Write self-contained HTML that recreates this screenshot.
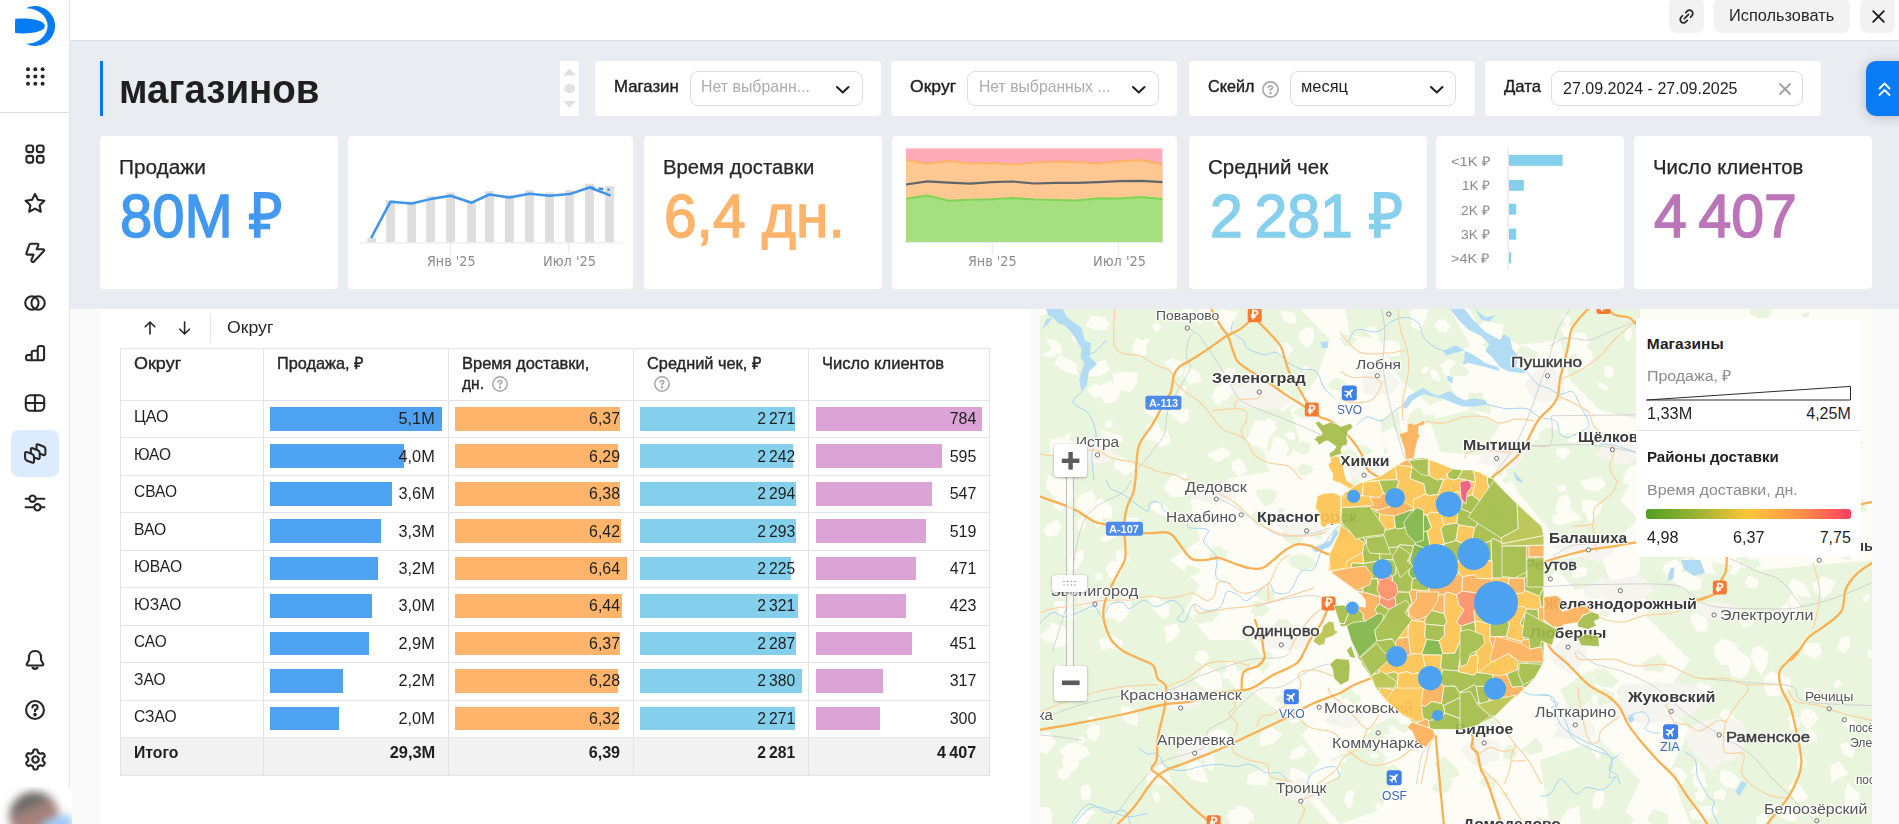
<!DOCTYPE html><html lang="ru"><head><meta charset="utf-8"><title>Дашборд магазинов</title><style>
*{box-sizing:border-box;margin:0;padding:0}
html,body{width:1899px;height:824px;overflow:hidden;background:#fff}
body{font-family:"Liberation Sans",sans-serif;color:#1f1f1f;position:relative;font-size:15px}
.abs{position:absolute}
.t{position:absolute;white-space:nowrap;line-height:1}
.card{position:absolute;background:#fff;border-radius:4px}
.sel{position:absolute;border:1px solid #dedede;border-radius:8px;background:#fff}
.med{-webkit-text-stroke:0.4px currentColor}
.big{-webkit-text-stroke:1.5px currentColor}
svg{position:absolute;overflow:visible}
</style></head><body>
<div class="abs" style="left:70px;top:40px;width:1829px;height:269px;background:#e9edf1"></div>
<div class="abs" style="left:70px;top:309px;width:30px;height:515px;background:#fafafa"></div>
<div class="abs" style="left:1030px;top:309px;width:10px;height:515px;background:#fafafa"></div>
<div class="abs" style="left:1872px;top:309px;width:27px;height:515px;background:#fafafa"></div>
<div class="abs" style="left:70px;top:40px;width:1829px;height:1px;background:#dfe2e6"></div>
<div class="abs" style="left:0;top:0;width:70px;height:824px;background:#fff"></div>
<div class="abs" style="left:69px;top:0;width:1px;height:787px;background:#e3e3e3"></div>
<div class="abs" style="left:0;top:112px;width:69px;height:1px;background:#e0e0e0"></div>
<svg style="left:15px;top:6px" width="40" height="40" viewBox="0 0 40 40"><path d="M11 2.14 A20 20 0 1 1 11 37.86 A21.6 17.86 0 0 0 11 2.14 Z" fill="#027bf3"/><path d="M0.2 12.9 C10 11.7 29.5 13 29.8 20 C29.5 27 10 28.2 0.2 27.1 C-0.1 22 -0.1 18 0.2 12.9 Z" fill="#027bf3"/></svg>
<svg style="left:0;top:0" width="70" height="100" fill="#262626"><circle cx="28.0" cy="69.2" r="2" /><circle cx="35.3" cy="69.2" r="2" /><circle cx="42.6" cy="69.2" r="2" /><circle cx="28.0" cy="76.5" r="2" /><circle cx="35.3" cy="76.5" r="2" /><circle cx="42.6" cy="76.5" r="2" /><circle cx="28.0" cy="83.8" r="2" /><circle cx="35.3" cy="83.8" r="2" /><circle cx="42.6" cy="83.8" r="2" /></svg>
<div class="abs" style="left:11px;top:430px;width:48px;height:47px;border-radius:8px;background:#dcebfd"></div>
<svg style="left:24.0px;top:143.0px" width="22" height="22" viewBox="0 0 16 16" fill="none" stroke="#262626" stroke-width="1.5" stroke-linecap="round" stroke-linejoin="round"><rect x="1.75" y="1.75" width="4.9" height="4.9" rx="1.5"/><rect x="9.35" y="1.75" width="4.9" height="4.9" rx="1.5"/><rect x="1.75" y="9.35" width="4.9" height="4.9" rx="1.5"/><rect x="9.35" y="9.35" width="4.9" height="4.9" rx="1.5"/></svg>
<svg style="left:24.0px;top:192.0px" width="22" height="22" viewBox="0 0 16 16" fill="none" stroke="#262626" stroke-width="1.5" stroke-linecap="round" stroke-linejoin="round"><path d="M8.00 1.35 L10.09 5.68 L14.85 6.33 L11.38 9.65 L12.23 14.37 L8.00 12.10 L3.77 14.37 L4.62 9.65 L1.15 6.33 L5.91 5.68 Z"/></svg>
<svg style="left:24.0px;top:242.0px" width="22" height="22" viewBox="0 0 16 16" fill="none" stroke="#262626" stroke-width="1.5" stroke-linecap="round" stroke-linejoin="round"><path d="M4.9 1.3 H9.7 Q10.7 1.3 10.4 2.2 L9.2 5.3 H13.7 Q15.1 5.4 14.4 6.6 L7.3 14.2 Q5.7 15.2 5.3 13.3 L6.9 9.2 H2.7 Q1.4 9.0 1.8 7.9 L3.9 2.0 Q4.1 1.3 4.9 1.3 Z"/></svg>
<svg style="left:24.0px;top:291.5px" width="22" height="22" viewBox="0 0 16 16" fill="none" stroke="#262626" stroke-width="1.5" stroke-linecap="round" stroke-linejoin="round"><circle cx="5.75" cy="8" r="4.85"/><circle cx="10.25" cy="8" r="4.85"/></svg>
<svg style="left:24.4px;top:342.0px" width="22" height="22" viewBox="0 0 16 16" fill="none" stroke="#262626" stroke-width="1.5" stroke-linecap="round" stroke-linejoin="round"><path d="M5.6 9.4 H2.9 Q1.5 9.4 1.5 10.8 V11.9 Q1.5 13.3 2.9 13.3 H13.1 Q14.6 13.3 14.6 11.8 V4.4 Q14.6 2.9 13.1 2.9 H11.5 Q10.0 2.9 10.0 4.4 V13.3 M5.6 13.3 V7.7 Q5.6 6.3 7.0 6.3 H10.0"/></svg>
<svg style="left:24.0px;top:392.0px" width="22" height="22" viewBox="0 0 16 16" fill="none" stroke="#262626" stroke-width="1.5" stroke-linecap="round" stroke-linejoin="round"><rect x="1.3" y="2.4" width="13.4" height="11.2" rx="3"/><path d="M1.3 8 H14.7 M8 2.4 V13.6"/></svg>
<svg style="left:24.0px;top:442.5px" width="22" height="22" viewBox="0 0 16 16" fill="none" stroke="#262626" stroke-width="1.5" stroke-linecap="round" stroke-linejoin="round"><path d="M9.10 2.06 Q9.10 0.56 10.50 1.10 L14.17 2.52 Q15.57 3.06 15.57 4.56 L15.57 7.72 Q15.57 9.22 14.16 8.71 L10.51 7.37 Q9.10 6.86 9.10 5.36 Z" fill="#dcebfd"/><path d="M4.95 4.83 Q4.95 3.33 6.35 3.87 L10.02 5.29 Q11.42 5.83 11.42 7.33 L11.42 10.49 Q11.42 11.99 10.01 11.48 L6.36 10.14 Q4.95 9.63 4.95 8.13 Z" fill="#dcebfd"/><path d="M0.80 7.60 Q0.80 6.10 2.20 6.64 L5.87 8.06 Q7.27 8.60 7.27 10.10 L7.27 13.26 Q7.27 14.76 5.86 14.25 L2.21 12.91 Q0.80 12.40 0.80 10.90 Z" fill="#dcebfd"/></svg>
<svg style="left:24.0px;top:492.0px" width="22" height="22" viewBox="0 0 16 16" fill="none" stroke="#262626" stroke-width="1.5" stroke-linecap="round" stroke-linejoin="round"><path d="M1.2 4.9 H3.8 M8.6 4.9 H14.8 M1.2 11.1 H7.4 M12.2 11.1 H14.8"/><circle cx="6.2" cy="4.9" r="2.3"/><circle cx="9.8" cy="11.1" r="2.3"/></svg>
<svg style="left:24.3px;top:648.5px" width="22" height="22" viewBox="0 0 16 16" fill="none" stroke="#262626" stroke-width="1.5" stroke-linecap="round" stroke-linejoin="round"><path d="M8 1.5 C5.0 1.5 3.6 3.7 3.6 6.1 L3.6 8.0 L2.0 10.9 Q1.7 12.0 2.9 12.0 L13.1 12.0 Q14.3 12.0 14.0 10.9 L12.4 8.0 L12.4 6.1 C12.4 3.7 11.0 1.5 8 1.5 Z"/><path d="M6.3 13.7 Q8 15.1 9.7 13.7" stroke-width="1.7"/></svg>
<svg style="left:24.4px;top:698.5px" width="22" height="22" viewBox="0 0 16 16" fill="none" stroke="#262626" stroke-width="1.5" stroke-linecap="round" stroke-linejoin="round"><circle cx="8" cy="8" r="6.5"/><path d="M6.1 6.2 Q6.2 4.4 8 4.4 Q9.9 4.4 9.9 6.1 Q9.9 7.2 8 8.0 L8 8.9"/><circle cx="8" cy="11.3" r="0.6" fill="#262626"/></svg>
<svg style="left:23.9px;top:748.1px" width="23" height="23" viewBox="0 0 16 16" fill="none" stroke="#262626" stroke-width="1.5" stroke-linecap="round" stroke-linejoin="round"><path d="M13.05 8.00 L13.04 8.33 L13.01 8.66 L13.21 9.04 L13.80 9.55 L14.34 10.15 L14.42 10.66 L14.23 11.07 L14.02 11.47 L13.78 11.86 L13.51 12.23 L13.03 12.41 L12.24 12.24 L11.50 11.99 L11.07 12.01 L10.81 12.20 L10.53 12.37 L10.23 12.53 L9.93 12.67 L9.71 13.03 L9.55 13.80 L9.31 14.56 L8.91 14.89 L8.45 14.94 L8.00 14.95 L7.55 14.94 L7.09 14.89 L6.69 14.56 L6.45 13.80 L6.29 13.03 L6.07 12.67 L5.77 12.53 L5.48 12.37 L5.19 12.20 L4.93 12.01 L4.50 11.99 L3.76 12.24 L2.97 12.41 L2.49 12.23 L2.22 11.86 L1.98 11.47 L1.77 11.07 L1.58 10.66 L1.66 10.15 L2.20 9.55 L2.79 9.04 L2.99 8.66 L2.96 8.33 L2.95 8.00 L2.96 7.67 L2.99 7.34 L2.79 6.96 L2.20 6.45 L1.66 5.85 L1.58 5.34 L1.77 4.93 L1.98 4.53 L2.22 4.14 L2.49 3.77 L2.97 3.59 L3.76 3.76 L4.50 4.01 L4.93 3.99 L5.19 3.80 L5.47 3.63 L5.77 3.47 L6.07 3.33 L6.29 2.97 L6.45 2.20 L6.69 1.44 L7.09 1.11 L7.55 1.06 L8.00 1.05 L8.45 1.06 L8.91 1.11 L9.31 1.44 L9.55 2.20 L9.71 2.97 L9.93 3.33 L10.23 3.47 L10.53 3.63 L10.81 3.80 L11.07 3.99 L11.50 4.01 L12.24 3.76 L13.03 3.59 L13.51 3.77 L13.78 4.14 L14.02 4.52 L14.23 4.93 L14.42 5.34 L14.34 5.85 L13.80 6.45 L13.21 6.96 L13.01 7.34 L13.04 7.67 Z"/><circle cx="8" cy="8" r="2.25"/></svg>
<div class="abs" style="left:0;top:787px;width:72px;height:37px;background:#fff;overflow:hidden"><div class="abs" style="left:9px;top:5px;width:50px;height:48px;border-radius:50%;transform:rotate(-24deg);filter:blur(4.5px);background:linear-gradient(180deg,#5f5f5d 0%,#6f6a68 22%,#a3837d 40%,#a88078 62%,#b0897c 80%,#b9998e 100%)"></div><div class="abs" style="left:40px;top:30px;width:34px;height:18px;border-radius:40%;transform:rotate(-20deg);filter:blur(4px);background:#9cc8f6"></div></div>
<div class="abs" style="left:1669px;top:-3px;width:35px;height:36px;border-radius:8px;background:#f2f2f2"></div>
<div class="abs" style="left:1714px;top:-3px;width:136px;height:36px;border-radius:8px;background:#f2f2f2"></div>
<div class="abs" style="left:1860px;top:-3px;width:35px;height:36px;border-radius:8px;background:#f2f2f2"></div>
<div class="t " id="t_use" style="left:1729.3px;transform-origin:0 50%;top:7.0px;font-size:17px;transform:scaleX(0.961);color:#262626">Использовать</div>
<svg style="left:1678px;top:7.5px" width="17" height="17" viewBox="0 0 16 16" fill="none" stroke="#262626" stroke-width="1.6" stroke-linecap="round" stroke-linejoin="round"><path d="M7.3 4.3 L8.6 3 A3.1 3.1 0 0 1 13 7.4 L11.7 8.7"/><path d="M8.7 11.7 L7.4 13 A3.1 3.1 0 0 1 3 8.6 L4.3 7.3"/><path d="M6 10 L10 6"/></svg>
<svg style="left:1871.5px;top:9.5px" width="13" height="13" viewBox="0 0 13 13" fill="none" stroke="#1f1f1f" stroke-width="1.9" stroke-linecap="round"><path d="M1.2 1.2 L11.8 11.8 M11.8 1.2 L1.2 11.8"/></svg>
<div class="abs" style="left:100px;top:61px;width:3px;height:55px;background:#0a75f5"></div>
<div class="t " id="t_title" style="left:119.0px;transform-origin:0 50%;top:69.3px;font-size:41px;transform:scaleX(0.939);font-weight:700;color:#1f1f1f">магазинов</div>
<div class="abs" style="left:560px;top:61px;width:19px;height:55px;background:#fff"></div>
<svg style="left:560px;top:61px" width="19" height="55" fill="#e1e1e1"><path d="M3 14.5 L9.5 7.5 L16 14.5 Z"/><ellipse cx="9.5" cy="27.5" rx="5.5" ry="4.5"/><path d="M3 40 L9.5 47 L16 40 Z"/></svg>
<div class="card" style="left:595px;top:61px;width:286px;height:55px"></div>
<div class="card" style="left:891px;top:61px;width:286px;height:55px"></div>
<div class="card" style="left:1189px;top:61px;width:286px;height:55px"></div>
<div class="card" style="left:1485px;top:61px;width:336px;height:55px"></div>
<div class="t med" id="t_f1" style="left:614.3px;transform-origin:0 50%;top:78.4px;font-size:17px;transform:scaleX(0.987);color:#1f1f1f">Магазин</div>
<div class="sel" style="left:690px;top:71px;width:173px;height:34.5px"></div>
<div class="t " id="t_p1" style="left:701.0px;transform-origin:0 50%;top:78.4px;font-size:17px;transform:scaleX(0.935);color:#adadad">Нет выбранн...</div>
<svg style="left:836.2px;top:85.5px" width="13" height="8" viewBox="0 0 13 8" fill="none" stroke="#1f1f1f" stroke-width="2" stroke-linecap="round" stroke-linejoin="round"><path d="M1 1 L6.8 6.5 L12.5 1"/></svg>
<div class="t med" id="t_f2" style="left:910.4px;transform-origin:0 50%;top:78.4px;font-size:17px;transform:scaleX(1.033);color:#1f1f1f">Округ</div>
<div class="sel" style="left:967px;top:71px;width:192px;height:34.5px"></div>
<div class="t " id="t_p2" style="left:978.5px;transform-origin:0 50%;top:78.4px;font-size:17px;transform:scaleX(0.926);color:#adadad">Нет выбранных ...</div>
<svg style="left:1132.2px;top:85.5px" width="13" height="8" viewBox="0 0 13 8" fill="none" stroke="#1f1f1f" stroke-width="2" stroke-linecap="round" stroke-linejoin="round"><path d="M1 1 L6.8 6.5 L12.5 1"/></svg>
<div class="t med" id="t_f3" style="left:1207.6px;transform-origin:0 50%;top:78.4px;font-size:17px;transform:scaleX(0.951);color:#1f1f1f">Скейл</div>
<svg style="left:1261.5px;top:80.5px" width="17" height="17" viewBox="0 0 16 16" fill="none" stroke="#a6a6a6" stroke-width="1.5" stroke-linecap="round" stroke-linejoin="round"><circle cx="8" cy="8" r="7.2"/><path d="M6.0 6.3 Q6.1 4.4 8 4.4 Q9.9 4.4 9.9 6.1 Q9.9 7.2 8 8.0 L8 9.0"/><circle cx="8" cy="11.5" r="0.5" fill="#a6a6a6"/></svg>
<div class="sel" style="left:1290px;top:71px;width:166px;height:34.5px"></div>
<div class="t " id="t_p3" style="left:1301.0px;transform-origin:0 50%;top:78.4px;font-size:17px;transform:scaleX(0.967);color:#1f1f1f">месяц</div>
<svg style="left:1429.8px;top:85.5px" width="13" height="8" viewBox="0 0 13 8" fill="none" stroke="#1f1f1f" stroke-width="2" stroke-linecap="round" stroke-linejoin="round"><path d="M1 1 L6.8 6.5 L12.5 1"/></svg>
<div class="t med" id="t_f4" style="left:1504.0px;transform-origin:0 50%;top:78.4px;font-size:17px;transform:scaleX(0.983);color:#1f1f1f">Дата</div>
<div class="sel" style="left:1551px;top:71px;width:252px;height:34.5px"></div>
<div class="t " id="t_p4" style="left:1562.5px;transform-origin:0 50%;top:79.5px;font-size:17px;transform:scaleX(0.942);color:#1f1f1f">27.09.2024 - 27.09.2025</div>
<svg style="left:1779px;top:83px" width="12" height="12" viewBox="0 0 12 12" fill="none" stroke="#9e9e9e" stroke-width="1.8" stroke-linecap="round"><path d="M1 1 L11 11 M11 1 L1 11"/></svg>
<div class="abs" style="left:1866px;top:61px;width:40px;height:55px;border-radius:10px 0 0 10px;background:#0a7bf7;box-shadow:0 1px 12px rgba(0,0,0,.22)"></div>
<svg style="left:1877.5px;top:81.5px" width="13" height="15" viewBox="0 0 13 15" fill="none" stroke="#fff" stroke-width="1.8" stroke-linecap="round" stroke-linejoin="round"><path d="M1.5 6.5 L6.5 1.5 L11.5 6.5 M1.5 13 L6.5 8 L11.5 13"/></svg>
<div class="card" style="left:100px;top:136px;width:238px;height:153px"></div>
<div class="card" style="left:348px;top:136px;width:285px;height:153px"></div>
<div class="card" style="left:644px;top:136px;width:238px;height:153px"></div>
<div class="card" style="left:892px;top:136px;width:285px;height:153px"></div>
<div class="card" style="left:1189px;top:136px;width:238px;height:153px"></div>
<div class="card" style="left:1436px;top:136px;width:188px;height:153px"></div>
<div class="card" style="left:1634px;top:136px;width:238px;height:153px"></div>
<div class="t " id="t_k1l" style="left:119.4px;transform-origin:0 50%;top:156.8px;font-size:20px;transform:scaleX(1.039);color:#262626;-webkit-text-stroke:0.25px #262626">Продажи</div>
<div class="t big" id="t_k1v" style="left:120.0px;transform-origin:0 50%;top:184.7px;font-size:62px;transform:scaleX(0.934);color:#4398f0">80M&nbsp;₽</div>
<div class="t " id="t_k3l" style="left:663.0px;transform-origin:0 50%;top:156.8px;font-size:20px;transform:scaleX(1.015);color:#262626;-webkit-text-stroke:0.25px #262626">Время доставки</div>
<div class="t big" id="t_k3v" style="left:663.6px;transform-origin:0 50%;top:184.7px;font-size:62px;transform:scaleX(0.946);color:#ffb46b">6,4&nbsp;дн.</div>
<div class="t " id="t_k5l" style="left:1208.0px;transform-origin:0 50%;top:156.8px;font-size:20px;transform:scaleX(1.026);color:#262626;-webkit-text-stroke:0.25px #262626">Средний чек</div>
<div class="t big" id="t_k5v" style="left:1210.0px;transform-origin:0 50%;top:184.7px;font-size:62px;transform:scaleX(0.950);color:#86d0ee">2&#8201;281&nbsp;₽</div>
<div class="t " id="t_k7l" style="left:1653.0px;transform-origin:0 50%;top:156.8px;font-size:20px;transform:scaleX(1.018);color:#262626;-webkit-text-stroke:0.25px #262626">Число клиентов</div>
<div class="t big" id="t_k7v" style="left:1653.8px;transform-origin:0 50%;top:184.7px;font-size:62px;transform:scaleX(0.950);color:#bb75b8">4&#8201;407</div>
<svg style="left:0;top:0" width="1899" height="300"><rect x="367.2" y="238.2" width="8.8" height="4.1" fill="#dedede"/><rect x="386.1" y="200.1" width="8.8" height="42.2" fill="#dedede"/><rect x="407.3" y="201.7" width="8.8" height="40.6" fill="#dedede"/><rect x="426.1" y="196.1" width="8.8" height="46.2" fill="#dedede"/><rect x="446.2" y="192.5" width="8.8" height="49.8" fill="#dedede"/><rect x="467.2" y="201.1" width="8.8" height="41.2" fill="#dedede"/><rect x="485.0" y="191.1" width="8.8" height="51.2" fill="#dedede"/><rect x="505.0" y="195.1" width="8.8" height="47.2" fill="#dedede"/><rect x="525.1" y="190.1" width="8.8" height="52.2" fill="#dedede"/><rect x="545.1" y="192.5" width="8.8" height="49.8" fill="#dedede"/><rect x="565.1" y="190.1" width="8.8" height="52.2" fill="#dedede"/><rect x="585.1" y="183.7" width="8.8" height="58.6" fill="#dedede"/><rect x="605.2" y="186.1" width="8.8" height="56.2" fill="#dedede"/><rect x="360" y="242.3" width="261.5" height="1" fill="#e6e6e6"/><rect x="450.1" y="243" width="1" height="11" fill="#e6e6e6"/><rect x="567.8" y="243" width="1" height="11" fill="#e6e6e6"/><polyline points="371.6,237.2 390.5,201.7 411.7,203.5 430.5,199.1 450.6,195.7 471.6,202.7 489.4,194.5 509.4,197.5 529.5,193.7 549.5,195.7 569.5,194.1 589.5,187.5 609.6,195.1" fill="none" stroke="#3f94ee" stroke-width="2.5" stroke-linejoin="round" stroke-linecap="round"/><line x1="589.5" y1="187.5" x2="609.6" y2="189.7" stroke="#3f94ee" stroke-width="2.6" stroke-dasharray="5 4" stroke-linecap="butt"/></svg>
<div class="t " id="t_c1a" style="left:426.5px;transform-origin:0 50%;top:254.2px;font-size:14.2px;transform:scaleX(0.899);font-family:'DejaVu Sans',sans-serif;color:#8c8c8c">Янв '25</div>
<div class="t " id="t_c1b" style="left:542.6px;transform-origin:0 50%;top:254.2px;font-size:14.2px;transform:scaleX(0.911);font-family:'DejaVu Sans',sans-serif;color:#8c8c8c">Июл '25</div>
<svg style="left:0;top:0" width="1899" height="300"><rect x="906.0" y="148.4" width="256.4" height="93.5" fill="#ffabb8"/><polygon points="906.0,160.0 927.4,163.6 948.7,161.0 970.1,163.6 991.5,163.0 1012.8,164.6 1034.2,162.6 1055.6,161.4 1076.9,162.0 1098.3,163.4 1119.7,161.0 1141.0,160.0 1162.4,164.6 1162.4,241.9 906.0,241.9" fill="#ffc892"/><polygon points="906.0,198.7 927.4,195.5 948.7,200.7 970.1,199.7 991.5,199.3 1012.8,198.1 1034.2,199.5 1055.6,199.9 1076.9,200.5 1098.3,198.3 1119.7,198.5 1141.0,197.1 1162.4,199.1 1162.4,241.9 906.0,241.9" fill="#a6df7f"/><polyline points="906.0,160.0 927.4,163.6 948.7,161.0 970.1,163.6 991.5,163.0 1012.8,164.6 1034.2,162.6 1055.6,161.4 1076.9,162.0 1098.3,163.4 1119.7,161.0 1141.0,160.0 1162.4,164.6" fill="none" stroke="#ffb266" stroke-width="2" stroke-linejoin="round"/><polyline points="906.0,198.7 927.4,195.5 948.7,200.7 970.1,199.7 991.5,199.3 1012.8,198.1 1034.2,199.5 1055.6,199.9 1076.9,200.5 1098.3,198.3 1119.7,198.5 1141.0,197.1 1162.4,199.1" fill="none" stroke="#7fd455" stroke-width="2" stroke-linejoin="round"/><polyline points="906.0,184.5 927.4,181.3 948.7,182.7 970.1,183.7 991.5,182.1 1012.8,181.5 1034.2,183.5 1055.6,182.9 1076.9,182.9 1098.3,182.1 1119.7,181.1 1141.0,180.9 1162.4,182.1" fill="none" stroke="#60656b" stroke-width="2.2" stroke-linejoin="round"/><rect x="903.6" y="242.3" width="261.2" height="1" fill="#e6e6e6"/><rect x="991.7" y="243" width="1" height="11" fill="#e6e6e6"/><rect x="1117.8" y="243" width="1" height="11" fill="#e6e6e6"/></svg>
<div class="t " id="t_c2a" style="left:968.0px;transform-origin:0 50%;top:254.2px;font-size:14.2px;transform:scaleX(0.899);font-family:'DejaVu Sans',sans-serif;color:#8c8c8c">Янв '25</div>
<div class="t " id="t_c2b" style="left:1092.5px;transform-origin:0 50%;top:254.2px;font-size:14.2px;transform:scaleX(0.912);font-family:'DejaVu Sans',sans-serif;color:#8c8c8c">Июл '25</div>
<svg style="left:0;top:0" width="1899" height="300"><rect x="1507.6" y="148" width="1" height="122" fill="#e0e0e0"/><rect x="1509" y="155.0" width="53.6" height="10.8" fill="#84d0ec"/><rect x="1509" y="180.0" width="14.8" height="10.8" fill="#84d0ec"/><rect x="1509" y="203.7" width="7.2" height="10.9" fill="#84d0ec"/><rect x="1509" y="228.6" width="7.2" height="11.1" fill="#84d0ec"/><rect x="1509" y="252.3" width="2.0" height="11.0" fill="#84d0ec"/></svg>
<div class="t " id="t_h0" style="left:1450.7px;transform-origin:0 50%;top:155.1px;font-size:13.2px;transform:scaleX(1.113);color:#8a8a8a;font-weight:400">&lt;1K&nbsp;₽</div>
<div class="t " id="t_h1" style="left:1461.8px;transform-origin:0 50%;top:179.1px;font-size:13.2px;transform:scaleX(1.022);color:#8a8a8a;font-weight:400">1K&nbsp;₽</div>
<div class="t " id="t_h2" style="left:1461.0px;transform-origin:0 50%;top:204.0px;font-size:13.2px;transform:scaleX(1.050);color:#8a8a8a;font-weight:400">2K&nbsp;₽</div>
<div class="t " id="t_h3" style="left:1461.0px;transform-origin:0 50%;top:228.0px;font-size:13.2px;transform:scaleX(1.050);color:#8a8a8a;font-weight:400">3K&nbsp;₽</div>
<div class="t " id="t_h4" style="left:1451.4px;transform-origin:0 50%;top:251.6px;font-size:13.2px;transform:scaleX(1.093);color:#8a8a8a;font-weight:400">&gt;4K&nbsp;₽</div>
<svg style="left:143px;top:320px" width="50" height="16" fill="none" stroke="#262626" stroke-width="1.6" stroke-linecap="round" stroke-linejoin="round"><path d="M7 14 V2.2 M2.2 6.8 L7 2 L11.8 6.8"/><path d="M41.6 2 V13.8 M36.8 9.2 L41.6 14 L46.4 9.2"/></svg>
<div class="abs" style="left:210px;top:313.5px;width:1px;height:29px;background:#e5e5e5"></div>
<div class="t " id="t_tb" style="left:226.6px;transform-origin:0 50%;top:318.6px;font-size:17px;transform:scaleX(1.038);color:#262626">Округ</div>
<div class="abs" style="left:120.5px;top:737.4px;width:869.0px;height:37.7px;background:#f2f2f2"></div>
<svg style="left:0;top:0" width="1040" height="824" shape-rendering="crispEdges"><rect x="120.0" y="348.0" width="870.0" height="1" fill="#e3e3e3"/><rect x="120.0" y="399.9" width="870.0" height="1" fill="#e3e3e3"/><rect x="120.0" y="437.3" width="870.0" height="1" fill="#e3e3e3"/><rect x="120.0" y="474.8" width="870.0" height="1" fill="#e3e3e3"/><rect x="120.0" y="512.2" width="870.0" height="1" fill="#e3e3e3"/><rect x="120.0" y="549.7" width="870.0" height="1" fill="#e3e3e3"/><rect x="120.0" y="587.1" width="870.0" height="1" fill="#e3e3e3"/><rect x="120.0" y="624.6" width="870.0" height="1" fill="#e3e3e3"/><rect x="120.0" y="662.0" width="870.0" height="1" fill="#e3e3e3"/><rect x="120.0" y="699.5" width="870.0" height="1" fill="#e3e3e3"/><rect x="120.0" y="736.9" width="870.0" height="1" fill="#e3e3e3"/><rect x="120.0" y="774.6" width="870.0" height="1" fill="#e3e3e3"/><rect x="120.0" y="348.0" width="1" height="427.6" fill="#e3e3e3"/><rect x="262.9" y="348.0" width="1" height="427.6" fill="#e3e3e3"/><rect x="447.9" y="348.0" width="1" height="427.6" fill="#e3e3e3"/><rect x="632.9" y="348.0" width="1" height="427.6" fill="#e3e3e3"/><rect x="807.9" y="348.0" width="1" height="427.6" fill="#e3e3e3"/><rect x="989.0" y="348.0" width="1" height="427.6" fill="#e3e3e3"/><rect x="270" y="407.0" width="172.0" height="23.6" fill="#4da2f1"/><rect x="455.2" y="407.0" width="164.7" height="23.6" fill="#ffb46b"/><rect x="640" y="407.0" width="154.6" height="23.6" fill="#84d0ec"/><rect x="816" y="407.0" width="166.0" height="23.6" fill="#dca3d6"/><rect x="270" y="444.4" width="134.0" height="23.6" fill="#4da2f1"/><rect x="455.2" y="444.4" width="162.6" height="23.6" fill="#ffb46b"/><rect x="640" y="444.4" width="152.6" height="23.6" fill="#84d0ec"/><rect x="816" y="444.4" width="126.0" height="23.6" fill="#dca3d6"/><rect x="270" y="481.9" width="121.6" height="23.6" fill="#4da2f1"/><rect x="455.2" y="481.9" width="165.0" height="23.6" fill="#ffb46b"/><rect x="640" y="481.9" width="156.1" height="23.6" fill="#84d0ec"/><rect x="816" y="481.9" width="115.8" height="23.6" fill="#dca3d6"/><rect x="270" y="519.3" width="111.0" height="23.6" fill="#4da2f1"/><rect x="455.2" y="519.3" width="166.0" height="23.6" fill="#ffb46b"/><rect x="640" y="519.3" width="156.1" height="23.6" fill="#84d0ec"/><rect x="816" y="519.3" width="109.9" height="23.6" fill="#dca3d6"/><rect x="270" y="556.8" width="108.0" height="23.6" fill="#4da2f1"/><rect x="455.2" y="556.8" width="171.7" height="23.6" fill="#ffb46b"/><rect x="640" y="556.8" width="151.4" height="23.6" fill="#84d0ec"/><rect x="816" y="556.8" width="99.7" height="23.6" fill="#dca3d6"/><rect x="270" y="594.2" width="102.0" height="23.6" fill="#4da2f1"/><rect x="455.2" y="594.2" width="166.5" height="23.6" fill="#ffb46b"/><rect x="640" y="594.2" width="158.0" height="23.6" fill="#84d0ec"/><rect x="816" y="594.2" width="89.6" height="23.6" fill="#dca3d6"/><rect x="270" y="631.7" width="98.7" height="23.6" fill="#4da2f1"/><rect x="455.2" y="631.7" width="164.7" height="23.6" fill="#ffb46b"/><rect x="640" y="631.7" width="155.7" height="23.6" fill="#84d0ec"/><rect x="816" y="631.7" width="95.5" height="23.6" fill="#dca3d6"/><rect x="270" y="669.1" width="72.8" height="23.6" fill="#4da2f1"/><rect x="455.2" y="669.1" width="162.4" height="23.6" fill="#ffb46b"/><rect x="640" y="669.1" width="162.0" height="23.6" fill="#84d0ec"/><rect x="816" y="669.1" width="67.1" height="23.6" fill="#dca3d6"/><rect x="270" y="706.6" width="68.7" height="23.6" fill="#4da2f1"/><rect x="455.2" y="706.6" width="163.4" height="23.6" fill="#ffb46b"/><rect x="640" y="706.6" width="154.6" height="23.6" fill="#84d0ec"/><rect x="816" y="706.6" width="63.5" height="23.6" fill="#dca3d6"/></svg>
<div class="t med" id="t_th1" style="left:133.7px;transform-origin:0 50%;top:354.6px;font-size:17px;transform:scaleX(1.058);color:#262626">Округ</div>
<div class="t med" id="t_th2" style="left:276.9px;transform-origin:0 50%;top:354.6px;font-size:17px;transform:scaleX(0.958);color:#262626">Продажа,&nbsp;₽</div>
<div class="t med" id="t_th3" style="left:462.0px;transform-origin:0 50%;top:354.6px;font-size:17px;transform:scaleX(0.968);color:#262626">Время доставки,</div>
<div class="t med" id="t_th3b" style="left:462.0px;transform-origin:0 50%;top:375.3px;font-size:17px;transform:scaleX(0.915);color:#262626">дн.</div>
<svg style="left:491.8px;top:375.6px" width="16" height="16" viewBox="0 0 16 16" fill="none" stroke="#a6a6a6" stroke-width="1.5" stroke-linecap="round" stroke-linejoin="round"><circle cx="8" cy="8" r="7.2"/><path d="M6.0 6.3 Q6.1 4.4 8 4.4 Q9.9 4.4 9.9 6.1 Q9.9 7.2 8 8.0 L8 9.0"/><circle cx="8" cy="11.5" r="0.5" fill="#a6a6a6"/></svg>
<div class="t med" id="t_th4" style="left:646.6px;transform-origin:0 50%;top:354.6px;font-size:17px;transform:scaleX(0.961);color:#262626">Средний чек,&nbsp;₽</div>
<svg style="left:653.6px;top:375.6px" width="16" height="16" viewBox="0 0 16 16" fill="none" stroke="#a6a6a6" stroke-width="1.5" stroke-linecap="round" stroke-linejoin="round"><circle cx="8" cy="8" r="7.2"/><path d="M6.0 6.3 Q6.1 4.4 8 4.4 Q9.9 4.4 9.9 6.1 Q9.9 7.2 8 8.0 L8 9.0"/><circle cx="8" cy="11.5" r="0.5" fill="#a6a6a6"/></svg>
<div class="t med" id="t_th5" style="left:822.3px;transform-origin:0 50%;top:354.6px;font-size:17px;transform:scaleX(0.972);color:#262626">Число клиентов</div>
<div class="t " id="t_n0" style="left:134.2px;transform-origin:0 50%;top:408.4px;font-size:17px;transform:scaleX(0.938);">ЦАО</div>
<div class="t " id="t_s0" style="right:1464.2px;transform-origin:100% 50%;top:410.2px;font-size:17px;transform:scaleX(0.960);">5,1M</div>
<div class="t " id="t_m0" style="right:1278.8px;transform-origin:100% 50%;top:410.2px;font-size:17px;transform:scaleX(0.937);">6,37</div>
<div class="t " id="t_c0" style="right:1104.0px;transform-origin:100% 50%;top:410.2px;font-size:17px;transform:scaleX(0.922);">2&#8201;271</div>
<div class="t " id="t_l0" style="right:922.8px;transform-origin:100% 50%;top:410.2px;font-size:17px;transform:scaleX(0.941);">784</div>
<div class="t " id="t_n1" style="left:134.2px;transform-origin:0 50%;top:445.9px;font-size:17px;transform:scaleX(0.909);">ЮАО</div>
<div class="t " id="t_s1" style="right:1464.2px;transform-origin:100% 50%;top:447.7px;font-size:17px;transform:scaleX(0.960);">4,0M</div>
<div class="t " id="t_m1" style="right:1278.8px;transform-origin:100% 50%;top:447.7px;font-size:17px;transform:scaleX(0.937);">6,29</div>
<div class="t " id="t_c1" style="right:1104.0px;transform-origin:100% 50%;top:447.7px;font-size:17px;transform:scaleX(0.922);">2&#8201;242</div>
<div class="t " id="t_l1" style="right:922.8px;transform-origin:100% 50%;top:447.7px;font-size:17px;transform:scaleX(0.941);">595</div>
<div class="t " id="t_n2" style="left:134.2px;transform-origin:0 50%;top:483.3px;font-size:17px;transform:scaleX(0.910);">СВАО</div>
<div class="t " id="t_s2" style="right:1464.2px;transform-origin:100% 50%;top:485.1px;font-size:17px;transform:scaleX(0.960);">3,6M</div>
<div class="t " id="t_m2" style="right:1278.8px;transform-origin:100% 50%;top:485.1px;font-size:17px;transform:scaleX(0.937);">6,38</div>
<div class="t " id="t_c2" style="right:1104.0px;transform-origin:100% 50%;top:485.1px;font-size:17px;transform:scaleX(0.922);">2&#8201;294</div>
<div class="t " id="t_l2" style="right:922.8px;transform-origin:100% 50%;top:485.1px;font-size:17px;transform:scaleX(0.941);">547</div>
<div class="t " id="t_n3" style="left:134.2px;transform-origin:0 50%;top:520.7px;font-size:17px;transform:scaleX(0.924);">ВАО</div>
<div class="t " id="t_s3" style="right:1464.2px;transform-origin:100% 50%;top:522.5px;font-size:17px;transform:scaleX(0.960);">3,3M</div>
<div class="t " id="t_m3" style="right:1278.8px;transform-origin:100% 50%;top:522.5px;font-size:17px;transform:scaleX(0.937);">6,42</div>
<div class="t " id="t_c3" style="right:1104.0px;transform-origin:100% 50%;top:522.5px;font-size:17px;transform:scaleX(0.922);">2&#8201;293</div>
<div class="t " id="t_l3" style="right:922.8px;transform-origin:100% 50%;top:522.5px;font-size:17px;transform:scaleX(0.941);">519</div>
<div class="t " id="t_n4" style="left:134.2px;transform-origin:0 50%;top:558.2px;font-size:17px;transform:scaleX(0.922);">ЮВАО</div>
<div class="t " id="t_s4" style="right:1464.2px;transform-origin:100% 50%;top:560.0px;font-size:17px;transform:scaleX(0.960);">3,2M</div>
<div class="t " id="t_m4" style="right:1278.8px;transform-origin:100% 50%;top:560.0px;font-size:17px;transform:scaleX(0.937);">6,64</div>
<div class="t " id="t_c4" style="right:1104.0px;transform-origin:100% 50%;top:560.0px;font-size:17px;transform:scaleX(0.922);">2&#8201;225</div>
<div class="t " id="t_l4" style="right:922.8px;transform-origin:100% 50%;top:560.0px;font-size:17px;transform:scaleX(0.941);">471</div>
<div class="t " id="t_n5" style="left:134.2px;transform-origin:0 50%;top:595.6px;font-size:17px;transform:scaleX(0.916);">ЮЗАО</div>
<div class="t " id="t_s5" style="right:1464.2px;transform-origin:100% 50%;top:597.4px;font-size:17px;transform:scaleX(0.960);">3,0M</div>
<div class="t " id="t_m5" style="right:1278.8px;transform-origin:100% 50%;top:597.4px;font-size:17px;transform:scaleX(0.937);">6,44</div>
<div class="t " id="t_c5" style="right:1104.0px;transform-origin:100% 50%;top:597.4px;font-size:17px;transform:scaleX(0.922);">2&#8201;321</div>
<div class="t " id="t_l5" style="right:922.8px;transform-origin:100% 50%;top:597.4px;font-size:17px;transform:scaleX(0.941);">423</div>
<div class="t " id="t_n6" style="left:134.2px;transform-origin:0 50%;top:633.1px;font-size:17px;transform:scaleX(0.903);">САО</div>
<div class="t " id="t_s6" style="right:1464.2px;transform-origin:100% 50%;top:634.9px;font-size:17px;transform:scaleX(0.960);">2,9M</div>
<div class="t " id="t_m6" style="right:1278.8px;transform-origin:100% 50%;top:634.9px;font-size:17px;transform:scaleX(0.937);">6,37</div>
<div class="t " id="t_c6" style="right:1104.0px;transform-origin:100% 50%;top:634.9px;font-size:17px;transform:scaleX(0.922);">2&#8201;287</div>
<div class="t " id="t_l6" style="right:922.8px;transform-origin:100% 50%;top:634.9px;font-size:17px;transform:scaleX(0.941);">451</div>
<div class="t " id="t_n7" style="left:134.2px;transform-origin:0 50%;top:670.5px;font-size:17px;transform:scaleX(0.917);">ЗАО</div>
<div class="t " id="t_s7" style="right:1464.2px;transform-origin:100% 50%;top:672.3px;font-size:17px;transform:scaleX(0.960);">2,2M</div>
<div class="t " id="t_m7" style="right:1278.8px;transform-origin:100% 50%;top:672.3px;font-size:17px;transform:scaleX(0.937);">6,28</div>
<div class="t " id="t_c7" style="right:1104.0px;transform-origin:100% 50%;top:672.3px;font-size:17px;transform:scaleX(0.922);">2&#8201;380</div>
<div class="t " id="t_l7" style="right:922.8px;transform-origin:100% 50%;top:672.3px;font-size:17px;transform:scaleX(0.941);">317</div>
<div class="t " id="t_n8" style="left:134.2px;transform-origin:0 50%;top:708.0px;font-size:17px;transform:scaleX(0.919);">СЗАО</div>
<div class="t " id="t_s8" style="right:1464.2px;transform-origin:100% 50%;top:709.8px;font-size:17px;transform:scaleX(0.960);">2,0M</div>
<div class="t " id="t_m8" style="right:1278.8px;transform-origin:100% 50%;top:709.8px;font-size:17px;transform:scaleX(0.937);">6,32</div>
<div class="t " id="t_c8" style="right:1104.0px;transform-origin:100% 50%;top:709.8px;font-size:17px;transform:scaleX(0.922);">2&#8201;271</div>
<div class="t " id="t_l8" style="right:922.8px;transform-origin:100% 50%;top:709.8px;font-size:17px;transform:scaleX(0.941);">300</div>
<div class="t " id="t_ft0" style="left:134.0px;transform-origin:0 50%;top:744.2px;font-size:17px;transform:scaleX(0.926);color:#1f1f1f;font-weight:700">Итого</div>
<div class="t " id="t_ft1" style="right:1464.2px;transform-origin:100% 50%;top:744.2px;font-size:17px;transform:scaleX(0.965);color:#1f1f1f;font-weight:700">29,3M</div>
<div class="t " id="t_ft2" style="right:1278.8px;transform-origin:100% 50%;top:744.2px;font-size:17px;transform:scaleX(0.949);color:#1f1f1f;font-weight:700">6,39</div>
<div class="t " id="t_ft3" style="right:1104.0px;transform-origin:100% 50%;top:744.2px;font-size:17px;transform:scaleX(0.922);color:#1f1f1f;font-weight:700">2&#8201;281</div>
<div class="t " id="t_ft4" style="right:922.8px;transform-origin:100% 50%;top:744.2px;font-size:17px;transform:scaleX(0.951);color:#1f1f1f;font-weight:700">4&#8201;407</div>
<svg style="left:1040px;top:309px;overflow:hidden" width="832" height="515" viewBox="1040 309 832 515"><rect x="1040" y="309" width="832" height="515" fill="#fdfdf6"/><polygon points="1040.0,309.0 1300.0,309.0 1330.0,340.0 1316.0,380.0 1290.0,410.0 1300.0,440.0 1280.0,470.0 1230.0,478.0 1190.0,500.0 1200.0,540.0 1170.0,560.0 1200.0,585.0 1185.0,610.0 1210.0,640.0 1250.0,640.0 1270.0,665.0 1250.0,690.0 1290.0,720.0 1320.0,760.0 1300.0,790.0 1330.0,824.0 1040.0,824.0" fill="#e9f5dc"/><polygon points="1345.0,309.0 1450.0,309.0 1470.0,345.0 1440.0,365.0 1455.0,395.0 1430.0,405.0 1400.0,380.0 1380.0,340.0 1350.0,335.0" fill="#e9f5dc"/><polygon points="1470.0,309.0 1640.0,309.0 1640.0,420.0 1600.0,410.0 1570.0,380.0 1560.0,340.0 1520.0,345.0 1480.0,330.0" fill="#e9f5dc"/><polygon points="1505.0,470.0 1535.0,440.0 1590.0,430.0 1640.0,440.0 1640.0,470.0 1620.0,500.0 1640.0,520.0 1600.0,550.0 1560.0,540.0 1545.0,525.0 1520.0,495.0" fill="#e9f5dc"/><polygon points="1430.0,420.0 1470.0,410.0 1500.0,425.0 1480.0,455.0 1440.0,452.0" fill="#e9f5dc"/><polygon points="1640.0,540.0 1700.0,560.0 1760.0,570.0 1872.0,560.0 1872.0,824.0 1690.0,824.0 1670.0,770.0 1690.0,730.0 1660.0,700.0 1690.0,660.0 1650.0,620.0 1620.0,600.0 1640.0,570.0" fill="#e9f5dc"/><polygon points="1330.0,760.0 1370.0,740.0 1400.0,770.0 1380.0,810.0 1340.0,824.0 1320.0,800.0" fill="#e9f5dc"/><polygon points="1540.0,760.0 1600.0,740.0 1640.0,780.0 1620.0,824.0 1550.0,824.0" fill="#e9f5dc"/><polygon points="1560.0,690.0 1590.0,670.0 1600.0,700.0 1575.0,720.0" fill="#e9f5dc"/><polygon points="1550.0,560.0 1600.0,555.0 1610.0,580.0 1575.0,590.0" fill="#e9f5dc"/><polygon points="1380.0,420.0 1398.0,410.0 1402.0,440.0 1385.0,455.0" fill="#e9f5dc"/><polygon points="1296.0,546.9 1285.5,541.1 1282.7,537.2 1284.9,528.4 1293.7,526.5 1298.2,533.4 1304.0,539.4" fill="#eaf5de"/><polygon points="1488.7,518.0 1485.2,514.3 1491.1,509.0 1496.1,507.4 1500.5,513.0 1503.9,518.5 1496.1,519.0" fill="#eaf5de"/><polygon points="1368.0,744.6 1363.1,736.2 1373.8,730.2 1384.5,736.2 1380.4,744.6" fill="#eaf5de"/><polygon points="1484.0,723.3 1488.5,733.1 1478.3,736.8 1470.8,734.5 1467.1,725.8" fill="#eaf5de"/><polygon points="1727.9,528.3 1726.5,531.3 1727.5,533.6 1721.7,536.4 1718.8,534.7 1716.0,531.1 1715.8,526.2 1722.0,526.3" fill="#eaf5de"/><polygon points="1263.7,657.8 1263.9,654.7 1266.0,651.3 1269.9,651.7 1273.1,654.4 1272.9,657.4 1267.8,659.5" fill="#eaf5de"/><polygon points="1292.1,645.0 1288.3,647.5 1283.4,647.6 1278.3,645.6 1282.3,642.6 1288.1,641.6" fill="#eaf5de"/><polygon points="1626.7,690.5 1628.2,694.5 1622.5,696.1 1617.4,694.0 1617.4,690.4 1620.3,686.5 1625.8,688.8" fill="#eaf5de"/><polygon points="1451.7,763.0 1457.5,768.4 1459.4,776.0 1447.4,779.9 1439.0,779.1 1437.1,770.4 1433.7,762.7 1444.8,756.6" fill="#eaf5de"/><polygon points="1593.8,670.3 1597.7,668.0 1600.4,669.9 1604.6,673.9 1599.9,677.4 1594.0,677.3 1590.0,673.4" fill="#eaf5de"/><polygon points="1520.3,749.9 1529.3,743.2 1536.3,737.7 1543.1,746.6 1542.1,752.0 1531.2,755.1" fill="#eaf5de"/><polygon points="1386.7,720.0 1391.6,717.2 1398.6,719.6 1399.8,724.7 1392.3,726.7 1386.5,725.7" fill="#eaf5de"/><polygon points="1358.6,482.8 1358.4,488.7 1354.5,492.5 1350.0,489.9 1350.1,484.6" fill="#eaf5de"/><polygon points="1855.9,510.1 1851.2,507.9 1853.3,503.2 1860.3,503.6 1862.0,508.2" fill="#eaf5de"/><polygon points="1716.6,356.1 1722.7,348.1 1732.6,349.6 1731.1,359.4 1723.4,363.0" fill="#eaf5de"/><polygon points="1761.0,566.0 1756.9,567.8 1749.1,570.2 1746.6,565.5 1746.8,560.6 1753.4,559.3 1758.4,559.5" fill="#eaf5de"/><polygon points="1335.1,704.4 1339.3,709.5 1330.7,711.4 1322.6,709.2 1325.4,703.7 1330.9,701.8" fill="#eaf5de"/><polygon points="1737.1,395.5 1734.1,391.6 1740.7,388.5 1744.8,382.7 1749.1,385.6 1752.3,391.0 1753.6,396.6 1745.6,396.2" fill="#eaf5de"/><polygon points="1805.9,343.6 1799.6,346.5 1789.9,345.7 1790.4,341.2 1799.0,339.6" fill="#eaf5de"/><polygon points="1657.1,532.1 1659.6,534.7 1659.6,536.9 1656.8,540.8 1653.6,540.1 1651.4,537.4 1650.6,534.2 1653.1,532.0" fill="#eaf5de"/><polygon points="1431.9,690.6 1420.1,684.6 1416.3,679.7 1417.6,671.1 1431.2,674.3 1438.5,679.9" fill="#eaf5de"/><polygon points="1566.3,717.6 1575.5,712.4 1582.4,716.2 1586.0,726.9 1575.3,729.6 1564.1,726.5" fill="#eaf5de"/><polygon points="1293.2,413.6 1297.8,408.4 1302.0,405.8 1309.7,406.4 1310.1,411.7 1308.0,416.6 1305.6,418.6 1300.5,417.8" fill="#eaf5de"/><polygon points="1755.3,542.5 1756.0,549.8 1744.9,548.0 1742.6,542.7 1750.0,540.5" fill="#eaf5de"/><polygon points="1419.9,660.2 1412.7,665.2 1404.1,662.2 1404.3,654.4 1416.5,652.0" fill="#eaf5de"/><polygon points="1434.0,414.4 1435.2,418.5 1432.2,424.1 1422.2,421.9 1425.7,414.4" fill="#eaf5de"/><polygon points="1285.2,696.2 1287.1,701.5 1282.0,704.1 1277.5,702.1 1274.5,698.8 1280.2,694.5" fill="#eaf5de"/><polygon points="1254.5,490.3 1268.7,488.6 1277.0,492.5 1274.7,502.1 1265.2,506.5 1258.6,498.3" fill="#eaf5de"/><polygon points="1333.3,531.6 1338.5,525.2 1349.1,526.3 1352.7,529.9 1357.6,538.5 1346.3,541.3 1337.3,538.2" fill="#eaf5de"/><polygon points="1468.9,398.9 1467.7,393.5 1474.2,392.8 1482.7,392.7 1483.2,396.0 1481.6,401.0 1477.6,404.5 1468.6,403.6" fill="#eaf5de"/><polygon points="1330.8,381.5 1336.7,377.7 1344.3,380.6 1345.9,386.2 1339.7,390.7 1331.6,389.9 1327.0,385.3" fill="#eaf5de"/><polygon points="1845.9,559.6 1840.6,557.8 1842.0,555.1 1846.3,552.2 1850.6,553.6 1851.2,557.1 1849.0,560.9" fill="#eaf5de"/><polygon points="1350.0,448.6 1356.6,454.1 1360.7,460.0 1350.6,463.8 1342.7,465.9 1339.4,458.8 1337.7,453.2 1344.4,450.4" fill="#eaf5de"/><polygon points="1428.9,644.9 1421.2,640.8 1418.0,634.7 1427.0,631.9 1437.8,634.3 1438.8,640.5" fill="#eaf5de"/><polygon points="1363.0,603.7 1371.4,598.4 1375.6,602.6 1383.3,604.4 1378.6,608.2 1377.0,613.8 1371.7,610.8 1368.9,608.1" fill="#eaf5de"/><polygon points="1288.7,556.3 1302.6,553.7 1312.8,559.0 1315.8,566.7 1301.8,570.9 1288.9,565.3" fill="#eaf5de"/><polygon points="1526.1,358.9 1525.1,356.3 1526.3,351.0 1530.7,353.0 1534.9,356.1 1532.3,359.3" fill="#eaf5de"/><polygon points="1668.2,822.6 1656.3,829.3 1647.6,820.0 1653.1,808.7 1667.4,814.0" fill="#eaf5de"/><polygon points="1501.4,672.2 1490.7,676.9 1480.5,676.2 1481.1,670.0 1482.0,661.9 1495.3,665.5" fill="#eaf5de"/><polygon points="1256.0,510.2 1264.0,511.3 1272.1,516.8 1267.2,522.9 1259.1,526.9 1252.6,521.9 1251.4,515.3" fill="#eaf5de"/><polygon points="1393.4,659.4 1396.3,656.6 1403.7,656.3 1407.4,660.6 1404.5,663.9 1397.8,665.2 1394.4,665.3" fill="#eaf5de"/><polygon points="1841.1,495.2 1843.1,496.0 1846.9,496.5 1845.7,499.2 1845.2,501.4 1841.5,500.8 1840.1,499.7 1838.3,497.7" fill="#eaf5de"/><polygon points="1413.5,640.2 1411.8,634.5 1417.1,629.8 1425.2,629.9 1428.9,634.2 1432.6,637.8 1428.0,642.4 1420.8,642.6" fill="#eaf5de"/><polygon points="1296.1,468.9 1302.7,463.3 1309.0,465.7 1313.7,468.7 1311.0,472.6 1307.3,475.0 1300.9,475.5 1299.1,472.9" fill="#eaf5de"/><polygon points="1696.5,342.1 1709.9,347.3 1697.7,359.3 1683.0,355.1 1680.8,344.0" fill="#eaf5de"/><polygon points="1455.4,363.0 1450.3,359.0 1452.1,353.9 1457.7,351.8 1463.6,353.0 1466.0,356.7 1466.3,361.3 1461.6,363.9" fill="#eaf5de"/><polygon points="1337.0,565.9 1335.8,556.0 1346.5,556.1 1355.8,558.1 1356.8,565.9 1350.0,570.3 1342.4,568.8" fill="#eaf5de"/><polygon points="1470.5,685.9 1478.6,684.0 1485.9,687.2 1484.9,692.9 1476.2,695.4 1472.0,690.7" fill="#eaf5de"/><polygon points="1359.3,485.1 1351.0,485.3 1349.6,481.8 1351.9,478.3 1358.1,477.5 1361.4,481.1" fill="#eaf5de"/><polygon points="1382.9,498.2 1377.6,503.7 1368.8,503.3 1363.7,497.2 1362.7,488.6 1369.1,487.1 1377.4,483.1 1382.9,491.9" fill="#eaf5de"/><polygon points="1491.0,644.3 1499.9,655.6 1487.7,663.7 1473.6,657.8 1478.5,648.2" fill="#eaf5de"/><polygon points="1614.4,693.6 1613.8,702.3 1599.4,705.8 1590.9,696.8 1602.5,687.9" fill="#eaf5de"/><polygon points="1491.8,754.4 1489.1,761.8 1483.7,765.3 1476.7,766.3 1470.7,761.9 1473.5,756.2 1476.7,750.2 1483.1,752.7" fill="#eaf5de"/><polygon points="1280.5,507.5 1284.5,508.6 1283.8,513.4 1280.0,514.2 1276.6,511.1" fill="#eaf5de"/><polygon points="1403.9,659.2 1405.7,653.8 1410.4,649.7 1418.9,648.5 1425.5,652.6 1428.1,659.3 1418.3,665.8 1411.7,664.5" fill="#eaf5de"/><polygon points="1254.2,595.5 1262.8,585.9 1275.1,591.5 1273.9,600.1 1263.2,601.2" fill="#eaf5de"/><polygon points="1183.8,572.8 1186.6,565.3 1192.7,566.3 1200.4,569.0 1198.9,573.8 1190.0,576.7" fill="#eaf5de"/><polygon points="1514.7,629.7 1514.5,635.4 1509.8,639.5 1504.5,635.1 1507.3,629.8" fill="#eaf5de"/><polygon points="1646.6,702.6 1648.2,696.6 1654.9,697.1 1656.9,703.7 1650.4,706.2" fill="#eaf5de"/><polygon points="1324.1,532.6 1321.9,535.3 1322.1,539.0 1317.9,539.3 1313.6,536.5 1312.7,534.2 1316.1,532.1 1319.2,530.0" fill="#eaf5de"/><polygon points="1500.0,471.3 1503.6,473.3 1503.5,475.9 1498.7,477.3 1496.5,474.7 1495.7,471.6" fill="#eaf5de"/><polygon points="1488.8,349.7 1482.5,345.1 1488.5,338.1 1497.1,341.2 1496.7,350.0" fill="#eaf5de"/><polygon points="1212.2,609.1 1220.1,613.0 1216.5,617.6 1211.9,622.0 1200.9,622.3 1199.3,614.8 1204.6,611.1" fill="#eaf5de"/><polygon points="1863.4,499.4 1862.2,503.7 1867.2,511.1 1856.7,513.3 1848.9,512.5 1845.4,505.8 1846.0,499.3 1853.8,498.3" fill="#eaf5de"/><polygon points="1210.0,550.5 1219.0,545.2 1227.9,551.6 1225.3,558.7 1218.7,561.2 1208.4,557.7" fill="#eaf5de"/><polygon points="1505.9,791.5 1508.3,792.8 1509.0,795.2 1506.2,796.1 1503.0,796.1 1501.9,795.4 1500.8,793.2 1503.2,791.7" fill="#eaf5de"/><polygon points="1743.5,539.0 1744.2,543.1 1740.2,544.8 1736.9,543.1 1734.7,539.1 1738.0,536.1 1742.5,537.9" fill="#eaf5de"/><polygon points="1206.9,611.0 1206.2,618.3 1202.5,623.8 1193.4,622.0 1193.1,616.0 1198.0,613.1" fill="#eaf5de"/><polygon points="1533.0,360.9 1521.9,361.0 1514.3,356.5 1516.9,350.4 1522.1,345.4 1530.7,348.3 1538.7,353.7" fill="#eaf5de"/><polygon points="1456.7,715.7 1461.1,720.0 1461.7,723.3 1457.9,726.0 1451.6,727.2 1448.1,722.2 1450.2,717.3" fill="#eaf5de"/><polygon points="1640.9,663.1 1651.6,657.3 1658.5,654.6 1667.2,661.8 1665.2,666.7 1662.2,673.1 1654.0,670.6 1645.1,671.2" fill="#eaf5de"/><polygon points="1561.1,624.1 1557.4,629.7 1548.8,633.1 1545.6,626.9 1544.3,621.6 1547.2,619.8 1555.0,617.8" fill="#eaf5de"/><polygon points="1273.7,625.3 1277.8,619.1 1285.6,619.1 1290.2,622.2 1293.5,628.4 1285.2,631.7 1274.9,631.9" fill="#eaf5de"/><polygon points="1349.7,334.9 1357.0,338.2 1354.6,342.7 1349.4,346.6 1344.2,346.0 1341.7,342.0 1338.6,338.6 1345.8,334.3" fill="#eaf5de"/><polygon points="1836.9,386.6 1835.6,389.7 1831.6,389.3 1827.0,388.7 1828.9,385.0 1828.5,381.9 1833.9,383.2 1835.7,383.0" fill="#eaf5de"/><polygon points="1546.2,829.7 1537.2,826.2 1533.0,823.0 1537.6,816.4 1543.1,818.4 1551.1,818.2 1550.0,824.1" fill="#eaf5de"/><polygon points="1631.3,824.0 1622.4,828.4 1613.4,826.6 1606.1,819.3 1615.1,814.3 1622.9,811.2 1629.5,814.6 1634.2,819.7" fill="#eaf5de"/><polygon points="1408.1,723.8 1413.7,727.2 1408.6,730.5 1404.2,733.3 1398.5,730.7 1394.6,726.2 1400.7,724.0" fill="#eaf5de"/><polygon points="1804.6,318.3 1800.7,314.1 1805.7,312.5 1809.6,312.9 1808.3,316.4" fill="#eaf5de"/><polygon points="1641.6,490.8 1649.2,485.5 1661.3,484.8 1660.3,492.9 1655.5,503.1 1643.9,501.6" fill="#eaf5de"/><polygon points="1548.1,427.2 1559.4,430.9 1564.2,437.4 1558.4,445.7 1544.9,447.7 1539.6,440.8 1538.9,432.2" fill="#eaf5de"/><polygon points="1735.4,482.3 1732.1,490.0 1727.4,488.8 1717.8,490.7 1719.2,483.5 1715.8,478.1 1726.0,473.5 1734.2,477.4" fill="#eaf5de"/><polygon points="1307.9,728.7 1303.3,734.1 1293.6,733.4 1289.5,724.8 1303.8,719.7" fill="#eaf5de"/><polygon points="1360.0,695.4 1361.0,701.1 1354.5,705.4 1347.3,699.2 1352.4,693.1" fill="#eaf5de"/><polygon points="1653.5,351.8 1657.0,350.7 1658.1,355.9 1657.9,358.5 1653.2,363.3 1648.2,358.4 1646.8,355.7 1649.4,352.6" fill="#eaf5de"/><polygon points="1260.8,602.2 1266.7,605.4 1270.1,609.8 1263.6,616.1 1256.1,616.9 1250.8,612.5 1251.9,606.7 1253.4,601.3" fill="#eaf5de"/><polygon points="1480.3,752.5 1487.8,748.4 1494.2,751.6 1493.7,756.3 1490.1,760.0 1483.4,756.7" fill="#eaf5de"/><polygon points="1372.7,612.7 1372.8,616.3 1368.3,618.7 1362.2,618.1 1358.5,615.9 1361.4,611.1 1365.2,608.9" fill="#eaf5de"/><polygon points="1804.5,375.4 1811.7,380.3 1820.4,387.8 1807.2,396.6 1796.3,390.8 1795.7,381.3" fill="#eaf5de"/><polygon points="1367.7,446.7 1372.8,451.1 1367.8,455.4 1361.3,454.2 1356.5,450.2 1361.1,445.0" fill="#eaf5de"/><polygon points="1734.4,545.0 1731.1,546.5 1728.0,547.6 1725.8,544.6 1727.1,542.1 1729.0,541.1 1732.9,541.0 1736.2,543.3" fill="#eaf5de"/><polygon points="1501.7,481.5 1502.5,478.0 1507.7,475.6 1510.9,479.9 1506.8,483.3" fill="#eaf5de"/><polygon points="1770.5,315.8 1766.4,319.1 1756.6,317.7 1748.8,313.6 1752.3,306.4 1760.6,303.4 1771.5,305.5 1771.4,310.5" fill="#eaf5de"/><polygon points="1444.7,716.3 1442.9,724.2 1436.2,727.3 1423.1,724.0 1431.8,716.2" fill="#eaf5de"/><polygon points="1581.3,629.9 1584.6,626.3 1589.7,627.4 1593.4,629.7 1591.2,632.3 1584.5,633.8" fill="#eaf5de"/><polygon points="1727.3,343.1 1726.1,338.1 1729.2,333.0 1734.0,337.2 1734.0,343.2" fill="#eaf5de"/><polygon points="1355.2,515.5 1343.1,513.3 1347.7,504.5 1353.6,500.0 1363.9,502.8 1363.5,511.8" fill="#eaf5de"/><polygon points="1351.0,687.7 1355.6,694.0 1350.5,696.3 1341.4,699.2 1340.3,691.8 1343.1,688.1" fill="#eaf5de"/><polygon points="1410.9,546.8 1413.7,540.5 1422.2,538.6 1426.4,546.0 1418.6,549.9" fill="#eaf5de"/><polygon points="1598.4,613.7 1601.1,611.3 1605.1,610.6 1607.4,613.0 1608.7,615.0 1606.7,617.0 1603.3,616.3 1600.0,616.0" fill="#eaf5de"/><polygon points="1512.6,448.0 1520.9,449.5 1527.6,453.8 1521.8,461.1 1515.3,458.3 1509.5,455.5" fill="#eaf5de"/><polygon points="1553.1,574.1 1548.3,579.0 1540.8,574.5 1542.0,570.2 1547.7,566.3 1554.7,568.8" fill="#eaf5de"/><polygon points="1450.8,590.9 1456.4,590.2 1458.7,594.2 1459.5,597.9 1454.4,600.1 1450.8,600.4 1448.7,597.1 1448.4,594.1" fill="#eaf5de"/><polygon points="1503.7,758.6 1503.8,750.6 1508.6,744.5 1515.4,747.6 1517.5,755.3 1512.3,759.7" fill="#eaf5de"/><polygon points="1488.0,578.2 1494.9,581.8 1495.5,586.1 1489.6,590.3 1484.8,590.3 1477.1,588.4 1478.2,584.3 1479.8,581.7" fill="#eaf5de"/><polygon points="1240.6,636.8 1244.9,633.4 1249.5,631.1 1255.9,632.2 1253.8,636.6 1251.6,641.7 1245.7,641.3" fill="#eaf5de"/><polygon points="1748.4,561.4 1744.7,565.0 1738.3,564.1 1735.7,559.2 1740.6,554.6 1748.0,555.5" fill="#eaf5de"/><polygon points="1405.9,426.6 1409.3,413.7 1419.6,406.7 1424.7,417.3 1420.2,424.9" fill="#eaf5de"/><polygon points="1451.4,787.0 1448.6,791.1 1440.8,793.6 1431.0,788.9 1435.8,783.6 1437.5,780.5 1444.0,776.0 1453.2,781.2" fill="#eaf5de"/><polygon points="1783.4,433.0 1785.8,427.7 1792.4,425.4 1799.3,430.6 1796.6,435.2 1792.3,438.9 1785.3,439.1" fill="#eaf5de"/><polygon points="1863.4,441.4 1861.7,446.0 1854.3,446.6 1851.5,442.6 1856.6,439.2" fill="#eaf5de"/><polygon points="1836.8,350.8 1829.9,352.6 1825.7,347.5 1824.6,340.3 1832.1,339.3 1840.0,338.2 1838.7,345.4" fill="#eaf5de"/><polygon points="1766.8,341.7 1769.9,338.5 1774.3,340.1 1774.8,343.9 1772.0,345.8 1768.2,344.5" fill="#eaf5de"/><polygon points="1387.5,617.8 1389.6,613.8 1396.3,612.8 1402.9,614.6 1401.8,618.8 1397.6,621.1 1392.3,620.7" fill="#eaf5de"/><polygon points="1302.5,455.0 1295.7,451.0 1294.1,446.6 1302.3,441.0 1310.5,443.8 1309.8,448.9 1308.3,452.8" fill="#eaf5de"/><polygon points="1476.1,722.0 1481.2,719.4 1487.5,714.1 1494.8,716.8 1497.3,723.2 1491.2,729.8 1485.6,731.5 1477.5,725.8" fill="#eaf5de"/><polygon points="1490.9,406.6 1490.2,414.5 1479.6,411.2 1469.2,410.6 1468.2,405.3 1473.1,401.7 1481.4,396.2 1486.7,401.2" fill="#eaf5de"/><polygon points="1811.4,519.5 1811.1,516.4 1816.8,517.1 1820.9,518.4 1818.8,521.6 1816.6,522.8 1813.0,523.4" fill="#eaf5de"/><polygon points="1681.5,471.1 1679.5,468.5 1684.2,465.6 1688.6,466.2 1692.2,469.5 1691.7,473.1 1686.8,473.7 1681.9,474.3" fill="#eaf5de"/><polygon points="1388.2,719.6 1389.7,733.8 1380.2,735.4 1369.2,729.1 1379.2,722.2" fill="#eaf5de"/><polygon points="1594.2,682.7 1592.9,672.1 1604.4,667.8 1612.1,674.7 1619.3,681.0 1612.6,687.8 1600.5,686.3" fill="#eaf5de"/><polygon points="1700.9,395.2 1703.6,389.3 1711.0,387.3 1718.3,391.0 1720.1,396.3 1712.7,400.4 1705.8,398.5" fill="#eaf5de"/><polygon points="1426.3,736.0 1428.8,738.3 1428.1,741.5 1423.6,740.9 1419.4,740.1 1421.1,738.0 1422.9,736.7" fill="#eaf5de"/><polygon points="1457.7,375.5 1451.3,377.6 1449.0,371.2 1451.4,366.7 1457.3,362.4 1465.7,367.9 1469.0,370.9 1466.1,376.8" fill="#eaf5de"/><polygon points="1455.2,692.1 1458.2,694.8 1459.1,697.0 1458.0,699.9 1453.3,699.6 1452.1,697.5 1450.6,694.2" fill="#eaf5de"/><polygon points="1676.3,371.7 1682.4,364.6 1689.3,360.7 1697.1,365.5 1695.3,374.8 1687.5,378.1" fill="#eaf5de"/><polygon points="1479.0,783.6 1481.8,779.2 1486.3,774.7 1493.4,777.7 1497.9,779.7 1495.9,783.6 1492.9,789.6 1485.3,787.6" fill="#eaf5de"/><polygon points="1119.9,460.0 1122.3,466.3 1119.3,470.8 1114.5,468.0 1116.4,462.7" fill="#fdfdf6"/><polygon points="1063.1,764.6 1061.5,758.9 1066.2,756.5 1071.1,756.2 1078.7,758.4 1078.6,765.4 1075.2,770.7 1067.1,772.7" fill="#fdfdf6"/><polygon points="1116.8,443.8 1111.4,448.0 1104.1,444.3 1101.5,438.8 1101.0,430.3 1111.4,432.6 1123.0,436.2" fill="#fdfdf6"/><polygon points="1074.7,505.2 1077.5,499.2 1082.2,493.8 1092.0,490.0 1096.0,498.3 1089.7,505.6 1084.8,510.3 1078.9,509.0" fill="#fdfdf6"/><polygon points="1092.0,715.7 1095.1,717.4 1091.2,721.8 1087.1,724.2 1086.0,720.9 1088.3,716.8" fill="#fdfdf6"/><polygon points="1843.6,718.7 1850.9,719.0 1856.6,723.4 1847.5,727.1 1842.2,725.2" fill="#fdfdf6"/><polygon points="1284.9,350.2 1282.5,347.6 1284.6,342.0 1288.2,343.4 1290.0,346.1 1288.2,351.0" fill="#fdfdf6"/><polygon points="1176.9,637.1 1173.3,639.4 1166.5,643.4 1165.5,634.2 1163.9,626.3 1170.1,624.9 1176.8,623.2 1180.2,631.3" fill="#fdfdf6"/><polygon points="1274.2,404.1 1281.2,393.6 1289.4,391.8 1294.9,402.5 1282.5,412.2" fill="#fdfdf6"/><polygon points="1094.0,522.4 1095.6,516.0 1101.9,514.0 1103.2,523.7 1096.6,528.3" fill="#fdfdf6"/><polygon points="1155.6,322.4 1159.4,323.7 1161.9,327.0 1159.2,330.0 1155.6,332.8 1154.0,328.4 1152.6,325.2" fill="#fdfdf6"/><polygon points="1707.0,786.3 1701.1,790.0 1695.2,786.5 1692.0,781.0 1694.7,775.6 1699.1,772.0 1704.9,773.8 1705.1,779.8" fill="#fdfdf6"/><polygon points="1567.5,809.4 1578.7,805.7 1580.0,818.2 1582.3,829.8 1571.7,829.3 1562.0,829.7 1560.9,818.1" fill="#fdfdf6"/><polygon points="1227.0,671.4 1226.3,665.8 1227.5,662.8 1230.4,659.4 1236.0,665.9 1237.9,672.1 1238.3,678.4 1232.4,674.9" fill="#fdfdf6"/><polygon points="1796.7,767.3 1796.9,760.5 1798.0,757.3 1801.7,753.9 1806.5,761.6 1804.4,766.3 1802.3,769.7" fill="#fdfdf6"/><polygon points="1817.1,740.8 1811.2,743.0 1804.4,744.7 1803.6,738.6 1803.4,733.1 1808.9,729.0 1814.2,731.6 1817.2,735.2" fill="#fdfdf6"/><polygon points="1573.3,521.5 1568.7,519.3 1566.8,516.1 1570.4,513.8 1576.6,514.1 1581.2,517.4 1578.7,520.7" fill="#fdfdf6"/><polygon points="1185.5,321.3 1182.0,310.5 1187.3,305.5 1195.5,313.1 1193.2,321.6" fill="#fdfdf6"/><polygon points="1693.9,778.6 1695.8,774.3 1697.9,771.1 1701.5,769.8 1703.6,773.0 1703.3,777.8 1699.8,780.0 1696.6,780.9" fill="#fdfdf6"/><polygon points="1205.6,665.5 1221.1,673.7 1222.5,689.5 1206.8,690.7 1194.2,680.5" fill="#fdfdf6"/><polygon points="1114.3,532.0 1118.1,535.1 1110.2,539.9 1103.9,542.2 1098.5,540.5 1105.0,534.3 1110.5,531.1" fill="#fdfdf6"/><polygon points="1751.0,659.8 1749.9,669.6 1741.8,678.9 1731.2,676.2 1729.2,667.4 1728.1,658.6 1735.8,648.5 1744.9,654.4" fill="#fdfdf6"/><polygon points="1593.2,796.2 1599.0,787.8 1604.9,793.6 1603.2,804.6 1598.2,809.2 1592.3,807.7" fill="#fdfdf6"/><polygon points="1474.1,329.4 1485.4,320.8 1503.5,325.1 1500.8,342.6 1483.1,340.2" fill="#fdfdf6"/><polygon points="1432.7,368.7 1435.7,369.5 1439.3,374.5 1439.7,382.5 1434.6,380.1 1431.8,378.9 1430.4,374.3 1429.9,369.2" fill="#fdfdf6"/><polygon points="1062.6,625.4 1068.7,633.1 1067.1,644.9 1055.0,647.7 1050.7,636.7 1049.6,622.6" fill="#fdfdf6"/><polygon points="1560.7,491.8 1558.8,490.3 1557.1,487.1 1562.3,484.9 1565.2,484.8 1567.1,486.7 1564.7,490.6" fill="#fdfdf6"/><polygon points="1815.5,592.7 1811.6,583.6 1822.5,576.3 1835.9,582.1 1830.5,592.2 1823.5,598.5" fill="#fdfdf6"/><polygon points="1675.8,558.9 1682.8,567.1 1679.7,576.7 1666.6,575.4 1662.1,568.5 1665.8,563.0" fill="#fdfdf6"/><polygon points="1187.0,387.4 1185.4,392.7 1180.4,396.2 1179.0,391.0 1183.9,385.1" fill="#fdfdf6"/><polygon points="1564.9,325.9 1568.1,325.4 1572.0,326.8 1571.1,331.0 1571.7,336.8 1566.5,337.4 1562.4,333.8 1560.6,328.2" fill="#fdfdf6"/><polygon points="1561.7,525.4 1553.1,523.0 1552.2,516.2 1561.0,511.8 1571.1,509.1 1576.5,514.6 1571.4,521.7" fill="#fdfdf6"/><polygon points="1677.3,708.2 1673.4,704.2 1674.1,695.9 1680.2,694.6 1682.8,702.1 1683.4,711.7" fill="#fdfdf6"/><polygon points="1606.0,484.7 1598.1,491.2 1585.5,489.7 1579.8,480.9 1591.9,478.2 1602.1,476.8" fill="#fdfdf6"/><polygon points="1377.5,339.3 1374.5,340.2 1371.0,337.1 1369.0,333.1 1369.3,328.9 1373.8,331.4 1377.2,332.9 1379.6,337.1" fill="#fdfdf6"/><polygon points="1839.7,745.1 1847.0,742.2 1855.2,749.3 1852.0,757.9 1843.0,754.3" fill="#fdfdf6"/><polygon points="1822.1,652.4 1815.3,659.6 1803.5,653.0 1802.8,643.1 1819.8,643.6" fill="#fdfdf6"/><polygon points="1084.8,825.0 1071.5,831.0 1075.6,817.1 1083.9,809.8 1095.1,811.3" fill="#fdfdf6"/><polygon points="1624.4,336.5 1625.9,328.1 1631.4,327.7 1631.6,338.0 1627.0,342.0" fill="#fdfdf6"/><polygon points="1689.5,571.1 1701.5,579.7 1701.4,588.9 1691.2,591.1 1680.9,587.5 1671.7,580.0 1677.2,573.2" fill="#fdfdf6"/><polygon points="1245.2,806.7 1253.1,813.9 1253.8,822.0 1244.0,818.6 1234.7,805.5" fill="#fdfdf6"/><polygon points="1228.0,811.3 1235.5,809.3 1239.9,809.6 1244.5,813.3 1238.7,820.5 1231.0,823.8 1229.2,817.9" fill="#fdfdf6"/><polygon points="1383.6,445.3 1381.9,434.0 1392.3,426.7 1399.8,435.1 1405.7,443.6 1399.0,453.1 1388.7,453.3" fill="#fdfdf6"/><polygon points="1290.9,766.9 1300.0,770.5 1307.8,774.7 1305.4,783.0 1300.3,791.0 1292.6,784.0 1288.9,776.5" fill="#fdfdf6"/><polygon points="1622.2,449.9 1619.8,455.5 1612.3,456.9 1603.2,458.4 1605.3,452.7 1606.0,447.5 1615.1,446.7" fill="#fdfdf6"/><polygon points="1704.9,683.9 1710.7,686.2 1710.7,693.8 1704.3,695.8 1700.2,694.3 1695.3,692.3 1695.6,686.0 1700.0,681.6" fill="#fdfdf6"/><polygon points="1848.9,635.4 1850.4,647.4 1843.5,653.3 1837.1,647.9 1841.3,637.8" fill="#fdfdf6"/><polygon points="1578.2,353.7 1586.9,347.4 1592.2,351.2 1592.9,357.2 1591.0,366.4 1580.8,370.3 1574.6,367.8 1573.2,361.5" fill="#fdfdf6"/><polygon points="1721.9,664.9 1715.2,657.3 1713.7,647.1 1721.5,638.7 1732.2,641.6 1738.7,647.8 1736.4,655.8 1733.2,665.6" fill="#fdfdf6"/><polygon points="1170.1,413.6 1175.4,408.2 1181.2,408.0 1189.2,410.1 1188.7,419.7 1181.1,424.2 1175.9,418.4" fill="#fdfdf6"/><polygon points="1808.2,797.3 1802.4,802.6 1795.3,803.1 1792.7,794.4 1787.7,786.4 1793.8,782.7 1799.3,784.1 1802.9,788.9" fill="#fdfdf6"/><polygon points="1702.5,820.4 1691.3,818.4 1689.4,811.4 1700.2,806.3 1709.4,806.1 1715.5,808.9 1715.1,815.7" fill="#fdfdf6"/><polygon points="1162.0,764.0 1169.1,773.0 1172.3,785.7 1159.4,784.7 1146.3,782.6 1148.0,767.3" fill="#fdfdf6"/><polygon points="1128.7,562.6 1122.4,564.0 1115.7,558.6 1115.4,553.9 1116.5,550.0 1123.1,551.4 1130.6,557.0" fill="#fdfdf6"/><polygon points="1871.4,650.0 1873.6,656.5 1869.8,658.1 1866.5,652.4 1868.5,649.6" fill="#fdfdf6"/><polygon points="1421.0,330.9 1411.4,327.0 1410.4,311.9 1421.3,299.5 1429.7,303.3 1426.9,315.8" fill="#fdfdf6"/><polygon points="1133.6,470.9 1130.0,472.5 1127.2,471.5 1124.1,469.2 1127.3,464.7 1132.3,464.3 1136.3,464.5 1139.0,467.7" fill="#fdfdf6"/><polygon points="1230.2,394.4 1226.6,393.0 1224.6,391.9 1225.2,389.4 1227.0,385.9 1231.0,385.7 1234.9,386.7 1233.3,390.7" fill="#fdfdf6"/><polygon points="1241.8,811.7 1247.0,808.4 1251.1,812.1 1250.5,820.7 1243.6,827.3 1237.6,824.6 1238.6,817.0" fill="#fdfdf6"/><polygon points="1682.8,769.2 1687.1,776.6 1681.2,785.8 1673.1,784.2 1667.9,777.1 1672.1,767.8 1678.3,767.6" fill="#fdfdf6"/><polygon points="1587.8,701.9 1591.4,705.5 1593.5,709.0 1591.6,711.8 1589.5,716.2 1586.4,711.8 1582.3,708.9 1584.5,705.0" fill="#fdfdf6"/><polygon points="1270.5,775.6 1266.0,785.7 1254.6,785.6 1246.5,783.8 1248.3,774.2 1260.7,770.1 1271.0,767.9" fill="#fdfdf6"/><polygon points="1101.6,321.1 1107.2,320.2 1110.1,325.3 1104.8,328.7 1100.7,329.4 1098.1,325.6" fill="#fdfdf6"/><polygon points="1149.7,507.9 1154.1,503.2 1158.9,499.6 1167.2,508.1 1167.6,516.5 1159.0,514.5" fill="#fdfdf6"/><polygon points="1327.5,783.3 1315.5,779.9 1314.7,771.0 1318.2,764.1 1327.3,760.3 1339.7,761.5 1341.2,770.6 1337.2,777.9" fill="#fdfdf6"/><polygon points="1313.2,342.0 1306.8,348.1 1301.6,343.4 1299.1,338.9 1299.6,331.7 1306.8,326.9 1313.7,328.9 1314.0,335.6" fill="#fdfdf6"/><polygon points="1239.3,477.2 1232.6,470.7 1231.4,462.7 1238.7,458.1 1244.3,463.4 1247.1,471.0" fill="#fdfdf6"/><polygon points="1102.6,580.6 1099.9,579.8 1096.1,579.2 1094.4,574.5 1096.6,572.4 1099.4,572.5 1102.7,574.5 1102.6,577.8" fill="#fdfdf6"/><polygon points="1057.2,770.5 1063.1,767.4 1068.1,763.1 1072.8,767.0 1070.6,772.4 1069.0,776.5 1063.7,780.3 1058.1,777.1" fill="#fdfdf6"/><polygon points="1068.3,635.7 1058.4,642.9 1047.6,641.7 1039.6,636.7 1047.3,628.2 1058.9,630.9" fill="#fdfdf6"/><polygon points="1393.4,758.1 1397.9,759.3 1394.1,763.2 1389.9,767.2 1384.7,766.5 1383.6,763.5 1385.4,760.1 1389.6,755.9" fill="#fdfdf6"/><polygon points="1227.9,388.5 1224.1,382.8 1219.4,377.8 1223.3,371.0 1228.1,368.2 1234.9,367.4 1233.7,376.9 1232.7,383.6" fill="#fdfdf6"/><polygon points="1202.8,766.1 1208.2,782.8 1191.2,780.1 1185.6,770.2 1191.5,754.4" fill="#fdfdf6"/><polygon points="1438.0,320.3 1445.2,318.9 1449.6,325.0 1445.9,329.9 1439.2,332.2 1434.1,326.0" fill="#fdfdf6"/><polygon points="1755.2,613.7 1753.7,621.2 1750.2,624.7 1746.4,622.8 1743.8,617.8 1748.4,613.3" fill="#fdfdf6"/><polygon points="1797.0,593.3 1801.5,603.4 1799.0,612.3 1792.6,611.2 1788.4,600.6 1791.3,593.2" fill="#fdfdf6"/><polygon points="1572.8,568.6 1581.0,567.0 1587.3,567.8 1586.9,574.4 1580.7,577.7 1571.8,577.8" fill="#fdfdf6"/><polygon points="1068.2,561.5 1072.8,553.9 1084.5,549.1 1082.6,560.7 1077.5,569.3 1068.7,569.2" fill="#fdfdf6"/><polygon points="1393.2,345.8 1395.8,346.6 1396.1,348.6 1393.1,350.8 1388.2,351.7 1388.4,348.0" fill="#fdfdf6"/><polygon points="1225.4,401.1 1211.0,398.8 1215.4,388.5 1225.7,381.5 1234.8,390.4" fill="#fdfdf6"/><polygon points="1082.6,516.7 1085.7,521.7 1084.4,528.3 1079.5,531.7 1077.3,526.7 1077.6,520.8" fill="#fdfdf6"/><polygon points="1081.3,437.0 1092.5,448.9 1083.6,461.3 1073.0,458.5 1071.8,447.1" fill="#fdfdf6"/><polygon points="1156.5,441.7 1145.3,439.6 1147.2,425.1 1156.6,420.2 1163.3,435.5" fill="#fdfdf6"/><polygon points="1086.1,516.1 1080.1,512.9 1081.5,507.3 1089.5,507.4 1092.0,514.2" fill="#fdfdf6"/><polygon points="1776.9,733.4 1780.1,736.5 1778.7,741.4 1773.1,744.2 1768.4,743.4 1766.1,740.6 1764.3,735.7 1771.2,731.7" fill="#fdfdf6"/><polygon points="1710.9,818.7 1705.6,815.1 1710.8,805.4 1716.5,806.8 1717.7,812.8" fill="#fdfdf6"/><polygon points="1108.4,522.3 1117.9,523.6 1125.1,531.6 1115.6,535.7 1106.1,533.1" fill="#fdfdf6"/><polygon points="1799.8,724.3 1796.7,730.1 1790.7,730.1 1789.6,724.6 1790.5,718.3 1796.2,717.3 1802.1,717.8" fill="#fdfdf6"/><polygon points="1052.8,496.3 1045.9,486.8 1047.9,474.9 1061.1,477.5 1071.0,483.1 1075.2,495.5 1064.3,501.7" fill="#fdfdf6"/><polygon points="1259.2,746.5 1259.8,738.3 1262.3,730.6 1271.1,726.0 1276.0,730.2 1282.6,733.7 1276.0,741.0 1268.6,744.9" fill="#fdfdf6"/><polygon points="1814.7,810.7 1816.2,814.1 1814.1,817.0 1810.6,818.2 1808.2,815.6 1807.8,813.3 1808.9,811.6 1811.1,809.0" fill="#fdfdf6"/><polygon points="1173.6,404.7 1173.7,409.2 1171.8,414.2 1167.6,413.3 1166.5,409.0 1167.6,404.9 1170.6,402.9" fill="#fdfdf6"/><polygon points="1142.5,345.2 1139.7,342.1 1144.5,339.3 1149.4,338.8 1147.7,343.2" fill="#fdfdf6"/><polygon points="1623.0,432.8 1627.4,443.1 1623.8,450.7 1615.6,448.2 1610.4,440.5 1608.7,431.4 1615.0,428.5" fill="#fdfdf6"/><polygon points="1736.8,718.4 1734.6,723.1 1732.0,726.8 1728.4,727.6 1726.2,724.8 1728.7,720.4 1730.9,717.8 1733.4,717.6" fill="#fdfdf6"/><polygon points="1599.9,512.6 1593.0,516.3 1582.3,511.7 1581.9,499.3 1594.8,501.1 1602.8,505.5" fill="#fdfdf6"/><polygon points="1052.4,589.4 1058.3,584.4 1065.5,580.3 1069.9,584.9 1067.6,590.1 1063.0,595.4 1055.0,595.2" fill="#fdfdf6"/><polygon points="1214.3,450.4 1222.7,447.1 1228.1,450.4 1231.3,454.2 1224.9,457.9 1217.6,462.5 1212.2,458.8 1206.4,455.0" fill="#fdfdf6"/><polygon points="1263.6,422.3 1268.3,417.4 1275.9,422.6 1273.5,428.4 1271.1,432.8 1265.0,430.6 1257.6,426.1" fill="#fdfdf6"/><polygon points="1061.8,485.4 1070.8,483.8 1074.5,490.5 1067.1,496.9 1055.9,495.4" fill="#fdfdf6"/><polygon points="1073.1,741.9 1086.2,746.7 1090.9,755.3 1075.6,761.4 1069.6,750.8" fill="#fdfdf6"/><polygon points="1267.2,421.0 1277.3,428.0 1269.1,438.3 1266.4,450.4 1255.2,446.3 1246.1,441.4 1250.5,431.6 1254.6,420.4" fill="#fdfdf6"/><polygon points="1063.6,600.7 1065.6,606.4 1064.2,610.3 1060.6,611.2 1057.4,608.8 1053.4,605.7 1054.4,601.3 1058.5,601.1" fill="#fdfdf6"/><polygon points="1215.4,399.3 1218.6,398.9 1221.6,401.3 1220.8,404.9 1217.0,404.3 1213.4,402.2" fill="#fdfdf6"/><polygon points="1212.6,753.5 1215.3,763.4 1211.9,771.3 1205.0,767.1 1205.6,756.2" fill="#fdfdf6"/><polygon points="1101.3,498.1 1112.6,506.4 1111.4,518.9 1096.4,516.9 1084.2,513.3 1089.1,503.7" fill="#fdfdf6"/><polygon points="1739.4,560.3 1740.8,567.2 1735.3,575.0 1729.7,573.2 1734.3,563.9" fill="#fdfdf6"/><polygon points="1369.0,754.5 1373.6,753.5 1376.6,753.3 1378.4,754.6 1378.4,756.6 1375.6,758.3 1372.3,758.3 1371.0,756.8" fill="#fdfdf6"/><polygon points="1043.5,531.4 1047.9,524.5 1056.3,519.3 1062.5,525.5 1057.8,535.1 1048.2,537.0" fill="#fdfdf6"/><polygon points="1789.3,715.6 1794.9,716.2 1798.1,717.5 1798.2,720.6 1794.5,723.4 1790.9,721.6 1787.1,719.8" fill="#fdfdf6"/><polygon points="1123.5,642.3 1120.4,649.3 1113.5,649.0 1107.1,647.2 1105.6,640.5 1109.1,634.1 1116.8,637.0" fill="#fdfdf6"/><polygon points="1195.8,383.1 1189.6,384.1 1184.2,377.3 1184.2,371.9 1186.0,368.5 1190.8,368.3 1198.5,371.8 1202.1,380.8" fill="#fdfdf6"/><polygon points="1097.3,448.5 1092.2,445.8 1092.8,442.3 1096.7,440.7 1101.7,443.3 1104.7,446.0 1108.3,450.7 1103.2,452.8" fill="#fdfdf6"/><polygon points="1103.1,637.2 1106.7,638.7 1110.2,640.4 1109.5,644.8 1106.9,648.5 1101.8,650.9 1100.4,645.2 1099.1,640.3" fill="#fdfdf6"/><polygon points="1600.5,428.2 1604.6,433.4 1606.7,442.5 1597.2,444.7 1593.7,436.6 1592.6,428.5" fill="#fdfdf6"/><polygon points="1062.0,607.7 1073.8,610.0 1074.5,617.9 1062.2,619.7 1057.5,612.1" fill="#fdfdf6"/><polygon points="1230.1,333.3 1221.7,327.6 1214.9,325.6 1215.7,317.2 1220.7,308.7 1228.6,310.8 1238.7,311.8 1232.8,322.1" fill="#fdfdf6"/><polygon points="1120.5,386.8 1119.3,397.7 1112.7,402.5 1104.9,403.6 1100.0,396.7 1099.5,386.1 1110.1,381.1" fill="#fdfdf6"/><polygon points="1128.9,527.3 1123.8,522.3 1126.9,517.7 1138.5,517.3 1139.5,524.1" fill="#fdfdf6"/><polygon points="1130.0,392.2 1114.6,387.5 1113.0,373.4 1124.9,371.6 1138.4,372.8 1136.8,384.4" fill="#fdfdf6"/><polygon points="1788.2,586.8 1792.9,578.1 1805.5,584.9 1811.3,597.8 1798.0,595.4" fill="#fdfdf6"/><polygon points="1867.5,593.5 1870.6,595.6 1867.8,600.8 1862.7,601.6 1862.9,596.6" fill="#fdfdf6"/><polygon points="1079.1,736.7 1081.4,735.9 1084.0,738.0 1085.5,740.9 1083.6,742.4 1081.0,743.8 1078.1,740.9 1078.4,738.3" fill="#fdfdf6"/><polygon points="1377.8,810.5 1375.9,809.0 1375.2,805.8 1377.4,802.7 1379.9,803.3 1381.4,805.6 1380.3,809.2" fill="#fdfdf6"/><polygon points="1114.1,433.7 1118.8,435.7 1123.0,437.6 1122.5,440.8 1119.7,442.8 1115.7,441.7 1112.6,439.7 1112.3,436.8" fill="#fdfdf6"/><polygon points="1270.1,471.4 1265.1,459.9 1270.7,450.4 1273.2,436.8 1284.2,439.0 1289.5,449.2 1284.3,458.4 1281.4,470.2" fill="#fdfdf6"/><polygon points="1855.3,777.5 1860.3,777.1 1861.7,781.9 1859.1,785.4 1853.8,783.4" fill="#fdfdf6"/><polygon points="1109.6,370.6 1098.2,377.0 1086.6,375.5 1096.1,362.8 1105.9,359.5" fill="#fdfdf6"/><polygon points="1154.9,791.9 1157.6,791.7 1160.4,796.5 1159.2,801.2 1156.9,803.3 1154.4,799.5 1152.7,794.3" fill="#fdfdf6"/><polygon points="1127.2,695.1 1122.7,692.6 1122.2,688.6 1125.6,687.1 1130.4,688.1 1134.3,692.3 1131.2,694.9" fill="#fdfdf6"/><polygon points="1091.7,723.4 1099.8,726.4 1099.5,735.7 1094.7,741.5 1089.4,738.5 1086.0,731.4" fill="#fdfdf6"/><polygon points="1136.5,472.7 1125.2,476.1 1114.1,466.8 1115.6,454.4 1131.5,461.7" fill="#fdfdf6"/><polygon points="1295.4,437.4 1293.0,440.5 1289.0,439.3 1284.4,434.3 1289.7,431.3 1294.3,432.7" fill="#fdfdf6"/><polygon points="1137.6,726.8 1125.5,722.6 1121.2,714.0 1120.9,706.3 1130.2,706.9 1136.8,712.1 1138.2,717.8" fill="#fdfdf6"/><polygon points="1695.1,791.9 1699.1,789.4 1703.9,789.3 1706.0,793.4 1705.6,797.9 1701.8,801.7 1696.6,800.5 1695.6,796.1" fill="#fdfdf6"/><polygon points="1081.7,786.1 1088.0,784.0 1091.0,791.3 1090.3,799.0 1082.0,799.9 1080.4,791.5" fill="#fdfdf6"/><polygon points="1816.6,698.7 1807.3,695.2 1802.4,688.0 1810.9,687.5 1818.5,690.5" fill="#fdfdf6"/><polygon points="1085.3,325.1 1091.5,315.7 1105.5,317.0 1107.8,330.0 1095.4,330.3" fill="#fdfdf6"/><polygon points="1160.4,401.2 1165.4,410.6 1156.8,418.3 1144.3,413.3 1146.6,397.1" fill="#fdfdf6"/><polygon points="1855.5,811.5 1849.6,812.7 1845.3,804.4 1844.9,793.1 1847.9,782.0 1853.6,789.1 1858.4,792.5 1860.9,804.6" fill="#fdfdf6"/><polygon points="1054.1,363.3 1059.6,354.6 1076.1,363.0 1078.3,375.2 1065.4,372.0" fill="#fdfdf6"/><polygon points="1353.3,803.2 1351.6,805.6 1349.8,809.6 1346.4,805.5 1343.5,801.6 1344.7,797.5 1348.2,797.2 1352.2,798.4" fill="#fdfdf6"/><polygon points="1156.4,440.6 1159.6,432.9 1166.6,430.1 1169.4,436.3 1170.9,442.0 1166.0,445.4 1159.9,447.2" fill="#fdfdf6"/><polygon points="1068.6,433.0 1071.3,432.5 1070.4,437.5 1068.7,440.1 1065.7,441.2 1065.3,434.9" fill="#fdfdf6"/><polygon points="1226.4,815.4 1232.8,812.2 1236.6,817.3 1237.7,820.8 1237.6,827.3 1231.3,825.6 1228.8,821.5" fill="#fdfdf6"/><polygon points="1090.6,394.6 1086.9,389.2 1095.6,383.1 1102.3,387.9 1102.4,392.7 1096.9,398.3" fill="#fdfdf6"/><polygon points="1779.5,675.0 1791.1,678.2 1790.3,690.3 1778.4,696.5 1766.4,695.4 1764.4,686.0 1763.8,678.4 1770.5,671.0" fill="#fdfdf6"/><polygon points="1115.3,648.8 1111.1,647.3 1112.9,642.8 1116.5,642.4 1119.9,642.7 1122.1,646.5 1118.8,649.7" fill="#fdfdf6"/><polygon points="1442.8,333.0 1443.3,330.3 1444.4,327.9 1447.1,326.0 1450.9,324.2 1450.0,327.6 1448.1,330.1 1445.7,332.4" fill="#fdfdf6"/><polygon points="1716.6,574.5 1707.2,573.4 1698.6,572.8 1694.7,565.4 1695.0,558.9 1702.7,559.2 1710.8,559.7 1712.4,566.6" fill="#fdfdf6"/><polygon points="1155.0,594.8 1162.0,600.9 1169.6,605.4 1169.4,614.6 1163.9,619.7 1157.2,613.4 1151.8,608.8 1148.9,599.5" fill="#fdfdf6"/><polygon points="1287.9,390.7 1288.6,400.4 1279.1,408.3 1274.5,401.7 1272.6,394.0 1280.9,389.6" fill="#fdfdf6"/><polygon points="1587.5,520.3 1586.4,516.3 1588.8,511.9 1592.7,506.5 1595.2,510.7 1597.1,514.5 1594.0,519.1 1590.1,524.7" fill="#fdfdf6"/><polygon points="1376.7,327.4 1376.5,333.1 1369.9,334.5 1363.9,330.8 1369.9,325.9" fill="#fdfdf6"/><polygon points="1232.6,741.5 1222.1,752.4 1212.4,745.5 1205.4,735.6 1216.9,728.8 1226.1,731.2" fill="#fdfdf6"/><polygon points="1707.3,631.0 1697.9,631.9 1690.0,620.8 1692.7,611.3 1707.3,619.0" fill="#fdfdf6"/><polygon points="1250.4,663.7 1259.6,668.1 1264.2,676.3 1259.4,684.2 1248.6,678.1" fill="#fdfdf6"/><polygon points="1223.4,671.9 1227.8,671.9 1230.5,674.1 1230.5,678.1 1226.3,679.6 1222.2,676.8" fill="#fdfdf6"/><polygon points="1064.8,436.7 1078.3,444.9 1067.4,458.1 1050.2,456.8 1050.1,439.4" fill="#fdfdf6"/><polygon points="1077.4,747.6 1077.0,755.5 1074.9,760.6 1069.3,761.1 1064.1,757.0 1058.4,749.9 1064.5,746.5 1069.7,742.5" fill="#fdfdf6"/><polygon points="1755.6,577.6 1759.1,582.6 1756.0,587.7 1749.5,588.6 1744.9,582.9 1748.3,575.8" fill="#fdfdf6"/><polygon points="1056.0,356.3 1048.0,357.7 1042.2,354.3 1048.8,351.1 1056.3,351.1" fill="#fdfdf6"/><polygon points="1079.5,342.3 1074.8,342.7 1072.1,338.6 1072.0,335.0 1076.8,336.7" fill="#fdfdf6"/><polygon points="1763.0,812.0 1767.5,817.9 1770.5,825.5 1762.2,828.1 1757.5,825.3 1755.8,818.2" fill="#fdfdf6"/><polygon points="1051.7,338.8 1058.3,341.4 1062.3,348.1 1061.9,353.8 1056.2,353.8 1051.1,349.9 1049.7,345.7 1046.5,339.6" fill="#fdfdf6"/><polygon points="1632.1,599.6 1642.1,596.0 1649.9,601.9 1647.7,612.8 1637.7,615.9 1628.4,611.0" fill="#fdfdf6"/><polygon points="1795.1,814.1 1796.8,820.8 1790.2,821.5 1780.5,817.8 1777.6,809.2 1780.0,805.2 1784.7,804.1 1792.4,807.1" fill="#fdfdf6"/><polygon points="1103.2,617.1 1100.3,611.4 1107.1,605.7 1113.8,602.0 1123.2,601.6 1118.5,611.1 1116.8,620.1 1108.6,618.1" fill="#fdfdf6"/><polygon points="1667.5,695.1 1669.0,689.3 1672.9,681.7 1680.4,687.0 1684.2,696.4 1678.1,702.7 1671.7,699.5" fill="#fdfdf6"/><polygon points="1801.2,717.5 1800.9,710.5 1807.2,708.6 1813.4,711.0 1818.9,717.8 1814.0,724.6 1807.8,729.8 1802.3,723.4" fill="#fdfdf6"/><polygon points="1062.3,511.4 1053.9,507.8 1053.5,501.0 1057.4,490.5 1068.7,493.8 1066.7,502.8" fill="#fdfdf6"/><polygon points="1200.3,316.0 1202.4,321.2 1200.2,323.7 1195.6,321.2 1195.3,315.0" fill="#fdfdf6"/><polygon points="1743.0,666.6 1746.9,666.5 1747.1,670.3 1747.2,675.0 1742.6,674.0 1739.7,671.9 1739.9,668.1" fill="#fdfdf6"/><polygon points="1721.0,769.6 1731.1,772.1 1740.2,779.9 1734.9,789.3 1726.7,786.9 1719.4,780.8" fill="#fdfdf6"/><polygon points="1598.1,760.7 1589.2,746.5 1589.6,733.6 1598.8,742.5 1601.9,751.6" fill="#fdfdf6"/><polygon points="1054.7,671.0 1052.6,668.3 1056.5,664.7 1059.2,664.4 1061.0,665.8 1059.2,669.3 1056.2,674.8" fill="#fdfdf6"/><polygon points="1282.8,310.6 1289.5,311.6 1295.0,314.2 1296.0,318.2 1296.1,323.0 1289.2,322.9 1283.3,319.4 1280.8,314.8" fill="#fdfdf6"/><polygon points="1694.0,766.2 1698.8,763.0 1701.0,768.7 1696.2,774.0 1690.0,773.4" fill="#fdfdf6"/><polygon points="1345.6,800.6 1345.3,795.1 1346.9,791.5 1352.6,789.4 1354.3,795.4 1351.4,799.8" fill="#fdfdf6"/><polygon points="1308.6,749.5 1301.4,757.9 1289.5,759.4 1290.6,752.0 1301.0,744.7" fill="#fdfdf6"/><polygon points="1787.8,602.3 1792.0,615.1 1786.9,621.3 1780.9,618.1 1780.6,606.7" fill="#fdfdf6"/><polygon points="1564.8,313.8 1570.3,316.2 1570.2,322.4 1566.6,325.7 1562.5,319.4 1561.8,315.0" fill="#fdfdf6"/><polygon points="1183.7,496.8 1171.3,497.0 1163.6,488.0 1172.0,475.8 1185.2,473.3 1190.1,484.3" fill="#fdfdf6"/><polygon points="1303.8,371.7 1302.1,368.7 1305.2,365.3 1309.4,366.3 1309.1,369.9" fill="#fdfdf6"/><polygon points="1068.6,609.6 1073.5,612.9 1076.4,618.3 1070.3,618.5 1062.7,614.0 1062.9,608.8" fill="#fdfdf6"/><polygon points="1559.8,514.4 1555.8,511.2 1556.8,504.3 1559.7,497.6 1566.1,494.4 1570.6,500.2 1569.5,508.8 1566.3,519.1" fill="#fdfdf6"/><polygon points="1198.7,316.1 1199.8,306.3 1212.0,309.2 1219.4,313.8 1215.7,320.0 1206.6,322.1" fill="#fdfdf6"/><polygon points="1345.6,762.5 1336.6,763.7 1336.2,757.7 1343.1,756.5 1347.9,759.3" fill="#fdfdf6"/><polygon points="1737.3,609.2 1751.2,614.1 1752.4,623.7 1744.1,628.1 1736.0,617.9" fill="#fdfdf6"/><polygon points="1727.5,708.7 1730.7,713.4 1734.8,718.1 1731.4,721.9 1727.8,723.9 1724.6,719.8 1719.2,715.1 1722.5,709.6" fill="#fdfdf6"/><polygon points="1279.4,449.5 1291.4,459.3 1281.9,472.7 1270.1,465.0 1263.4,451.1" fill="#fdfdf6"/><polygon points="1831.5,783.3 1830.6,773.1 1831.1,765.7 1838.3,761.0 1843.4,766.8 1848.6,774.0 1840.1,777.6" fill="#fdfdf6"/><polygon points="1556.9,448.5 1563.6,448.2 1568.1,448.7 1571.3,451.9 1566.8,455.7 1562.4,460.3 1558.8,456.8 1555.7,454.1" fill="#fdfdf6"/><polygon points="1033.7,310.5 1033.8,304.6 1041.7,303.1 1045.7,307.8 1047.9,312.0 1043.4,315.4 1036.5,315.4" fill="#fdfdf6"/><polygon points="1233.7,686.4 1228.9,677.9 1239.2,670.3 1250.0,675.5 1254.8,686.0 1242.4,692.0" fill="#fdfdf6"/><polygon points="1193.9,658.9 1197.8,650.8 1205.4,650.4 1209.5,657.6 1202.9,665.3" fill="#fdfdf6"/><polygon points="1130.6,596.7 1130.9,609.4 1125.7,618.1 1117.9,623.9 1114.8,613.0 1120.8,598.4" fill="#fdfdf6"/><polygon points="1753.1,648.0 1759.7,645.4 1768.5,652.9 1766.7,665.7 1761.3,675.7 1753.8,664.8 1750.2,655.8" fill="#fdfdf6"/><polygon points="1837.0,687.9 1834.1,686.8 1833.0,684.4 1835.2,682.1 1838.9,679.5 1840.5,682.6 1842.3,684.3 1839.8,686.1" fill="#fdfdf6"/><polygon points="1607.7,391.0 1603.4,389.7 1600.1,387.6 1597.1,384.0 1600.2,382.0 1604.5,384.3 1607.3,385.8 1608.0,388.1" fill="#fdfdf6"/><polygon points="1172.4,358.1 1184.7,363.8 1181.7,376.1 1173.4,373.6 1164.4,361.9" fill="#fdfdf6"/><polygon points="1398.6,341.9 1400.0,347.9 1399.3,355.9 1390.6,356.8 1385.7,351.1 1382.5,342.1 1392.3,340.3" fill="#fdfdf6"/><polygon points="1589.5,342.0 1584.0,353.3 1574.6,354.5 1566.7,357.6 1566.9,349.7 1567.7,341.3 1576.3,331.9 1585.9,333.4" fill="#fdfdf6"/><polygon points="1423.8,366.7 1428.0,366.9 1429.1,369.4 1427.2,372.5 1422.5,374.0 1421.6,370.4" fill="#fdfdf6"/><polygon points="1108.1,564.1 1112.8,561.0 1119.2,561.2 1121.8,568.3 1121.1,574.4 1117.5,580.9 1109.9,578.3 1105.9,570.8" fill="#fdfdf6"/><polygon points="1567.4,441.4 1569.7,435.5 1579.2,433.3 1584.1,438.2 1575.1,442.9" fill="#fdfdf6"/><polygon points="1683.2,561.7 1683.8,557.4 1688.8,558.6 1692.3,563.5 1687.2,564.0" fill="#fdfdf6"/><polygon points="1131.9,349.7 1136.1,337.4 1146.2,341.2 1146.3,354.2 1138.4,357.8" fill="#fdfdf6"/><polygon points="1604.6,375.2 1604.3,366.5 1611.7,366.7 1614.6,373.7 1609.8,379.1" fill="#fdfdf6"/><polygon points="1287.6,343.1 1293.4,349.3 1286.8,357.0 1278.0,354.5 1278.1,343.5" fill="#fdfdf6"/><polygon points="1697.2,739.7 1693.3,736.2 1692.7,732.7 1695.7,730.3 1700.6,730.8 1701.6,735.9" fill="#fdfdf6"/><polygon points="1594.9,694.6 1598.2,695.7 1597.8,700.9 1596.5,703.8 1594.0,703.8 1591.5,700.7 1591.9,695.4" fill="#fdfdf6"/><polygon points="1052.3,813.0 1051.9,822.7 1044.3,831.5 1036.3,828.5 1031.7,822.3 1033.4,812.3 1041.2,807.3 1048.4,806.8" fill="#fdfdf6"/><polygon points="1033.5,735.2 1049.0,731.2 1056.1,741.9 1046.8,754.3 1034.8,750.5" fill="#fdfdf6"/><polygon points="1622.3,482.8 1625.6,471.3 1633.5,464.4 1640.0,472.2 1636.6,481.6 1630.6,486.0" fill="#fdfdf6"/><polygon points="1105.1,427.9 1104.5,423.6 1107.0,419.9 1111.3,420.3 1113.4,425.3 1108.9,428.1" fill="#fdfdf6"/><polygon points="1718.5,789.9 1722.7,788.9 1725.3,791.9 1725.6,796.2 1722.8,800.8 1718.3,799.1 1713.6,797.8 1713.3,792.1" fill="#fdfdf6"/><polygon points="1240.2,405.1 1237.5,396.9 1229.0,388.0 1252.7,383.3 1270.2,383.8 1280.2,389.4 1294.0,399.8 1280.1,409.2 1256.4,409.7" fill="#f6f4ef"/><polygon points="1090.7,447.9 1102.8,443.5 1114.6,451.1 1119.0,456.1 1109.5,461.2 1097.4,463.6 1084.5,464.0 1074.5,457.0 1084.8,451.4" fill="#f6f4ef"/><polygon points="1375.4,474.9 1369.0,478.9 1356.8,480.2 1349.4,476.8 1350.4,467.8 1356.1,460.9 1364.2,457.6 1373.8,460.3 1380.8,468.1" fill="#f6f4ef"/><polygon points="1364.2,372.4 1377.6,367.7 1391.9,373.3 1399.6,382.9 1391.4,392.9 1384.5,394.1 1371.0,395.1 1364.1,393.7 1362.9,382.5" fill="#f6f4ef"/><polygon points="1545.5,402.3 1532.8,399.4 1525.0,386.1 1529.8,376.2 1543.8,363.9 1555.1,369.0 1562.4,377.0 1563.9,389.7 1562.6,400.0" fill="#f6f4ef"/><polygon points="1481.5,454.9 1485.0,444.4 1496.6,442.8 1510.1,439.9 1526.1,450.5 1521.3,459.6 1513.0,468.8 1496.4,467.0 1478.9,463.5" fill="#f6f4ef"/><polygon points="1611.6,439.9 1622.5,431.7 1635.9,442.9 1638.7,449.9 1633.1,461.6 1622.6,465.3 1609.5,460.9 1595.4,455.5 1605.0,444.1" fill="#f6f4ef"/><polygon points="1238.2,496.8 1230.1,499.7 1216.0,505.2 1200.2,500.6 1190.8,496.7 1202.4,489.8 1211.1,487.8 1221.8,488.4 1233.7,491.9" fill="#f6f4ef"/><polygon points="1317.9,522.5 1317.9,530.9 1308.8,534.4 1292.4,535.1 1281.9,529.4 1274.2,523.6 1285.4,515.3 1299.0,513.4 1310.8,517.6" fill="#f6f4ef"/><polygon points="1270.1,628.8 1283.3,627.1 1302.3,631.8 1313.8,636.8 1307.2,645.6 1295.9,649.3 1279.5,649.3 1263.3,647.0 1254.4,638.8" fill="#f6f4ef"/><polygon points="1190.4,708.3 1176.6,711.6 1161.1,705.8 1162.1,699.9 1163.0,693.8 1176.0,687.8 1194.2,687.0 1202.4,697.0 1201.0,703.6" fill="#f6f4ef"/><polygon points="1192.3,763.2 1177.9,757.7 1177.8,751.9 1179.0,744.6 1192.1,739.3 1206.6,743.1 1209.8,748.7 1208.8,754.9 1206.8,758.8" fill="#f6f4ef"/><polygon points="1304.7,804.6 1293.9,800.3 1282.9,793.8 1281.2,787.9 1290.2,781.4 1301.7,778.6 1311.4,782.3 1316.4,789.0 1313.8,797.4" fill="#f6f4ef"/><polygon points="1335.6,725.9 1323.7,722.0 1330.6,714.4 1335.6,710.3 1349.0,708.3 1363.1,716.0 1361.2,721.5 1357.6,726.0 1346.3,728.5" fill="#f6f4ef"/><polygon points="1599.4,561.9 1576.2,556.3 1567.0,553.7 1551.6,546.7 1568.2,538.8 1582.0,539.4 1606.7,539.3 1612.4,544.4 1613.5,553.4" fill="#f6f4ef"/><polygon points="1654.1,591.3 1639.8,600.1 1613.1,600.7 1586.3,597.0 1581.7,587.9 1601.6,577.9 1615.9,579.4 1638.4,574.8 1651.1,584.8" fill="#f6f4ef"/><polygon points="1584.9,656.7 1581.6,664.7 1571.2,674.8 1555.6,665.0 1549.7,657.8 1553.7,648.1 1563.5,638.6 1574.5,637.8 1588.1,646.0" fill="#f6f4ef"/><polygon points="1695.2,712.0 1684.9,717.3 1643.3,724.3 1607.7,709.4 1618.2,697.9 1621.6,685.1 1657.4,682.3 1693.5,684.8 1708.0,694.9" fill="#f6f4ef"/><polygon points="1746.5,730.8 1743.2,747.8 1737.8,757.0 1711.5,770.6 1697.6,757.6 1683.0,738.8 1694.8,724.2 1714.3,718.2 1742.4,720.1" fill="#f6f4ef"/><polygon points="1552.9,737.6 1557.1,728.5 1555.4,721.9 1573.6,717.0 1589.9,721.1 1595.0,727.8 1596.2,734.8 1585.3,738.0 1567.7,739.1" fill="#f6f4ef"/><polygon points="1500.4,742.8 1499.5,750.5 1498.2,761.4 1491.2,761.3 1478.4,765.0 1466.4,758.5 1460.1,748.5 1474.3,738.2 1484.9,738.7" fill="#f6f4ef"/><polygon points="1726.9,616.8 1714.5,620.4 1702.7,616.3 1699.0,610.7 1693.3,604.5 1710.2,602.3 1727.7,603.4 1739.3,606.8 1734.7,612.5" fill="#f6f4ef"/><polygon points="1076.7,603.4 1077.6,596.4 1088.4,590.7 1099.0,589.0 1105.6,594.5 1107.6,600.6 1108.3,610.5 1096.9,609.7 1084.9,609.9" fill="#f6f4ef"/><polygon points="1046.2,309.0 1062.8,309.0 1067.0,317.3 1075.3,323.5 1081.5,327.7 1084.6,340.1 1090.8,343.2 1089.8,356.7 1097.1,364.0 1088.8,371.2 1086.7,385.8 1081.5,392.0 1079.4,379.5 1081.5,371.2 1084.6,362.9 1080.5,357.8 1081.5,348.4 1076.3,340.1 1071.1,331.8 1064.9,325.6 1058.7,323.5 1052.4,317.3 1048.3,315.2" fill="#b2dcf3"/><polygon points="1042.1,329.7 1048.3,323.5 1052.4,317.3 1046.2,319.4" fill="#b2dcf3"/><polygon points="1320.1,342.2 1327.3,341.2 1328.4,347.4 1322.2,348.4" fill="#b2dcf3"/><polygon points="1450.0,309.0 1464.5,309.0 1472.8,319.4 1485.2,331.8 1499.8,340.1 1503.9,333.9 1510.1,338.0 1512.2,348.4 1518.4,356.7 1516.3,367.1 1526.7,371.2 1522.6,373.3 1508.0,371.2 1499.8,367.1 1493.5,358.8 1485.2,350.5 1489.4,344.3 1481.1,336.0 1468.6,329.7 1458.3,319.4" fill="#b2dcf3"/><polygon points="1464.5,350.5 1472.8,354.6 1485.2,362.9 1497.7,367.1 1499.8,371.2 1485.2,367.1 1468.6,362.9 1462.4,365.0 1464.5,358.8" fill="#b2dcf3"/><polygon points="1443.7,350.5 1456.2,345.3 1464.5,350.5 1452.0,353.6 1445.8,355.7" fill="#b2dcf3"/><polygon points="1474.9,309.0 1485.2,317.3 1495.6,315.2 1489.4,321.4 1481.1,319.4" fill="#b2dcf3"/><polygon points="1401.2,406.5 1408.5,396.1 1423.0,387.8 1429.2,392.0 1437.5,396.1 1450.0,391.0 1456.2,396.1 1464.5,400.3 1474.9,398.2 1485.2,400.3 1487.3,404.4 1474.9,406.5 1462.4,406.5 1452.0,402.4 1441.7,398.2 1431.3,396.1 1423.0,394.1 1412.6,400.3 1406.4,408.6" fill="#b2dcf3"/><polygon points="1446.8,375.4 1453.1,377.5 1452.0,383.7 1447.9,380.6" fill="#b2dcf3"/><polygon points="1513.6,471.1 1520.6,479.3 1522.9,480.4 1520.6,482.8 1515.9,479.3" fill="#b2dcf3"/><polygon points="1311.8,548.5 1330.5,540.2 1334.6,529.8 1338.8,531.9 1330.5,546.4 1315.9,552.6" fill="#b2dcf3"/><polygon points="1667.8,576.1 1671.1,567.4 1673.7,568.5 1670.0,580.9" fill="#b2dcf3"/><polygon points="1682.0,560.8 1688.5,559.7 1692.9,569.6 1684.2,568.5" fill="#b2dcf3"/><polygon points="1695.5,565.2 1701.6,564.1 1704.9,572.8 1699.5,575.0" fill="#b2dcf3"/><polygon points="1735.3,791.7 1741.6,781.2 1746.8,783.3 1739.5,795.9" fill="#b2dcf3"/><polygon points="1627.1,718.2 1632.4,715.0 1634.5,720.3 1630.3,723.4" fill="#b2dcf3"/><polygon points="1681.2,560.0 1700.4,560.0 1703.6,572.8 1694.0,576.0 1684.4,569.6" fill="#b2dcf3"/><polygon points="1669.9,569.6 1674.7,566.4 1673.1,579.2 1668.3,580.8" fill="#b2dcf3"/><path d="M1081.5 392.0 C1080.1 393.7 1072.2 398.9 1073.2 402.4 C1074.2 405.8 1084.3 408.9 1087.7 412.7 C1091.2 416.5 1092.6 421.0 1093.9 425.2 C1095.3 429.3 1096.4 432.8 1096.0 437.6 C1095.7 442.5 1092.2 447.2 1091.9 454.2 C1091.5 461.3 1093.6 475.7 1093.9 480.0" fill="none" stroke="#a5d6f3" stroke-width="1"/><path d="M1084.6 353.6 C1086.2 353.4 1090.3 354.8 1093.9 352.6 C1097.6 350.3 1104.3 342.2 1106.4 340.1" fill="none" stroke="#a5d6f3" stroke-width="1"/><path d="M1232.9 321.4 C1232.8 323.2 1230.2 328.7 1231.9 331.8 C1233.6 334.9 1240.7 337.4 1243.3 340.1 C1245.9 342.9 1244.0 346.0 1247.5 348.4 C1250.9 350.8 1259.2 354.0 1264.1 354.6 C1268.9 355.3 1272.4 351.2 1276.5 352.6 C1280.7 354.0 1284.8 360.2 1289.0 362.9 C1293.1 365.7 1296.9 367.8 1301.4 369.2 C1305.9 370.5 1312.1 368.1 1315.9 371.2 C1319.7 374.4 1321.1 383.3 1324.2 387.8 C1327.3 392.3 1332.9 396.5 1334.6 398.2" fill="none" stroke="#a5d6f3" stroke-width="1"/><path d="M1348.3 342.2 C1349.7 340.1 1351.8 331.5 1356.6 329.7 C1361.4 328.0 1371.5 333.2 1377.3 331.8 C1383.2 330.4 1387.0 323.9 1391.9 321.4 C1396.7 319.0 1401.9 317.0 1406.4 317.3 C1410.9 317.6 1416.1 320.4 1418.8 323.5 C1421.6 326.6 1420.6 332.2 1423.0 336.0 C1425.4 339.8 1429.2 343.6 1433.4 346.3 C1437.5 349.1 1445.5 351.5 1447.9 352.6" fill="none" stroke="#a5d6f3" stroke-width="1"/><path d="M1356.6 425.2 C1358.3 423.8 1362.8 417.6 1367.0 416.9 C1371.1 416.2 1377.3 421.7 1381.5 421.0 C1385.6 420.3 1388.6 415.2 1391.9 412.7 C1395.2 410.3 1399.6 407.5 1401.2 406.5" fill="none" stroke="#a5d6f3" stroke-width="1"/><path d="M1487.3 404.4 C1490.4 405.1 1499.4 407.9 1506.0 408.6 C1512.5 409.3 1521.2 407.2 1526.7 408.6 C1532.3 410.0 1534.3 414.8 1539.2 416.9 C1544.0 419.0 1552.3 418.3 1555.8 421.0 C1559.2 423.8 1557.8 430.7 1559.9 433.5 C1562.0 436.2 1565.4 437.6 1568.2 437.6 C1571.0 437.6 1573.1 435.6 1576.5 433.5 C1580.0 431.4 1588.3 429.7 1589.0 425.2 C1589.7 420.7 1583.4 412.0 1580.7 406.5 C1577.9 401.0 1575.8 394.1 1572.4 392.0 C1568.9 389.9 1564.1 394.8 1559.9 394.1 C1555.8 393.4 1551.3 389.6 1547.5 387.8 C1543.7 386.1 1540.6 386.5 1537.1 383.7 C1533.6 380.9 1528.5 373.3 1526.7 371.2" fill="none" stroke="#a5d6f3" stroke-width="1"/><path d="M1599.3 443.9 C1602.1 444.2 1609.9 444.5 1615.9 445.9 C1622.0 447.3 1632.4 451.1 1635.6 452.2" fill="none" stroke="#a5d6f3" stroke-width="1"/><path d="M1040.0 623.2 C1042.1 621.4 1048.3 613.8 1052.4 612.8 C1056.6 611.7 1060.7 616.9 1064.9 616.9 C1069.0 616.9 1072.5 614.5 1077.3 612.8 C1082.2 611.1 1089.8 605.9 1093.9 606.6 C1098.1 607.2 1099.5 617.3 1102.2 616.9 C1105.0 616.6 1107.1 606.9 1110.5 604.5 C1114.0 602.1 1119.9 601.7 1123.0 602.4 C1126.1 603.1 1125.8 609.0 1129.2 608.6 C1132.7 608.3 1139.2 600.7 1143.7 600.3 C1148.2 600.0 1151.3 606.6 1156.2 606.6 C1161.0 606.6 1168.3 599.6 1172.8 600.3 C1177.3 601.0 1182.5 607.6 1183.2 610.7 C1183.8 613.8 1176.6 617.3 1176.9 619.0 C1177.3 620.7 1182.5 623.5 1185.2 621.1 C1188.0 618.7 1190.1 606.2 1193.5 604.5 C1197.0 602.8 1201.5 610.4 1206.0 610.7 C1210.5 611.1 1217.0 609.7 1220.5 606.6 C1224.0 603.4 1224.0 594.1 1226.7 592.0 C1229.5 590.0 1233.6 592.7 1237.1 594.1 C1240.6 595.5 1242.3 602.1 1247.5 600.3 C1252.7 598.6 1263.7 585.1 1268.2 583.7 C1272.7 582.4 1271.0 590.7 1274.4 592.0 C1277.9 593.4 1284.5 595.5 1289.0 592.0 C1293.5 588.6 1297.3 575.1 1301.4 571.3 C1305.6 567.5 1310.4 573.0 1313.9 569.2 C1317.3 565.4 1318.7 555.0 1322.2 548.5 C1325.6 541.9 1331.6 533.6 1334.6 529.8 C1337.6 526.0 1339.1 526.3 1340.0 525.6" fill="none" stroke="#a5d6f3" stroke-width="1"/><path d="M1106.4 480.0 C1107.1 481.4 1107.8 485.9 1110.5 488.3 C1113.3 490.7 1118.5 491.8 1123.0 494.5 C1127.5 497.3 1133.4 502.1 1137.5 504.9 C1141.7 507.7 1145.8 511.5 1147.9 511.1 C1150.0 510.8 1147.9 504.2 1150.0 502.8 C1152.0 501.4 1157.9 501.4 1160.3 502.8 C1162.8 504.2 1160.3 508.0 1164.5 511.1 C1168.6 514.2 1181.1 518.7 1185.2 521.5 C1189.4 524.3 1185.6 526.3 1189.4 527.7 C1193.2 529.1 1205.6 527.4 1208.0 529.8 C1210.5 532.2 1202.5 537.7 1203.9 542.2 C1205.3 546.7 1214.3 550.9 1216.3 556.8 C1218.4 562.6 1213.9 573.0 1216.3 577.5 C1218.8 582.0 1228.5 582.7 1230.9 583.7" fill="none" stroke="#a5d6f3" stroke-width="1"/><path d="M1138.7 747.6 C1140.1 748.6 1143.9 752.8 1147.1 753.9 C1150.2 754.9 1154.4 751.8 1157.6 753.9 C1160.7 756.0 1161.8 763.7 1166.0 766.5 C1170.2 769.3 1177.2 770.7 1182.8 770.7 C1188.4 770.7 1193.6 767.5 1199.6 766.5 C1205.5 765.4 1212.5 764.4 1218.5 764.4 C1224.4 764.4 1230.0 766.5 1235.3 766.5 C1240.5 766.5 1244.7 763.3 1250.0 764.4 C1255.2 765.4 1261.8 771.4 1266.7 772.8 C1271.6 774.2 1275.8 771.4 1279.3 772.8 C1282.8 774.2 1286.3 779.8 1287.7 781.2" fill="none" stroke="#a5d6f3" stroke-width="1"/><path d="M1071.5 824.0 C1074.3 820.7 1082.3 806.2 1088.3 804.3 C1094.2 802.4 1101.2 811.6 1107.2 812.7 C1113.1 813.7 1120.1 808.7 1124.0 810.6 C1127.8 812.5 1129.2 821.8 1130.3 824.0" fill="none" stroke="#a5d6f3" stroke-width="1"/><path d="M1306.6 785.4 C1307.7 783.3 1308.4 775.9 1312.9 772.8 C1317.5 769.6 1329.4 765.8 1333.9 766.5 C1338.4 767.2 1339.0 775.2 1340.0 777.0" fill="none" stroke="#a5d6f3" stroke-width="1"/><path d="M1540.0 695.1 C1542.1 695.4 1549.8 694.7 1552.6 697.2 C1555.4 699.6 1554.7 705.9 1556.8 709.8 C1558.9 713.6 1562.4 715.4 1565.2 720.3 C1568.0 725.2 1569.0 734.3 1573.6 739.2 C1578.1 744.1 1586.2 746.5 1592.5 749.7 C1598.8 752.8 1608.6 753.5 1611.4 758.1 C1614.2 762.6 1608.6 773.8 1609.3 777.0 C1610.0 780.1 1616.6 774.9 1615.6 777.0 C1614.5 779.1 1607.9 787.8 1603.0 789.6 C1598.1 791.3 1590.7 786.8 1586.2 787.5 C1581.6 788.2 1579.9 795.2 1575.7 793.8 C1571.5 792.4 1565.2 779.1 1561.0 779.1 C1556.8 779.1 1554.0 791.0 1550.5 793.8 C1547.0 796.6 1541.7 795.5 1540.0 795.9" fill="none" stroke="#a5d6f3" stroke-width="1"/><path d="M1628.2 716.1 C1630.6 715.4 1639.4 711.2 1642.9 711.9 C1646.4 712.6 1648.8 717.5 1649.2 720.3 C1649.5 723.1 1644.3 726.6 1645.0 728.7 C1645.7 730.8 1650.9 732.2 1653.4 732.9 C1655.8 733.6 1658.6 732.9 1659.7 732.9" fill="none" stroke="#a5d6f3" stroke-width="1"/><path d="M1684.9 751.8 C1686.6 753.2 1693.3 756.0 1695.4 760.2 C1697.5 764.4 1695.4 771.0 1697.5 777.0 C1699.6 782.9 1705.2 791.7 1708.0 795.9 C1710.8 800.1 1713.6 799.7 1714.3 802.2 C1715.0 804.6 1711.5 807.0 1712.2 810.6 C1712.9 814.2 1717.4 821.8 1718.5 824.0" fill="none" stroke="#a5d6f3" stroke-width="1"/><path d="M1522.9 691.5 C1524.5 692.1 1528.0 694.4 1532.3 695.0 C1536.5 695.6 1545.3 694.0 1548.6 695.0 C1551.9 696.0 1550.5 699.5 1552.1 700.8 C1553.6 702.2 1557.3 702.2 1557.9 703.2 C1558.5 704.1 1556.7 705.9 1555.6 706.6 C1554.4 707.4 1551.7 707.6 1550.9 707.8" fill="none" stroke="#a5d6f3" stroke-width="1"/><path d="M1556.7 716.0 C1557.7 717.9 1559.3 724.1 1562.6 727.6 C1565.9 731.1 1572.3 734.4 1576.6 737.0 C1580.8 739.5 1583.7 740.6 1588.2 742.8 C1592.7 744.9 1599.3 747.2 1603.4 749.8 C1607.4 752.3 1609.9 757.3 1612.7 757.9 C1615.5 758.5 1618.8 754.0 1620.0 753.3" fill="none" stroke="#a5d6f3" stroke-width="1"/><path d="M1612.7 757.9 C1612.1 759.9 1608.6 766.9 1609.2 769.6 C1609.8 772.3 1614.4 771.8 1616.2 774.2 C1618.0 776.7 1619.4 782.4 1620.0 784.0" fill="none" stroke="#a5d6f3" stroke-width="1"/><path d="M1074.5 824.1 C1077.7 821.2 1085.2 808.1 1093.7 806.8 C1102.3 805.5 1116.7 815.3 1125.8 816.4 C1134.9 817.5 1144.5 813.7 1148.2 813.2" fill="none" stroke="#a5d6f3" stroke-width="1"/><path d="M1193.5 331.8 C1194.6 332.5 1196.6 332.2 1199.8 336.0 C1202.9 339.8 1207.7 347.7 1212.2 354.6 C1216.7 361.6 1222.6 370.5 1226.7 377.5 C1230.9 384.4 1233.6 391.6 1237.1 396.1 C1240.6 400.6 1242.3 401.7 1247.5 404.4 C1252.7 407.2 1259.6 409.3 1268.2 412.7 C1276.9 416.2 1291.0 421.7 1299.3 425.2 C1307.6 428.6 1312.8 430.7 1318.0 433.5 C1323.2 436.2 1328.4 440.4 1330.5 441.8" fill="none" stroke="#c9c9c9" stroke-width="0.8"/><path d="M1185.2 327.7 C1186.6 328.4 1193.0 329.7 1193.5 331.8 C1194.0 333.9 1189.6 336.0 1188.3 340.1 C1187.1 344.3 1185.9 352.2 1186.3 356.7 C1186.6 361.2 1190.9 362.9 1190.4 367.1 C1189.9 371.2 1186.8 374.7 1183.2 381.6 C1179.5 388.5 1171.7 399.9 1168.6 408.6 C1165.5 417.2 1166.6 427.3 1164.5 433.5 C1162.4 439.7 1159.6 441.1 1156.2 445.9 C1152.7 450.8 1148.2 457.7 1143.7 462.5 C1139.2 467.4 1131.6 472.9 1129.2 475.0" fill="none" stroke="#c9c9c9" stroke-width="0.8"/><path d="M1570.3 309.0 C1568.2 312.5 1561.6 320.8 1557.8 329.7 C1554.0 338.7 1550.9 352.6 1547.5 362.9 C1544.0 373.3 1540.6 382.3 1537.1 392.0 C1533.6 401.7 1530.9 411.4 1526.7 421.0 C1522.6 430.7 1518.1 440.7 1512.2 450.1 C1506.3 459.4 1494.9 472.6 1491.5 477.0" fill="none" stroke="#c9c9c9" stroke-width="0.8"/><path d="M1381.5 309.0 C1382.0 312.5 1384.3 319.4 1384.6 329.7 C1385.0 340.1 1382.4 357.4 1383.6 371.2 C1384.8 385.1 1389.1 400.6 1391.9 412.7 C1394.6 424.8 1397.7 435.6 1400.2 443.9 C1402.6 452.2 1405.4 459.4 1406.4 462.5" fill="none" stroke="#c9c9c9" stroke-width="0.8"/><path d="M1551.6 415.8 L1635.6 414.8" fill="none" stroke="#c9c9c9" stroke-width="0.8"/><path d="M1551.6 415.8 C1551.4 420.5 1554.0 438.8 1550.6 443.9 C1547.1 448.9 1534.2 445.6 1530.9 445.9" fill="none" stroke="#c9c9c9" stroke-width="0.8"/><path d="M1530.9 445.9 C1540.6 445.8 1571.5 443.9 1589.0 444.9 C1606.4 445.9 1627.9 450.9 1635.6 452.2" fill="none" stroke="#c9c9c9" stroke-width="0.8"/><path d="M1549.5 346.3 C1552.3 345.0 1559.6 339.1 1566.1 338.0 C1572.7 337.0 1581.7 341.2 1589.0 340.1 C1596.2 339.1 1601.9 334.9 1609.7 331.8 C1617.5 328.7 1631.3 323.2 1635.6 321.4" fill="none" stroke="#c9c9c9" stroke-width="0.8"/><path d="M1131.3 480.0 C1129.9 482.1 1127.8 488.6 1123.0 492.4 C1118.1 496.3 1108.5 498.7 1102.2 502.8 C1096.0 507.0 1089.8 510.8 1085.6 517.3 C1081.5 523.9 1079.4 533.9 1077.3 542.2 C1075.3 550.5 1074.2 560.2 1073.2 567.1 C1072.2 574.1 1072.2 577.5 1071.1 583.7 C1070.1 590.0 1068.7 597.6 1067.0 604.5 C1065.2 611.4 1063.2 617.5 1060.7 625.2 C1058.3 633.0 1053.8 646.7 1052.4 651.0" fill="none" stroke="#c9c9c9" stroke-width="0.8"/><path d="M1218.4 498.7 C1221.2 500.1 1226.7 501.8 1235.0 507.0 C1243.3 512.2 1259.9 525.0 1268.2 529.8 C1276.5 534.6 1277.9 535.3 1284.8 536.0 C1291.7 536.7 1302.1 535.3 1309.7 533.9 C1317.3 532.6 1327.0 528.8 1330.5 527.7" fill="none" stroke="#c9c9c9" stroke-width="0.8"/><path d="M1255.8 606.6 C1261.3 605.2 1278.6 600.0 1289.0 598.3 C1299.3 596.5 1311.1 594.5 1318.0 596.2 C1324.9 597.9 1328.4 606.6 1330.5 608.6" fill="none" stroke="#c9c9c9" stroke-width="0.8"/><path d="M1040.0 720.3 C1045.2 718.2 1059.2 711.5 1071.5 707.7 C1083.7 703.8 1097.7 700.0 1113.5 697.2 C1129.2 694.4 1151.6 694.4 1166.0 690.9 C1180.3 687.4 1189.1 680.4 1199.6 676.2 C1210.1 672.0 1220.6 668.5 1229.0 665.7 C1237.4 662.9 1241.2 660.8 1250.0 659.4 C1258.7 658.0 1274.4 658.7 1281.4 657.3 C1288.4 655.9 1290.2 652.0 1291.9 651.0" fill="none" stroke="#c9c9c9" stroke-width="0.8"/><path d="M1109.3 824.0 C1112.4 819.7 1121.5 806.5 1128.2 798.0 C1134.8 789.4 1142.9 779.1 1149.2 772.8 C1155.5 766.5 1156.9 764.4 1166.0 760.2 C1175.1 756.0 1196.8 752.5 1203.8 747.6 C1210.8 742.7 1203.8 735.7 1208.0 730.8 C1212.2 725.9 1223.4 722.7 1229.0 718.2 C1234.6 713.6 1236.3 708.4 1241.6 703.5 C1246.8 698.6 1253.8 691.6 1260.4 688.8 C1267.1 686.0 1273.0 689.8 1281.4 686.7 C1289.8 683.5 1302.8 673.7 1310.8 669.9 C1318.9 666.0 1326.6 664.6 1329.7 663.6" fill="none" stroke="#c9c9c9" stroke-width="0.8"/><path d="M1040.0 735.0 C1043.5 735.3 1054.0 736.2 1061.0 737.1 C1068.0 738.0 1078.5 739.7 1082.0 740.2" fill="none" stroke="#c9c9c9" stroke-width="0.8"/><path d="M1540.0 587.0 C1547.3 586.7 1561.8 585.2 1583.7 584.8 C1605.5 584.5 1652.9 583.0 1671.1 584.8 C1689.3 586.7 1685.6 592.1 1692.9 595.8 C1700.2 599.4 1700.2 604.5 1714.7 606.7 C1729.3 608.9 1765.7 608.9 1780.3 608.9 C1794.8 608.9 1793.0 608.5 1802.1 606.7 C1811.2 604.9 1823.2 602.0 1834.9 598.0 C1846.5 594.0 1865.8 585.2 1872.0 582.7" fill="none" stroke="#c9c9c9" stroke-width="0.8"/><path d="M1730.0 558.6 C1734.8 560.8 1750.1 568.1 1758.4 571.7 C1766.8 575.4 1773.0 574.7 1780.3 580.5 C1787.6 586.3 1798.5 602.3 1802.1 606.7" fill="none" stroke="#c9c9c9" stroke-width="0.8"/><path d="M1553.1 556.5 C1556.4 554.6 1564.0 547.7 1572.8 545.5 C1581.5 543.3 1600.1 543.7 1605.5 543.3" fill="none" stroke="#c9c9c9" stroke-width="0.8"/><path d="M1577.8 651.0 C1580.6 653.1 1586.9 660.1 1594.6 663.6 C1602.3 667.1 1613.5 667.8 1624.0 672.0 C1634.5 676.2 1647.1 681.8 1657.6 688.8 C1668.1 695.8 1676.5 706.3 1687.0 714.0 C1697.5 721.7 1710.1 728.3 1720.6 735.0 C1731.1 741.6 1741.6 746.9 1750.0 753.9 C1758.4 760.9 1764.0 769.6 1771.0 777.0 C1778.0 784.3 1785.0 791.0 1792.0 798.0 C1799.0 805.0 1809.5 815.5 1813.0 819.0" fill="none" stroke="#c9c9c9" stroke-width="0.8"/><path d="M1697.5 678.3 C1706.2 679.0 1734.2 681.1 1750.0 682.5 C1765.7 683.9 1782.9 683.5 1792.0 686.7 C1801.1 689.8 1791.3 698.2 1804.6 701.4 C1817.9 704.5 1860.8 704.9 1872.0 705.6" fill="none" stroke="#c9c9c9" stroke-width="0.8"/><path d="M1429.4 746.3 C1428.2 747.4 1424.1 749.4 1422.4 753.3 C1420.6 757.2 1419.9 764.5 1418.9 769.6 C1417.9 774.7 1416.9 781.6 1416.6 784.0" fill="none" stroke="#c9c9c9" stroke-width="0.8"/><path d="M1114.7 309.0 C1114.5 312.5 1113.7 323.5 1113.7 329.7 C1113.7 336.0 1113.1 342.4 1114.7 346.3 C1116.2 350.3 1118.8 352.0 1123.0 353.6 C1127.1 355.2 1134.1 353.8 1139.6 355.7 C1145.1 357.6 1151.0 362.4 1156.2 365.0 C1161.4 367.6 1167.6 368.5 1170.7 371.2 C1173.8 374.0 1172.4 378.2 1174.9 381.6 C1177.3 385.1 1181.4 388.9 1185.2 392.0 C1189.0 395.1 1194.2 397.5 1197.7 400.3 C1201.1 403.1 1203.6 405.8 1206.0 408.6 C1208.4 411.4 1209.4 413.4 1212.2 416.9 C1215.0 420.3 1218.1 426.2 1222.6 429.3 C1227.1 432.4 1235.0 433.5 1239.2 435.6 C1243.3 437.6 1245.0 438.7 1247.5 441.8 C1249.9 444.9 1250.2 450.8 1253.7 454.2 C1257.2 457.7 1262.3 460.5 1268.2 462.5 C1274.1 464.6 1283.4 463.8 1289.0 466.7 C1294.5 469.6 1299.3 477.7 1301.4 480.0" fill="none" stroke="#fcd2a0" stroke-width="1.2"/><path d="M1212.2 410.7 C1216.0 410.3 1229.5 408.6 1235.0 408.6 C1240.6 408.6 1243.5 408.6 1245.4 410.7 C1247.3 412.7 1247.1 417.9 1246.4 421.0 C1245.7 424.1 1241.8 426.6 1241.2 429.3 C1240.7 432.1 1243.0 436.2 1243.3 437.6" fill="none" stroke="#fcd2a0" stroke-width="1.2"/><path d="M1235.0 408.6 C1235.4 407.2 1233.3 402.0 1237.1 400.3 C1240.9 398.6 1254.0 399.6 1257.8 398.2 C1261.6 396.8 1259.6 393.0 1259.9 392.0" fill="none" stroke="#fcd2a0" stroke-width="1.2"/><path d="M1040.0 454.2 C1043.5 454.6 1053.8 456.6 1060.7 456.3 C1067.7 456.0 1075.6 453.2 1081.5 452.2 C1087.4 451.1 1090.8 449.0 1096.0 450.1 C1101.2 451.1 1106.0 456.3 1112.6 458.4 C1119.2 460.5 1128.2 460.5 1135.4 462.5 C1142.7 464.6 1149.6 468.8 1156.2 470.8 C1162.8 472.9 1170.0 473.5 1174.9 475.0 C1179.7 476.5 1182.8 479.1 1185.2 480.0 C1187.6 480.8 1184.2 477.9 1189.4 480.0 C1194.6 482.1 1208.7 488.6 1216.3 492.4 C1224.0 496.3 1228.5 498.0 1235.0 502.8 C1241.6 507.7 1248.2 516.3 1255.8 521.5 C1263.4 526.7 1272.0 531.5 1280.7 533.9 C1289.3 536.4 1300.0 536.4 1307.6 536.0 C1315.2 535.7 1323.2 532.6 1326.3 531.9" fill="none" stroke="#fcd2a0" stroke-width="1.2"/><path d="M1398.1 309.0 C1398.3 311.1 1398.4 317.0 1399.1 321.4 C1399.8 325.9 1400.9 331.1 1402.2 336.0 C1403.6 340.8 1406.4 344.6 1407.4 350.5 C1408.5 356.4 1409.0 364.3 1408.5 371.2 C1407.9 378.2 1405.4 386.1 1404.3 392.0 C1403.3 397.9 1402.4 401.7 1402.2 406.5 C1402.1 411.4 1403.1 418.6 1403.3 421.0" fill="none" stroke="#fcd2a0" stroke-width="1.2"/><path d="M1340.0 331.8 C1341.4 333.6 1344.8 338.7 1348.3 342.2 C1351.8 345.7 1355.2 350.7 1360.7 352.6 C1366.3 354.5 1373.9 354.0 1381.5 353.6 C1389.1 353.3 1402.2 351.0 1406.4 350.5" fill="none" stroke="#fcd2a0" stroke-width="1.2"/><path d="M1425.1 421.0 C1428.2 421.4 1437.2 423.8 1443.7 423.1 C1450.3 422.4 1457.6 417.9 1464.5 416.9 C1471.4 415.8 1479.3 415.8 1485.2 416.9 C1491.1 417.9 1494.6 422.8 1499.8 423.1 C1504.9 423.5 1510.5 419.3 1516.3 419.0 C1522.2 418.6 1531.9 420.7 1535.0 421.0" fill="none" stroke="#fcd2a0" stroke-width="1.2"/><path d="M1559.9 379.5 C1563.0 378.2 1572.0 375.0 1578.6 371.2 C1585.2 367.4 1593.1 362.3 1599.3 356.7 C1605.6 351.2 1609.9 343.9 1615.9 338.0 C1622.0 332.2 1632.4 324.2 1635.6 321.4" fill="none" stroke="#fcd2a0" stroke-width="1.2"/><path d="M1557.8 396.1 C1560.3 397.2 1567.2 399.6 1572.4 402.4 C1577.6 405.1 1585.5 408.9 1589.0 412.7 C1592.4 416.5 1591.0 421.7 1593.1 425.2 C1595.2 428.6 1598.0 429.3 1601.4 433.5 C1604.9 437.6 1612.5 444.5 1613.9 450.1 C1615.2 455.6 1609.4 461.7 1609.7 466.7 C1610.1 471.7 1614.9 477.7 1615.9 480.0" fill="none" stroke="#fcd2a0" stroke-width="1.2"/><path d="M1464.5 458.4 C1465.2 457.3 1465.2 453.5 1468.6 452.2 C1472.1 450.8 1479.0 450.1 1485.2 450.1 C1491.5 450.1 1500.4 452.2 1506.0 452.2 C1511.5 452.2 1516.3 450.4 1518.4 450.1" fill="none" stroke="#fcd2a0" stroke-width="1.2"/><path d="M1340.0 371.2 C1342.1 372.3 1347.3 376.4 1352.4 377.5 C1357.6 378.5 1366.3 376.4 1371.1 377.5 C1376.0 378.5 1381.5 379.9 1381.5 383.7 C1381.5 387.5 1376.0 397.2 1371.1 400.3 C1366.3 403.4 1357.6 402.7 1352.4 402.4 C1347.3 402.0 1342.1 398.9 1340.0 398.2" fill="none" stroke="#fcd2a0" stroke-width="1.2"/><path d="M1129.2 600.3 C1132.3 599.6 1142.0 596.5 1147.9 596.2 C1153.8 595.8 1158.9 598.3 1164.5 598.3 C1170.0 598.3 1176.2 597.0 1181.1 596.2 C1185.9 595.3 1189.4 592.4 1193.5 593.1 C1197.7 593.8 1202.5 599.8 1206.0 600.3 C1209.4 600.9 1212.4 598.9 1214.3 596.2 C1216.2 593.4 1215.3 586.2 1217.4 583.7 C1219.5 581.3 1223.8 580.6 1226.7 581.7 C1229.7 582.7 1231.6 588.1 1235.0 590.0 C1238.5 591.9 1241.9 594.1 1247.5 593.1 C1253.0 592.0 1263.0 588.7 1268.2 583.7 C1273.4 578.7 1275.1 567.8 1278.6 563.0 C1282.0 558.1 1287.2 556.1 1289.0 554.7" fill="none" stroke="#fcd2a0" stroke-width="1.2"/><path d="M1040.0 612.8 C1042.1 612.1 1045.5 610.0 1052.4 608.6 C1059.4 607.2 1073.2 605.9 1081.5 604.5 C1089.8 603.1 1094.3 601.0 1102.2 600.3 C1110.2 599.6 1124.7 600.3 1129.2 600.3" fill="none" stroke="#fcd2a0" stroke-width="1.2"/><path d="M1193.5 604.5 C1194.6 605.9 1194.2 612.1 1199.8 612.8 C1205.3 613.5 1218.8 609.7 1226.7 608.6 C1234.7 607.6 1240.6 607.6 1247.5 606.6 C1254.4 605.5 1261.3 604.1 1268.2 602.4 C1275.1 600.7 1281.4 598.6 1289.0 596.2 C1296.6 593.8 1309.7 589.3 1313.9 587.9" fill="none" stroke="#fcd2a0" stroke-width="1.2"/><path d="M1268.2 583.7 L1268.2 602.4" fill="none" stroke="#fcd2a0" stroke-width="1.2"/><path d="M1289.0 651.0 C1291.0 647.4 1296.9 635.7 1301.4 629.4 C1305.9 623.0 1311.4 616.9 1315.9 612.8 C1320.4 608.6 1326.3 605.9 1328.4 604.5" fill="none" stroke="#fcd2a0" stroke-width="1.2"/><path d="M1040.0 711.9 C1043.5 710.5 1052.2 706.6 1061.0 703.5 C1069.7 700.3 1082.0 695.8 1092.5 693.0 C1103.0 690.2 1113.1 688.1 1124.0 686.7 C1134.8 685.3 1152.0 684.9 1157.6 684.6" fill="none" stroke="#fcd2a0" stroke-width="1.2"/><path d="M1166.0 686.7 C1169.5 685.3 1180.0 682.1 1187.0 678.3 C1194.0 674.4 1201.0 666.4 1208.0 663.6 C1215.0 660.8 1222.0 661.1 1229.0 661.5 C1236.0 661.8 1246.5 665.0 1250.0 665.7" fill="none" stroke="#fcd2a0" stroke-width="1.2"/><path d="M1233.2 688.8 C1233.5 691.6 1236.0 701.4 1235.3 705.6 C1234.6 709.8 1228.6 710.8 1229.0 714.0 C1229.3 717.1 1236.7 720.3 1237.4 724.5 C1238.1 728.7 1233.9 734.6 1233.2 739.2 C1232.5 743.7 1230.4 748.3 1233.2 751.8 C1236.0 755.3 1244.4 758.1 1250.0 760.2 C1255.6 762.3 1263.2 761.6 1266.7 764.4 C1270.2 767.2 1266.7 774.2 1270.9 777.0 C1275.1 779.8 1288.4 780.5 1291.9 781.2" fill="none" stroke="#fcd2a0" stroke-width="1.2"/><path d="M1256.3 726.6 C1257.3 724.8 1259.0 718.5 1262.5 716.1 C1266.0 713.6 1270.9 716.8 1277.2 711.9 C1283.5 707.0 1296.8 693.0 1300.3 686.7 C1303.8 680.4 1296.1 676.9 1298.2 674.1 C1300.3 671.3 1307.0 669.5 1312.9 669.9 C1318.9 670.2 1330.4 675.1 1333.9 676.2" fill="none" stroke="#fcd2a0" stroke-width="1.2"/><path d="M1298.2 824.0 C1299.3 821.8 1304.2 814.4 1304.5 810.6 C1304.9 806.7 1299.3 803.6 1300.3 801.1 C1301.4 798.7 1307.0 798.5 1310.8 795.9 C1314.7 793.2 1318.6 788.5 1323.4 785.4 C1328.3 782.2 1337.3 778.4 1340.0 777.0" fill="none" stroke="#fcd2a0" stroke-width="1.2"/><path d="M1590.2 611.1 C1592.8 612.5 1600.1 618.0 1605.5 619.8 C1611.0 621.6 1616.5 622.7 1623.0 622.0 C1629.6 621.3 1636.8 616.9 1644.8 615.4 C1652.9 614.0 1663.1 615.1 1671.1 613.2 C1679.1 611.4 1686.4 607.4 1692.9 604.5 C1699.5 601.6 1707.5 597.2 1710.4 595.8" fill="none" stroke="#fcd2a0" stroke-width="1.2"/><path d="M1617.5 480.0 C1616.6 482.2 1615.9 488.4 1612.1 493.1 C1608.3 497.8 1597.9 503.3 1594.6 508.4 C1591.3 513.5 1596.1 520.8 1592.4 523.7 C1588.8 526.6 1576.0 525.5 1572.8 525.9" fill="none" stroke="#fcd2a0" stroke-width="1.2"/><path d="M1592.4 523.7 L1596.8 552.1" fill="none" stroke="#fcd2a0" stroke-width="1.2"/><path d="M1813.0 563.0 C1814.1 567.4 1818.9 581.2 1819.6 589.2 C1820.3 597.2 1818.5 604.5 1817.4 611.1 C1816.3 617.6 1813.8 625.6 1813.0 628.5" fill="none" stroke="#fcd2a0" stroke-width="1.2"/><path d="M1575.7 651.0 C1576.4 652.4 1573.6 658.0 1579.9 659.4 C1586.2 660.8 1604.4 658.3 1613.5 659.4 C1622.6 660.4 1625.7 664.8 1634.5 665.7 C1643.2 666.6 1657.9 663.6 1666.0 664.6 C1674.0 665.7 1677.2 669.7 1682.8 672.0 C1688.4 674.3 1692.6 677.2 1699.6 678.3 C1706.6 679.3 1717.1 677.2 1724.8 678.3 C1732.5 679.3 1736.7 683.5 1745.8 684.6 C1754.9 685.6 1773.8 684.6 1779.4 684.6" fill="none" stroke="#fcd2a0" stroke-width="1.2"/><path d="M1745.8 684.6 C1746.1 685.6 1749.3 687.7 1747.9 690.9 C1746.5 694.0 1740.9 698.6 1737.4 703.5 C1733.9 708.4 1729.0 716.4 1726.9 720.3 C1724.8 724.1 1725.1 721.3 1724.8 726.6 C1724.4 731.8 1721.6 747.2 1724.8 751.8 C1727.9 756.3 1740.9 750.4 1743.7 753.9 C1746.5 757.4 1740.2 767.5 1741.6 772.8 C1743.0 778.0 1747.2 781.5 1752.1 785.4 C1757.0 789.2 1765.0 793.8 1771.0 795.9 C1776.9 798.0 1785.0 797.6 1787.8 798.0" fill="none" stroke="#fcd2a0" stroke-width="1.2"/><path d="M1666.0 703.5 C1667.4 706.6 1670.9 718.9 1674.4 722.4 C1677.9 725.9 1682.8 723.1 1687.0 724.5 C1691.2 725.9 1694.3 731.5 1699.6 730.8 C1704.8 730.1 1713.9 721.7 1718.5 720.3 C1723.0 718.9 1725.5 722.0 1726.9 722.4" fill="none" stroke="#fcd2a0" stroke-width="1.2"/><path d="M1787.8 688.8 C1789.2 690.9 1790.9 698.6 1796.2 701.4 C1801.4 704.2 1811.2 703.5 1819.3 705.6 C1827.3 707.7 1835.7 711.5 1844.5 714.0 C1853.3 716.4 1867.4 719.2 1872.0 720.3" fill="none" stroke="#fcd2a0" stroke-width="1.2"/><path d="M1577.8 686.7 C1578.1 689.5 1578.1 694.7 1579.9 703.5 C1581.6 712.2 1585.1 732.9 1588.3 739.2 C1591.4 745.5 1596.7 742.7 1598.8 741.3 C1600.9 739.9 1597.4 735.0 1600.9 730.8 C1604.4 726.6 1616.6 718.5 1619.8 716.1" fill="none" stroke="#fcd2a0" stroke-width="1.2"/><path d="M1495.0 718.3 C1496.5 720.1 1501.0 724.5 1504.3 728.8 C1507.6 733.1 1510.9 738.9 1514.8 743.9 C1518.7 749.0 1523.1 752.4 1527.6 759.1 C1532.1 765.8 1539.3 779.9 1541.6 784.0" fill="none" stroke="#fcd2a0" stroke-width="1.2"/><path d="M1479.8 753.3 C1481.6 752.3 1486.8 747.8 1490.3 747.4 C1493.8 747.1 1496.9 750.5 1500.8 750.9 C1504.7 751.3 1511.3 750.9 1513.6 749.8 C1515.9 748.6 1514.6 744.9 1514.8 743.9" fill="none" stroke="#fcd2a0" stroke-width="1.2"/><path d="M1513.6 749.8 C1513.2 751.5 1509.3 758.5 1511.3 760.3 C1513.2 762.0 1522.9 760.3 1525.3 760.3" fill="none" stroke="#fcd2a0" stroke-width="1.2"/><path d="M1511.3 760.3 C1510.9 762.2 1510.1 768.0 1509.0 771.9 C1507.8 775.9 1505.1 782.0 1504.3 784.0" fill="none" stroke="#fcd2a0" stroke-width="1.2"/><path d="M1328.0 688.0 C1328.6 689.2 1329.7 692.9 1331.5 695.0 C1333.2 697.1 1335.0 697.5 1338.5 700.8 C1342.0 704.1 1347.6 710.1 1352.4 714.8 C1357.3 719.5 1363.1 728.8 1367.6 728.8 C1372.1 728.8 1377.3 717.1 1379.3 714.8" fill="none" stroke="#fcd2a0" stroke-width="1.2"/><path d="M1367.6 728.8 C1366.8 730.5 1364.9 735.8 1362.9 739.3 C1361.0 742.8 1359.2 746.7 1355.9 749.8 C1352.6 752.9 1346.4 754.6 1343.1 757.9 C1339.8 761.2 1340.4 765.2 1336.1 769.6 C1331.9 773.9 1320.6 781.6 1317.5 784.0" fill="none" stroke="#fcd2a0" stroke-width="1.2"/><path d="M1435.2 735.8 C1434.2 737.5 1430.9 742.2 1429.4 746.3 C1427.8 750.4 1427.2 754.0 1425.9 760.3 C1424.5 766.6 1422.0 780.1 1421.2 784.0" fill="none" stroke="#fcd2a0" stroke-width="1.2"/><path d="M1289.2 707.4 C1292.4 710.6 1301.0 722.4 1308.5 726.7 C1315.9 730.9 1327.2 728.8 1334.1 733.1 C1341.0 737.4 1343.7 747.0 1350.1 752.3 C1356.5 757.6 1364.6 764.1 1372.6 765.1 C1380.6 766.2 1389.7 763.0 1398.2 758.7 C1406.8 754.4 1419.6 742.7 1423.8 739.5" fill="none" stroke="#fcd2a0" stroke-width="1.2"/><path d="M1472.8 739.5 C1473.9 743.8 1475.0 757.6 1479.2 765.1 C1483.5 772.6 1492.6 776.9 1498.5 784.4 C1504.3 791.8 1510.2 803.4 1514.5 810.0 C1518.8 816.6 1522.5 821.8 1524.1 824.1" fill="none" stroke="#fcd2a0" stroke-width="1.2"/><path d="M1249.5 321.4 C1247.8 322.8 1243.0 327.3 1239.2 329.7 C1235.4 332.2 1232.3 332.5 1226.7 336.0 C1221.2 339.4 1212.2 346.3 1206.0 350.5 C1199.8 354.6 1193.9 358.1 1189.4 360.9 C1184.9 363.6 1181.6 364.7 1179.0 367.1 C1176.4 369.5 1175.2 371.2 1173.8 375.4 C1172.4 379.5 1172.6 386.8 1170.7 392.0 C1168.8 397.2 1165.5 401.0 1162.4 406.5 C1159.3 412.0 1155.8 419.0 1152.0 425.2 C1148.2 431.4 1142.2 437.6 1139.6 443.9 C1137.0 450.1 1137.2 456.5 1136.5 462.5 C1135.8 468.5 1136.0 475.0 1135.4 480.0 C1134.9 484.9 1134.7 487.9 1133.4 492.4 C1132.0 497.0 1128.7 501.6 1127.1 507.0 C1125.6 512.3 1124.4 518.7 1124.0 524.6 C1123.7 530.5 1124.9 536.5 1125.1 542.2 C1125.2 547.9 1126.4 553.3 1125.1 558.8 C1123.7 564.4 1119.5 569.9 1116.8 575.4 C1114.0 581.0 1110.5 587.2 1108.5 592.0 C1106.4 596.9 1105.2 600.3 1104.3 604.5 C1103.5 608.6 1102.9 612.8 1103.3 616.9 C1103.6 621.1 1104.8 625.2 1106.4 629.4 C1107.9 633.5 1109.8 638.2 1112.6 641.8 C1115.4 645.4 1118.3 648.0 1123.0 651.0 C1127.7 653.9 1135.7 656.9 1140.8 659.4 C1145.8 661.9 1150.6 662.5 1153.4 665.7 C1156.2 668.8 1155.5 674.8 1157.6 678.3 C1159.7 681.8 1164.7 682.1 1166.0 686.7 C1167.2 691.2 1165.6 700.0 1164.9 705.6 C1164.2 711.2 1163.0 714.7 1161.8 720.3 C1160.5 725.9 1158.4 732.5 1157.6 739.2 C1156.7 745.8 1157.6 755.3 1156.5 760.2 C1155.5 765.1 1150.9 766.1 1151.3 768.6 C1151.6 771.0 1155.5 772.1 1158.6 774.9 C1161.8 777.7 1165.4 780.8 1170.2 785.4 C1174.9 789.9 1181.0 796.6 1187.0 802.2 C1192.9 807.8 1201.3 815.3 1205.9 819.0 C1210.4 822.6 1212.9 823.2 1214.3 824.0" fill="none" stroke="#fbb053" stroke-width="2.3" stroke-linecap="round"/><path d="M1210.1 306.9 C1211.9 310.0 1217.6 320.8 1220.5 325.6 C1223.4 330.4 1225.7 331.8 1227.8 336.0 C1229.8 340.1 1231.4 346.3 1232.9 350.5 C1234.5 354.6 1234.7 357.8 1237.1 360.9 C1239.5 364.0 1243.0 366.1 1247.5 369.2 C1252.0 372.3 1257.8 375.4 1264.1 379.5 C1270.3 383.7 1278.6 389.9 1284.8 394.1 C1291.0 398.2 1296.9 401.7 1301.4 404.4 C1305.9 407.2 1308.7 408.6 1311.8 410.7 C1314.9 412.7 1317.0 415.2 1320.1 416.9 C1323.2 418.6 1327.1 419.2 1330.5 421.0 C1333.8 422.9 1336.4 424.8 1340.0 428.0 C1343.6 431.2 1348.3 435.5 1352.0 440.0 C1355.7 444.5 1359.3 450.0 1362.0 455.0 C1364.7 460.0 1365.0 466.2 1368.0 470.0 C1371.0 473.8 1378.0 476.7 1380.0 478.0" fill="none" stroke="#fbb053" stroke-width="2.3" stroke-linecap="round"/><path d="M1257.8 321.4 C1259.6 323.2 1264.4 327.7 1268.2 331.8 C1272.0 336.0 1277.9 341.8 1280.7 346.3 C1283.4 350.8 1283.4 354.6 1284.8 358.8 C1286.2 362.9 1286.9 366.7 1289.0 371.2 C1291.0 375.7 1294.5 380.9 1297.3 385.8 C1300.0 390.6 1303.1 396.1 1305.6 400.3 C1308.0 404.4 1310.7 408.9 1311.8 410.7" fill="none" stroke="#fbb053" stroke-width="2.3" stroke-linecap="round"/><path d="M1249.5 321.4 C1250.4 320.4 1253.3 315.2 1254.7 315.2 C1256.1 315.2 1257.3 320.4 1257.8 321.4" fill="none" stroke="#fbb053" stroke-width="2.3" stroke-linecap="round"/><path d="M1039.0 496.2 C1042.6 497.5 1054.3 501.4 1060.7 503.9 C1067.1 506.3 1071.8 508.2 1077.3 511.1 C1082.9 514.1 1089.1 519.2 1093.9 521.5 C1098.8 523.7 1098.1 522.7 1106.4 524.6 C1114.7 526.5 1133.4 531.5 1143.7 532.9 C1154.1 534.3 1162.4 530.7 1168.6 532.9 C1174.9 535.2 1177.3 542.1 1181.1 546.4 C1184.9 550.7 1187.3 556.6 1191.5 558.8 C1195.6 561.1 1201.5 560.0 1206.0 559.9 C1210.5 559.7 1213.9 557.3 1218.4 557.8 C1222.9 558.3 1227.8 561.3 1232.9 563.0 C1238.1 564.7 1244.7 567.3 1249.5 568.2 C1254.4 569.0 1258.2 569.4 1262.0 568.2 C1265.8 567.0 1268.6 563.9 1272.4 560.9 C1276.2 558.0 1280.7 553.3 1284.8 550.5 C1289.0 547.8 1292.8 545.0 1297.3 544.3 C1301.8 543.6 1306.9 544.8 1311.8 546.4 C1316.6 547.9 1321.6 552.3 1326.3 553.7 C1331.0 555.0 1337.7 554.5 1340.0 554.7" fill="none" stroke="#fbb053" stroke-width="2.3" stroke-linecap="round"/><path d="M1039.0 729.9 C1046.1 728.7 1067.8 725.0 1082.0 722.4 C1096.2 719.7 1110.3 717.0 1124.0 714.0 C1137.6 711.0 1152.7 706.6 1163.9 704.5 C1175.1 702.4 1182.1 703.3 1191.2 701.4 C1200.3 699.5 1208.7 695.1 1218.5 693.0 C1228.3 690.9 1241.2 691.6 1250.0 688.8 C1258.7 686.0 1263.2 680.4 1270.9 676.2 C1278.6 672.0 1290.5 667.8 1296.1 663.6 C1301.7 659.4 1302.2 654.9 1304.5 651.0 C1306.8 647.1 1307.1 644.8 1310.0 640.0 C1312.9 635.2 1318.5 628.7 1322.0 622.0 C1325.5 615.3 1329.5 603.7 1331.0 600.0" fill="none" stroke="#fbb053" stroke-width="2.3" stroke-linecap="round"/><path d="M1117.7 824.0 C1120.5 821.1 1127.7 814.6 1134.5 806.4 C1141.3 798.2 1149.9 782.2 1158.6 774.9 C1167.4 767.5 1177.0 766.5 1187.0 762.3 C1196.9 758.1 1208.0 754.2 1218.5 749.7 C1229.0 745.1 1239.5 739.9 1250.0 735.0 C1260.4 730.1 1270.9 725.5 1281.4 720.3 C1291.9 715.0 1303.2 708.0 1312.9 703.5 C1322.7 698.9 1333.5 695.9 1340.0 693.0 C1346.5 690.1 1346.7 688.5 1352.0 686.0 C1357.3 683.5 1368.7 679.3 1372.0 678.0" fill="none" stroke="#fbb053" stroke-width="2.3" stroke-linecap="round"/><path d="M1241.6 689.8 C1241.9 686.9 1240.9 676.0 1243.7 672.0 C1246.5 668.0 1254.9 668.1 1258.3 665.7 C1261.8 663.2 1263.8 659.7 1264.6 657.3 C1265.5 654.8 1264.0 653.9 1263.6 651.0 C1263.2 648.1 1263.4 645.2 1262.0 640.0 C1260.6 634.8 1256.2 623.3 1255.0 620.0" fill="none" stroke="#fbb053" stroke-width="2.3" stroke-linecap="round"/><path d="M1589.0 308.0 C1587.2 309.9 1581.5 315.7 1578.6 319.4 C1575.7 323.0 1573.1 325.3 1571.3 329.7 C1569.6 334.2 1569.4 340.8 1568.2 346.3 C1567.0 351.9 1565.4 357.4 1564.1 362.9 C1562.7 368.5 1561.0 374.0 1559.9 379.5 C1558.9 385.1 1559.2 391.6 1557.8 396.1 C1556.5 400.6 1554.7 402.7 1551.6 406.5 C1548.5 410.3 1542.6 414.5 1539.2 419.0 C1535.7 423.5 1533.6 428.3 1530.9 433.5 C1528.1 438.7 1526.0 445.2 1522.6 450.1 C1519.1 454.9 1514.3 458.7 1510.1 462.5 C1506.0 466.3 1501.1 470.0 1497.7 472.9 C1494.2 475.8 1490.8 478.8 1489.4 480.0" fill="none" stroke="#fbb053" stroke-width="2.3" stroke-linecap="round"/><path d="M1603.5 308.0 C1605.6 309.2 1611.8 313.7 1615.9 315.2 C1620.1 316.8 1625.1 315.9 1628.4 317.3 C1631.7 318.7 1633.7 321.4 1635.6 323.5 C1637.6 325.6 1635.9 326.4 1640.0 330.0 C1644.1 333.6 1656.7 342.5 1660.0 345.0" fill="none" stroke="#fbb053" stroke-width="2.3" stroke-linecap="round"/><path d="M1544.4 561.9 C1547.3 561.0 1554.6 558.5 1561.8 556.5 C1569.1 554.5 1579.7 551.5 1588.1 549.9 C1596.4 548.3 1604.1 547.9 1612.1 546.6 C1620.1 545.3 1626.3 543.5 1636.1 542.3 C1645.9 541.0 1654.3 540.3 1671.1 539.0 C1687.8 537.7 1714.7 537.2 1736.6 534.6 C1758.4 532.1 1783.9 528.1 1802.1 523.7 C1820.3 519.3 1834.2 512.0 1845.8 508.4 C1857.5 504.8 1867.7 502.9 1872.0 501.8" fill="none" stroke="#fbb053" stroke-width="2.3" stroke-linecap="round"/><path d="M1726.8 545.5 C1726.8 547.4 1726.9 552.1 1726.8 556.5 C1726.6 560.8 1726.8 567.4 1725.7 571.7 C1724.5 576.1 1720.8 579.4 1719.8 582.7 C1718.8 585.9 1721.3 589.2 1719.8 591.4 C1718.2 593.6 1714.1 594.3 1710.4 595.8 C1706.6 597.2 1699.5 599.4 1697.3 600.1" fill="none" stroke="#fbb053" stroke-width="2.3" stroke-linecap="round"/><path d="M1872.0 563.0 C1869.5 564.8 1861.1 569.6 1856.7 573.9 C1852.4 578.3 1848.4 583.0 1845.8 589.2 C1843.3 595.4 1845.1 604.9 1841.4 611.1 C1837.8 617.3 1829.4 622.0 1824.0 626.4 C1818.5 630.7 1813.0 632.9 1808.7 637.3 C1804.3 641.6 1800.7 648.8 1797.8 652.6 C1794.8 656.4 1791.1 660.3 1791.2 660.0 C1791.3 659.7 1798.9 650.7 1798.3 651.0 C1797.7 651.3 1790.9 658.0 1787.8 661.5 C1784.6 665.0 1780.4 667.4 1779.4 672.0 C1778.3 676.5 1779.7 683.2 1781.5 688.8 C1783.2 694.4 1787.4 698.6 1789.9 705.6 C1792.3 712.6 1794.3 721.7 1796.2 730.8 C1798.1 739.9 1801.1 752.5 1801.4 760.2 C1801.8 767.9 1800.6 770.7 1798.3 777.0 C1796.0 783.3 1792.3 791.0 1787.8 798.0 C1783.2 805.0 1774.5 814.4 1771.0 819.0 C1767.5 823.5 1767.5 824.2 1766.8 825.3" fill="none" stroke="#fbb053" stroke-width="2.3" stroke-linecap="round"/><path d="M1546.0 640.0 C1547.1 641.8 1549.0 647.1 1552.6 651.0 C1556.1 654.9 1561.3 658.0 1567.3 663.6 C1573.2 669.2 1581.3 679.0 1588.3 684.6 C1595.3 690.2 1604.0 693.3 1609.3 697.2 C1614.5 701.0 1616.6 703.1 1619.8 707.7 C1622.9 712.2 1624.7 718.9 1628.2 724.5 C1631.7 730.1 1635.9 735.3 1640.8 741.3 C1645.7 747.2 1652.0 754.2 1657.6 760.2 C1663.2 766.1 1669.5 771.0 1674.4 777.0 C1679.3 782.9 1682.8 789.9 1687.0 795.9 C1691.2 801.8 1696.1 807.8 1699.6 812.7 C1703.1 817.6 1706.6 823.2 1708.0 825.3" fill="none" stroke="#fbb053" stroke-width="2.3" stroke-linecap="round"/><path d="M1470.0 730.0 C1470.5 731.4 1472.5 735.2 1472.8 738.1 C1473.1 741.0 1470.9 744.9 1471.7 747.4 C1472.5 749.9 1476.0 749.6 1477.5 753.3 C1479.0 757.0 1479.2 764.5 1481.0 769.6 C1482.8 774.7 1484.5 774.6 1488.0 784.0 C1491.5 793.4 1499.7 819.0 1502.0 826.0" fill="none" stroke="#fbb053" stroke-width="2.3" stroke-linecap="round"/><path d="M1435.8 736.0 C1436.0 738.7 1436.3 744.0 1437.0 752.0 C1437.7 760.0 1438.7 771.7 1439.9 784.0 C1441.1 796.3 1443.3 819.0 1444.0 826.0" fill="none" stroke="#fbb053" stroke-width="2.3" stroke-linecap="round"/></svg>
<div class="abs" style="left:1040px;top:309px;width:832px;height:515px;overflow:hidden"><div class="abs" style="left:-1040px;top:-309px;width:1899px;height:824px">
<svg style="left:0;top:0" width="1899" height="824"><circle cx="1187.3" cy="328.1" r="2.1" fill="#fff" stroke="#6e6e6e" stroke-width="1"/><circle cx="1259.3" cy="392.0" r="2.1" fill="#fff" stroke="#6e6e6e" stroke-width="1"/><circle cx="1097.5" cy="454.9" r="2.1" fill="#fff" stroke="#6e6e6e" stroke-width="1"/><circle cx="1377.3" cy="375.8" r="2.1" fill="#fff" stroke="#6e6e6e" stroke-width="1"/><circle cx="1547.5" cy="375.8" r="2.1" fill="#fff" stroke="#6e6e6e" stroke-width="1"/><circle cx="1496.6" cy="458.4" r="2.1" fill="#fff" stroke="#6e6e6e" stroke-width="1"/><circle cx="1612.4" cy="449.7" r="2.1" fill="#fff" stroke="#6e6e6e" stroke-width="1"/><circle cx="1364.1" cy="475.2" r="2.1" fill="#fff" stroke="#6e6e6e" stroke-width="1"/><circle cx="1216.3" cy="499.1" r="2.1" fill="#fff" stroke="#6e6e6e" stroke-width="1"/><circle cx="1241.2" cy="514.9" r="2.1" fill="#fff" stroke="#6e6e6e" stroke-width="1"/><circle cx="1306.6" cy="530.8" r="2.1" fill="#fff" stroke="#6e6e6e" stroke-width="1"/><circle cx="1095.0" cy="604.1" r="2.1" fill="#fff" stroke="#6e6e6e" stroke-width="1"/><circle cx="1281.3" cy="644.9" r="2.1" fill="#fff" stroke="#6e6e6e" stroke-width="1"/><circle cx="1180.7" cy="708.1" r="2.1" fill="#fff" stroke="#6e6e6e" stroke-width="1"/><circle cx="1194.7" cy="753.2" r="2.1" fill="#fff" stroke="#6e6e6e" stroke-width="1"/><circle cx="1300.8" cy="801.1" r="2.1" fill="#fff" stroke="#6e6e6e" stroke-width="1"/><circle cx="1319.2" cy="707.2" r="2.1" fill="#fff" stroke="#6e6e6e" stroke-width="1"/><circle cx="1378.1" cy="732.9" r="2.1" fill="#fff" stroke="#6e6e6e" stroke-width="1"/><circle cx="1588.5" cy="549.9" r="2.1" fill="#fff" stroke="#6e6e6e" stroke-width="1"/><circle cx="1550.3" cy="579.0" r="2.1" fill="#fff" stroke="#6e6e6e" stroke-width="1"/><circle cx="1620.4" cy="590.7" r="2.1" fill="#fff" stroke="#6e6e6e" stroke-width="1"/><circle cx="1714.1" cy="615.0" r="2.1" fill="#fff" stroke="#6e6e6e" stroke-width="1"/><circle cx="1568.0" cy="647.1" r="2.1" fill="#fff" stroke="#6e6e6e" stroke-width="1"/><circle cx="1671.2" cy="711.3" r="2.1" fill="#fff" stroke="#6e6e6e" stroke-width="1"/><circle cx="1575.3" cy="724.9" r="2.1" fill="#fff" stroke="#6e6e6e" stroke-width="1"/><circle cx="1719.1" cy="735.0" r="2.1" fill="#fff" stroke="#6e6e6e" stroke-width="1"/><circle cx="1829.2" cy="708.7" r="2.1" fill="#fff" stroke="#6e6e6e" stroke-width="1"/><circle cx="1844.3" cy="719.9" r="2.1" fill="#fff" stroke="#6e6e6e" stroke-width="1"/><circle cx="1816.8" cy="820.7" r="2.1" fill="#fff" stroke="#6e6e6e" stroke-width="1"/><circle cx="1484.1" cy="743.0" r="2.1" fill="#fff" stroke="#6e6e6e" stroke-width="1"/><circle cx="1819.2" cy="560.2" r="2.1" fill="#fff" stroke="#6e6e6e" stroke-width="1"/><circle cx="1388.8" cy="314.0" r="2.1" fill="#fff" stroke="#6e6e6e" stroke-width="1"/><rect x="1247.7" y="308.2" width="14" height="14" rx="2.5" fill="#fb7a33"/><rect x="1304.8" y="402.6" width="14" height="14" rx="2.5" fill="#fb7a33"/><rect x="1321.6" y="596.4" width="14" height="14" rx="2.5" fill="#fb7a33"/><rect x="1206.6" y="815.3" width="14" height="14" rx="2.5" fill="#fb7a33"/><rect x="1712.8" y="580.5" width="14" height="14" rx="2.5" fill="#fb7a33"/><rect x="1596.5" y="300.0" width="14" height="14" rx="2.5" fill="#fb7a33"/><rect x="1341.8" y="385.5" width="15" height="15" rx="3" fill="#3f7fe8"/><g transform="translate(1349.3 393.0) rotate(45) scale(0.62)"><path d="M0 -8 C1.3 -8 1.6 -6 1.6 -4.5 L1.6 -2 L8 2.2 L8 4 L1.6 1.8 L1.4 5.5 L3.6 7.2 L3.6 8.4 L0 7.4 L-3.6 8.4 L-3.6 7.2 L-1.4 5.5 L-1.6 1.8 L-8 4 L-8 2.2 L-1.6 -2 L-1.6 -4.5 C-1.6 -6 -1.3 -8 0 -8 Z" fill="#fff"/></g><rect x="1283.8" y="689.3" width="15" height="15" rx="3" fill="#3f7fe8"/><g transform="translate(1291.3 696.8) rotate(45) scale(0.62)"><path d="M0 -8 C1.3 -8 1.6 -6 1.6 -4.5 L1.6 -2 L8 2.2 L8 4 L1.6 1.8 L1.4 5.5 L3.6 7.2 L3.6 8.4 L0 7.4 L-3.6 8.4 L-3.6 7.2 L-1.4 5.5 L-1.6 1.8 L-8 4 L-8 2.2 L-1.6 -2 L-1.6 -4.5 C-1.6 -6 -1.3 -8 0 -8 Z" fill="#fff"/></g><rect x="1663.1" y="724.3" width="15" height="15" rx="3" fill="#3f7fe8"/><g transform="translate(1670.6 731.8) rotate(45) scale(0.62)"><path d="M0 -8 C1.3 -8 1.6 -6 1.6 -4.5 L1.6 -2 L8 2.2 L8 4 L1.6 1.8 L1.4 5.5 L3.6 7.2 L3.6 8.4 L0 7.4 L-3.6 8.4 L-3.6 7.2 L-1.4 5.5 L-1.6 1.8 L-8 4 L-8 2.2 L-1.6 -2 L-1.6 -4.5 C-1.6 -6 -1.3 -8 0 -8 Z" fill="#fff"/></g><rect x="1386.7" y="770.2" width="15" height="15" rx="3" fill="#3f7fe8"/><g transform="translate(1394.2 777.7) rotate(45) scale(0.62)"><path d="M0 -8 C1.3 -8 1.6 -6 1.6 -4.5 L1.6 -2 L8 2.2 L8 4 L1.6 1.8 L1.4 5.5 L3.6 7.2 L3.6 8.4 L0 7.4 L-3.6 8.4 L-3.6 7.2 L-1.4 5.5 L-1.6 1.8 L-8 4 L-8 2.2 L-1.6 -2 L-1.6 -4.5 C-1.6 -6 -1.3 -8 0 -8 Z" fill="#fff"/></g><rect x="1145.4" y="395.8" width="36" height="14" rx="2.5" fill="#4d8cea"/><rect x="1105.9" y="521.8" width="37" height="14" rx="2.5" fill="#4d8cea"/></svg>
<div class="t " id="t_Lpov" style="left:1155.6px;transform-origin:0 50%;top:309.4px;font-size:13px;transform:scaleX(1.071);color:#555;text-shadow:0 0 2px #fff,0 0 2px #fff,0 0 3px #fff,1px 0 1px #fff,-1px 0 1px #fff,0 1px 1px #fff,0 -1px 1px #fff;">Поварово</div>
<div class="t " id="t_Lzel" style="left:1212.2px;transform-origin:0 50%;top:370.8px;font-size:14.8px;transform:scaleX(1.094);font-weight:700;color:#3b3b3b;text-shadow:0 0 2px #fff,0 0 2px #fff,0 0 3px #fff,1px 0 1px #fff,-1px 0 1px #fff,0 1px 1px #fff,0 -1px 1px #fff;">Зеленоград</div>
<div class="t " id="t_List" style="left:1075.7px;transform-origin:0 50%;top:435.1px;font-size:14px;transform:scaleX(1.104);color:#555;text-shadow:0 0 2px #fff,0 0 2px #fff,0 0 3px #fff,1px 0 1px #fff,-1px 0 1px #fff,0 1px 1px #fff,0 -1px 1px #fff;">Истра</div>
<div class="t " id="t_Llob" style="left:1355.6px;transform-origin:0 50%;top:357.8px;font-size:13.5px;transform:scaleX(1.158);color:#555;text-shadow:0 0 2px #fff,0 0 2px #fff,0 0 3px #fff,1px 0 1px #fff,-1px 0 1px #fff,0 1px 1px #fff,0 -1px 1px #fff;">Лобня</div>
<div class="t med" id="t_Lpus" style="left:1511.2px;transform-origin:0 50%;top:354.0px;font-size:15px;transform:scaleX(1.149);color:#3d3d3d;text-shadow:0 0 2px #fff,0 0 2px #fff,0 0 3px #fff,1px 0 1px #fff,-1px 0 1px #fff,0 1px 1px #fff,0 -1px 1px #fff;">Пушкино</div>
<div class="t " id="t_Lmyt" style="left:1462.8px;transform-origin:0 50%;top:436.8px;font-size:15px;transform:scaleX(1.062);font-weight:700;color:#3b3b3b;text-shadow:0 0 2px #fff,0 0 2px #fff,0 0 3px #fff,1px 0 1px #fff,-1px 0 1px #fff,0 1px 1px #fff,0 -1px 1px #fff;">Мытищи</div>
<div class="t " id="t_Lsch" style="left:1577.6px;transform-origin:0 50%;top:428.5px;font-size:15px;transform:scaleX(1.023);font-weight:700;color:#3b3b3b;text-shadow:0 0 2px #fff,0 0 2px #fff,0 0 3px #fff,1px 0 1px #fff,-1px 0 1px #fff,0 1px 1px #fff,0 -1px 1px #fff;">Щёлково</div>
<div class="t " id="t_Lhim" style="left:1340.2px;transform-origin:0 50%;top:452.6px;font-size:15px;transform:scaleX(1.052);font-weight:700;color:#3b3b3b;text-shadow:0 0 2px #fff,0 0 2px #fff,0 0 3px #fff,1px 0 1px #fff,-1px 0 1px #fff,0 1px 1px #fff,0 -1px 1px #fff;">Химки</div>
<div class="t " id="t_Lded" style="left:1185.2px;transform-origin:0 50%;top:479.5px;font-size:14px;transform:scaleX(1.159);color:#555;text-shadow:0 0 2px #fff,0 0 2px #fff,0 0 3px #fff,1px 0 1px #fff,-1px 0 1px #fff,0 1px 1px #fff,0 -1px 1px #fff;">Дедовск</div>
<div class="t " id="t_Lnah" style="left:1165.5px;transform-origin:0 50%;top:509.6px;font-size:14px;transform:scaleX(1.105);color:#555;text-shadow:0 0 2px #fff,0 0 2px #fff,0 0 3px #fff,1px 0 1px #fff,-1px 0 1px #fff,0 1px 1px #fff,0 -1px 1px #fff;">Нахабино</div>
<div class="t " id="t_Lkra" style="left:1256.7px;transform-origin:0 50%;top:508.8px;font-size:15px;transform:scaleX(1.065);font-weight:700;color:#3b3b3b;text-shadow:0 0 2px #fff,0 0 2px #fff,0 0 3px #fff,1px 0 1px #fff,-1px 0 1px #fff,0 1px 1px #fff,0 -1px 1px #fff;">Красногорск</div>
<div class="t " id="t_Lzve" style="left:1051.4px;transform-origin:0 50%;top:584.3px;font-size:14px;transform:scaleX(1.160);color:#555;text-shadow:0 0 2px #fff,0 0 2px #fff,0 0 3px #fff,1px 0 1px #fff,-1px 0 1px #fff,0 1px 1px #fff,0 -1px 1px #fff;">Звенигород</div>
<div class="t med" id="t_Lodi" style="left:1242.3px;transform-origin:0 50%;top:622.9px;font-size:15px;transform:scaleX(1.115);color:#3d3d3d;text-shadow:0 0 2px #fff,0 0 2px #fff,0 0 3px #fff,1px 0 1px #fff,-1px 0 1px #fff,0 1px 1px #fff,0 -1px 1px #fff;">Одинцово</div>
<div class="t " id="t_Lkrz" style="left:1119.8px;transform-origin:0 50%;top:688.4px;font-size:14px;transform:scaleX(1.146);color:#555;text-shadow:0 0 2px #fff,0 0 2px #fff,0 0 3px #fff,1px 0 1px #fff,-1px 0 1px #fff,0 1px 1px #fff,0 -1px 1px #fff;">Краснознаменск</div>
<div class="t " id="t_Lapr" style="left:1156.5px;transform-origin:0 50%;top:732.9px;font-size:14px;transform:scaleX(1.116);color:#555;text-shadow:0 0 2px #fff,0 0 2px #fff,0 0 3px #fff,1px 0 1px #fff,-1px 0 1px #fff,0 1px 1px #fff,0 -1px 1px #fff;">Апрелевка</div>
<div class="t " id="t_Ltro" style="left:1276.2px;transform-origin:0 50%;top:781.4px;font-size:14px;transform:scaleX(1.112);color:#555;text-shadow:0 0 2px #fff,0 0 2px #fff,0 0 3px #fff,1px 0 1px #fff,-1px 0 1px #fff,0 1px 1px #fff,0 -1px 1px #fff;">Троицк</div>
<div class="t " id="t_Lkub" style="left:996.0px;transform-origin:0 50%;top:708.4px;font-size:14px;transform:scaleX(1.073);color:#555;text-shadow:0 0 2px #fff,0 0 2px #fff,0 0 3px #fff,1px 0 1px #fff,-1px 0 1px #fff,0 1px 1px #fff,0 -1px 1px #fff;">Кубинка</div>
<div class="t " id="t_Lmos" style="left:1323.9px;transform-origin:0 50%;top:701.4px;font-size:14.4px;transform:scaleX(1.130);color:#555;text-shadow:0 0 2px #fff,0 0 2px #fff,0 0 3px #fff,1px 0 1px #fff,-1px 0 1px #fff,0 1px 1px #fff,0 -1px 1px #fff;">Московский</div>
<div class="t " id="t_Lkom" style="left:1332.0px;transform-origin:0 50%;top:736.4px;font-size:14.4px;transform:scaleX(1.108);color:#555;text-shadow:0 0 2px #fff,0 0 2px #fff,0 0 3px #fff,1px 0 1px #fff,-1px 0 1px #fff,0 1px 1px #fff,0 -1px 1px #fff;">Коммунарка</div>
<div class="t " id="t_Lbal" style="left:1549.2px;transform-origin:0 50%;top:529.6px;font-size:15px;transform:scaleX(1.037);font-weight:700;color:#3b3b3b;text-shadow:0 0 2px #fff,0 0 2px #fff,0 0 3px #fff,1px 0 1px #fff,-1px 0 1px #fff,0 1px 1px #fff,0 -1px 1px #fff;">Балашиха</div>
<div class="t med" id="t_Lreu" style="left:1524.7px;transform-origin:0 50%;top:556.7px;font-size:15px;transform:scaleX(1.080);color:#3d3d3d;text-shadow:0 0 2px #fff,0 0 2px #fff,0 0 3px #fff,1px 0 1px #fff,-1px 0 1px #fff,0 1px 1px #fff,0 -1px 1px #fff;">Реутов</div>
<div class="t " id="t_Lzhe" style="left:1544.4px;transform-origin:0 50%;top:596.2px;font-size:15px;transform:scaleX(1.065);font-weight:700;color:#3b3b3b;text-shadow:0 0 2px #fff,0 0 2px #fff,0 0 3px #fff,1px 0 1px #fff,-1px 0 1px #fff,0 1px 1px #fff,0 -1px 1px #fff;">Железнодорожный</div>
<div class="t " id="t_Lele" style="left:1719.6px;transform-origin:0 50%;top:607.5px;font-size:14px;transform:scaleX(1.147);color:#555;text-shadow:0 0 2px #fff,0 0 2px #fff,0 0 3px #fff,1px 0 1px #fff,-1px 0 1px #fff,0 1px 1px #fff,0 -1px 1px #fff;">Электроугли</div>
<div class="t " id="t_Llub" style="left:1529.9px;transform-origin:0 50%;top:625.3px;font-size:15px;transform:scaleX(1.062);font-weight:700;color:#3b3b3b;text-shadow:0 0 2px #fff,0 0 2px #fff,0 0 3px #fff,1px 0 1px #fff,-1px 0 1px #fff,0 1px 1px #fff,0 -1px 1px #fff;">Люберцы</div>
<div class="t " id="t_Lzhu" style="left:1627.8px;transform-origin:0 50%;top:688.7px;font-size:15px;transform:scaleX(1.073);font-weight:700;color:#3b3b3b;text-shadow:0 0 2px #fff,0 0 2px #fff,0 0 3px #fff,1px 0 1px #fff,-1px 0 1px #fff,0 1px 1px #fff,0 -1px 1px #fff;">Жуковский</div>
<div class="t " id="t_Llyt" style="left:1534.6px;transform-origin:0 50%;top:704.9px;font-size:14.4px;transform:scaleX(1.110);color:#555;text-shadow:0 0 2px #fff,0 0 2px #fff,0 0 3px #fff,1px 0 1px #fff,-1px 0 1px #fff,0 1px 1px #fff,0 -1px 1px #fff;">Лыткарино</div>
<div class="t med" id="t_Lram" style="left:1725.8px;transform-origin:0 50%;top:728.6px;font-size:15px;transform:scaleX(1.110);color:#3d3d3d;text-shadow:0 0 2px #fff,0 0 2px #fff,0 0 3px #fff,1px 0 1px #fff,-1px 0 1px #fff,0 1px 1px #fff,0 -1px 1px #fff;">Раменское</div>
<div class="t " id="t_Lrec" style="left:1804.6px;transform-origin:0 50%;top:690.8px;font-size:12.5px;transform:scaleX(1.099);color:#555;text-shadow:0 0 2px #fff,0 0 2px #fff,0 0 3px #fff,1px 0 1px #fff,-1px 0 1px #fff,0 1px 1px #fff,0 -1px 1px #fff;">Речицы</div>
<div class="t " id="t_Lbel" style="left:1764.3px;transform-origin:0 50%;top:801.8px;font-size:14px;transform:scaleX(1.135);color:#555;text-shadow:0 0 2px #fff,0 0 2px #fff,0 0 3px #fff,1px 0 1px #fff,-1px 0 1px #fff,0 1px 1px #fff,0 -1px 1px #fff;">Белоозёрский</div>
<div class="t " id="t_Lvid" style="left:1455.0px;transform-origin:0 50%;top:721.3px;font-size:15px;transform:scaleX(1.033);font-weight:700;color:#3b3b3b;text-shadow:0 0 2px #fff,0 0 2px #fff,0 0 3px #fff,1px 0 1px #fff,-1px 0 1px #fff,0 1px 1px #fff,0 -1px 1px #fff;">Видное</div>
<div class="t " id="t_Ldom" style="left:1463.2px;transform-origin:0 50%;top:816.1px;font-size:15px;transform:scaleX(1.036);font-weight:700;color:#3b3b3b;text-shadow:0 0 2px #fff,0 0 2px #fff,0 0 3px #fff,1px 0 1px #fff,-1px 0 1px #fff,0 1px 1px #fff,0 -1px 1px #fff;">Домодедово</div>
<div class="t " id="t_Lels" style="left:1772.0px;transform-origin:0 50%;top:538.3px;font-size:15px;transform:scaleX(0.974);font-weight:700;color:#3b3b3b;text-shadow:0 0 2px #fff,0 0 2px #fff,0 0 3px #fff,1px 0 1px #fff,-1px 0 1px #fff,0 1px 1px #fff,0 -1px 1px #fff;">Электросталь</div>
<div class="t " id="t_Lps1" style="left:1848.7px;transform-origin:0 50%;top:721.9px;font-size:12.5px;transform:scaleX(0.947);color:#555;text-shadow:0 0 2px #fff,0 0 2px #fff,0 0 3px #fff,1px 0 1px #fff,-1px 0 1px #fff,0 1px 1px #fff,0 -1px 1px #fff;">посёлок</div>
<div class="t " id="t_Lps2" style="left:1850.0px;transform-origin:0 50%;top:736.6px;font-size:12.5px;transform:scaleX(0.972);color:#555;text-shadow:0 0 2px #fff,0 0 2px #fff,0 0 3px #fff,1px 0 1px #fff,-1px 0 1px #fff,0 1px 1px #fff,0 -1px 1px #fff;">Электроизолятор</div>
<div class="t " id="t_Lps3" style="left:1856.0px;transform-origin:0 50%;top:773.7px;font-size:12.5px;transform:scaleX(0.941);color:#555;text-shadow:0 0 2px #fff,0 0 2px #fff,0 0 3px #fff,1px 0 1px #fff,-1px 0 1px #fff,0 1px 1px #fff,0 -1px 1px #fff;">посёлок</div>
<div class="t " id="t_Asvo" style="left:1337.3px;transform-origin:0 50%;top:404.0px;font-size:12.5px;transform:scaleX(0.951);color:#4067b0;text-shadow:0 0 2px #fff,0 0 2px #fff,0 0 3px #fff,1px 0 1px #fff,-1px 0 1px #fff,0 1px 1px #fff,0 -1px 1px #fff;">SVO</div>
<div class="t " id="t_Avko" style="left:1279.3px;transform-origin:0 50%;top:708.0px;font-size:12.5px;transform:scaleX(0.973);color:#4067b0;text-shadow:0 0 2px #fff,0 0 2px #fff,0 0 3px #fff,1px 0 1px #fff,-1px 0 1px #fff,0 1px 1px #fff,0 -1px 1px #fff;">VKO</div>
<div class="t " id="t_Azia" style="left:1660.1px;transform-origin:0 50%;top:741.2px;font-size:12.5px;color:#4067b0;text-shadow:0 0 2px #fff,0 0 2px #fff,0 0 3px #fff,1px 0 1px #fff,-1px 0 1px #fff,0 1px 1px #fff,0 -1px 1px #fff;">ZIA</div>
<div class="t " id="t_Aosf" style="left:1381.5px;transform-origin:0 50%;top:790.0px;font-size:12.5px;transform:scaleX(0.973);color:#4067b0;text-shadow:0 0 2px #fff,0 0 2px #fff,0 0 3px #fff,1px 0 1px #fff,-1px 0 1px #fff,0 1px 1px #fff,0 -1px 1px #fff;">OSF</div>
<div class="t " id="t_BA113" style="left:1148.9px;transform-origin:0 50%;top:397.7px;font-size:10.5px;transform:scaleX(1.035);color:#fff;font-weight:700">A-113</div>
<div class="t " id="t_BA107" style="left:1109.4px;transform-origin:0 50%;top:523.7px;font-size:10.5px;transform:scaleX(1.049);color:#fff;font-weight:700">A-107</div>
<div class="t " id="t_R0" style="left:1251.1px;transform-origin:0 50%;top:309.2px;font-size:12.5px;transform:scaleX(1.057);color:#fff;font-weight:700">₽</div>
<div class="t " id="t_R1" style="left:1308.2px;transform-origin:0 50%;top:403.6px;font-size:12.5px;transform:scaleX(1.057);color:#fff;font-weight:700">₽</div>
<div class="t " id="t_R2" style="left:1325.0px;transform-origin:0 50%;top:597.4px;font-size:12.5px;transform:scaleX(1.057);color:#fff;font-weight:700">₽</div>
<div class="t " id="t_R3" style="left:1210.0px;transform-origin:0 50%;top:816.3px;font-size:12.5px;transform:scaleX(1.057);color:#fff;font-weight:700">₽</div>
<div class="t " id="t_R4" style="left:1716.2px;transform-origin:0 50%;top:581.5px;font-size:12.5px;transform:scaleX(1.057);color:#fff;font-weight:700">₽</div>
<div class="t " id="t_R5" style="left:1599.9px;transform-origin:0 50%;top:301.0px;font-size:12.5px;transform:scaleX(1.057);color:#fff;font-weight:700">₽</div>
</div></div>
<svg style="left:1040px;top:309px;overflow:hidden" width="832" height="515" viewBox="1040 309 832 515"><g opacity="0.92" stroke="#fffdf2" stroke-opacity="0.9" stroke-width="0.8" stroke-linejoin="round"><polygon points="1412.0,466.9 1413.6,465.2 1411.1,459.0 1404.9,460.6 1397.0,465.1" fill="#feb05a"/><polygon points="1413.6,465.2 1424.8,463.4 1426.4,458.3 1423.5,457.7 1411.1,459.0" fill="#a3bc49"/><polygon points="1424.8,463.4 1427.2,466.0 1442.6,464.6 1426.4,458.3" fill="#fdc452"/><polygon points="1364.4,481.2 1362.9,481.6 1361.3,482.4 1363.7,482.7" fill="#fdc452"/><polygon points="1364.5,481.9 1379.6,480.2 1396.8,479.8 1395.5,466.2 1379.3,476.9 1364.4,481.2" fill="#fdc452"/><polygon points="1397.0,465.1 1395.5,466.2 1396.8,479.8 1398.8,481.4 1393.6,497.4 1392.8,509.8 1393.4,510.6 1413.2,510.6 1413.7,499.5 1425.8,494.0 1423.9,483.7 1410.3,478.7 1412.0,466.9" fill="#fdc452"/><polygon points="1427.2,466.0 1424.8,463.4 1413.6,465.2 1412.0,466.9 1410.3,478.7 1423.9,483.7 1425.8,494.0 1429.6,495.6 1437.9,494.3 1443.4,480.1 1429.9,475.4" fill="#a3bc49"/><polygon points="1427.2,466.0 1429.9,475.4 1443.4,480.1 1447.9,477.9 1446.9,466.4 1442.6,464.6" fill="#fdc452"/><polygon points="1447.9,477.9 1454.1,480.2 1458.2,478.3 1462.6,469.9 1452.7,468.8 1446.9,466.4" fill="#a3bc49"/><polygon points="1458.2,478.3 1475.7,482.2 1473.6,470.5 1471.7,469.9 1462.6,469.9" fill="#b8c34e"/><polygon points="1475.7,482.3 1471.9,494.9 1479.5,500.6 1490.9,497.4 1491.6,496.4 1487.2,481.0 1487.9,476.9 1479.8,472.3 1473.6,470.5" fill="#fdc452"/><polygon points="1488.0,476.9 1487.2,481.0 1491.6,496.4 1490.9,497.4 1495.4,512.1 1497.0,513.5 1503.9,514.6 1507.0,496.2 1505.5,493.9 1505.8,492.3 1493.8,479.3" fill="#a3bc49"/><polygon points="1340.8,496.0 1346.1,497.6 1362.1,495.8 1363.7,482.7 1361.3,482.4 1355.9,485.1" fill="#fdc452"/><polygon points="1383.5,493.1 1379.0,480.8 1364.5,481.9 1363.7,482.7 1362.5,496.6 1378.8,497.5" fill="#fdc452"/><polygon points="1398.8,481.4 1396.8,479.8 1379.6,480.2 1379.0,480.8 1383.5,493.1 1393.6,497.4" fill="#a3bc49"/><polygon points="1447.9,477.9 1443.4,480.1 1437.9,494.3 1443.9,499.2 1457.3,491.4 1464.8,497.2 1471.9,494.9 1475.7,482.2 1458.2,478.3 1454.1,480.2" fill="#fdc452"/><polygon points="1505.5,493.9 1507.0,496.2 1503.9,514.6 1507.4,524.3 1514.7,529.1 1537.9,524.6 1538.5,523.4 1505.8,492.3" fill="#b8c34e"/><polygon points="1344.3,510.5 1346.1,497.6 1340.8,496.1 1340.8,510.3" fill="#fdc452"/><polygon points="1363.9,509.5 1362.1,495.8 1346.1,497.6 1344.3,510.5 1346.5,513.0 1360.6,514.4" fill="#a3bc49"/><polygon points="1362.5,496.6 1363.9,509.5 1377.3,509.3 1380.3,511.6 1392.8,509.8 1393.6,497.4 1383.5,493.1 1378.8,497.5" fill="#feb05a"/><polygon points="1430.5,512.3 1440.5,512.6 1446.1,506.6 1443.9,499.2 1437.9,494.3 1429.6,495.6 1425.8,494.0 1413.7,499.5 1413.2,510.6 1415.2,514.7 1426.9,515.2" fill="#fdc452"/><polygon points="1457.3,491.4 1443.9,499.2 1446.1,506.6 1440.5,512.6 1443.9,525.0 1457.0,522.9 1458.0,510.5 1460.7,508.5 1464.8,497.2" fill="#fdc452"/><polygon points="1479.4,511.5 1495.4,512.1 1490.9,497.4 1479.5,500.6 1471.9,494.9 1464.8,497.2 1460.7,508.5 1476.7,515.6" fill="#a3bc49"/><polygon points="1341.9,528.5 1346.5,513.0 1344.3,510.5 1340.8,510.3 1340.8,524.0 1339.8,528.5" fill="#a3bc49"/><polygon points="1378.2,526.2 1380.3,511.6 1377.3,509.3 1363.9,509.5 1360.6,514.4 1346.5,513.0 1341.9,528.5 1346.7,533.2 1346.6,542.1 1351.5,547.0 1361.9,546.3 1365.9,543.1 1360.9,528.9 1363.5,523.9" fill="#a3bc49"/><polygon points="1395.5,527.8 1392.8,509.8 1380.3,511.6 1378.2,526.2 1382.7,530.8" fill="#fdc452"/><polygon points="1413.2,510.6 1393.4,510.6 1395.5,527.8 1398.0,529.1 1410.6,526.6 1414.7,531.1 1427.1,531.4 1431.4,527.6 1426.9,515.2 1415.2,514.7" fill="#80b546"/><polygon points="1443.9,525.0 1440.5,512.6 1430.5,512.3 1426.9,515.2 1431.4,527.6 1427.1,531.4 1429.8,545.6 1444.0,544.9 1444.7,543.9 1440.8,528.8" fill="#fdc452"/><polygon points="1458.0,510.5 1457.0,522.9 1458.6,524.8 1474.5,527.6 1477.1,525.6 1476.7,515.6 1460.7,508.5" fill="#a3bc49"/><polygon points="1476.7,515.6 1477.1,525.6 1474.5,527.6 1471.1,544.2 1474.5,546.9 1491.2,540.7 1493.1,538.1 1509.2,547.1 1514.7,529.1 1507.4,524.3 1503.9,514.6 1497.0,513.5 1495.4,512.1 1479.4,511.5" fill="#a3bc49"/><polygon points="1537.9,524.6 1539.8,526.8 1541.9,527.4 1538.5,523.4" fill="#b8c34e"/><polygon points="1346.7,533.2 1341.9,528.5 1339.8,528.5 1338.5,534.5 1332.4,548.0 1335.7,561.1 1348.8,560.2 1351.5,547.0 1346.6,542.1" fill="#fdc452"/><polygon points="1363.5,523.9 1360.9,528.9 1365.9,543.1 1378.1,544.4 1380.2,548.1 1397.8,547.0 1399.5,544.8 1413.6,545.8 1415.3,544.7 1414.7,531.1 1410.6,526.6 1398.0,529.1 1395.5,527.8 1382.7,530.8 1378.2,526.2" fill="#a3bc49"/><polygon points="1415.3,544.7 1425.8,548.4 1429.8,545.6 1427.1,531.4 1414.7,531.1" fill="#80b546"/><polygon points="1457.0,522.9 1443.9,525.0 1440.8,528.8 1444.7,543.9 1455.9,540.7 1458.6,524.8" fill="#a3bc49"/><polygon points="1465.6,545.0 1458.0,561.5 1477.4,562.2 1479.3,560.0 1474.5,546.9 1471.1,544.2 1474.5,527.6 1458.6,524.8 1455.9,540.7" fill="#fdc452"/><polygon points="1530.3,544.1 1540.1,547.6 1543.9,545.2 1543.9,535.6 1541.9,527.4 1539.8,526.8 1537.9,524.6 1514.7,529.1 1509.3,547.4 1524.4,547.7" fill="#b8c34e"/><polygon points="1335.7,561.1 1333.0,548.3 1332.4,548.0 1329.1,555.4 1328.6,570.6 1331.0,572.4 1332.8,565.1" fill="#fdc452"/><polygon points="1351.5,547.0 1348.8,560.2 1335.7,561.1 1332.8,565.1 1331.0,572.4 1335.9,575.9 1348.0,577.6 1348.9,577.1 1351.9,563.0 1363.9,563.4 1361.9,546.3" fill="#fdc452"/><polygon points="1378.9,560.8 1379.7,559.2 1380.2,548.1 1378.1,544.4 1365.9,543.1 1361.9,546.3 1363.9,563.4" fill="#a3bc49"/><polygon points="1397.8,547.0 1380.2,548.1 1379.7,559.2 1396.7,560.3 1399.8,557.7" fill="#a3bc49"/><polygon points="1409.7,560.8 1413.6,545.8 1399.5,544.8 1397.8,547.0 1399.8,557.7" fill="#a3bc49"/><polygon points="1425.1,561.4 1425.8,548.4 1415.3,544.7 1413.6,545.8 1409.7,560.8 1410.6,562.0 1408.6,574.1 1412.5,578.8 1426.3,574.5" fill="#80b546"/><polygon points="1446.4,559.2 1444.0,544.9 1429.8,545.6 1425.8,548.4 1425.8,560.5 1443.6,561.5" fill="#fdc452"/><polygon points="1458.0,561.5 1465.6,545.0 1455.9,540.7 1444.7,543.9 1444.0,544.9 1446.4,559.2 1443.6,561.5 1439.2,576.2 1445.6,581.5 1458.6,573.8 1456.1,562.7" fill="#a3bc49"/><polygon points="1479.3,560.0 1491.5,560.7 1491.2,540.7 1474.5,546.9" fill="#a3bc49"/><polygon points="1492.0,578.2 1524.5,578.2 1527.0,575.9 1523.3,563.0 1524.1,561.8 1524.4,547.7 1509.3,547.4 1493.1,538.1 1491.2,540.7" fill="#a3bc49"/><polygon points="1540.1,547.6 1530.3,544.1 1524.4,547.7 1524.1,561.8 1540.6,555.4" fill="#feb05a"/><polygon points="1543.9,545.2 1540.1,547.6 1540.6,555.4 1543.9,556.8" fill="#a3bc49"/><polygon points="1348.9,577.1 1364.2,579.5 1377.3,578.6 1382.7,573.3 1378.9,560.8 1363.5,563.7 1351.9,563.0" fill="#a3bc49"/><polygon points="1379.7,559.2 1378.9,560.8 1382.7,573.3 1392.1,576.5 1395.8,574.1 1396.7,560.3" fill="#a3bc49"/><polygon points="1395.8,574.1 1392.1,576.5 1394.3,591.7 1409.4,592.3 1411.4,589.6 1412.5,578.8 1408.6,574.1 1410.6,562.0 1409.7,560.8 1399.8,557.7 1396.7,560.3" fill="#a3bc49"/><polygon points="1425.8,560.5 1425.1,561.4 1426.3,574.5 1430.8,577.4 1439.2,576.2 1443.6,561.5" fill="#80b546"/><polygon points="1458.6,573.8 1462.7,576.6 1474.5,574.9 1477.3,578.4 1491.3,579.0 1492.0,578.2 1492.1,561.0 1479.3,560.0 1477.4,562.2 1458.0,561.5 1456.1,562.7" fill="#fdc452"/><polygon points="1540.6,555.4 1524.1,561.8 1523.3,563.0 1527.0,575.9 1538.8,575.1 1540.3,576.1 1543.9,575.1 1543.9,556.8" fill="#a3bc49"/><polygon points="1335.9,575.9 1357.2,591.6 1362.6,591.8 1364.1,579.3" fill="#feb05a"/><polygon points="1362.6,591.8 1379.9,596.8 1377.3,578.6 1364.2,579.5" fill="#a3bc49"/><polygon points="1392.1,576.5 1382.7,573.3 1377.3,578.6 1380.3,596.4 1379.2,603.8 1393.3,612.2 1396.9,610.0" fill="#ff9068"/><polygon points="1430.8,577.4 1426.3,574.5 1412.5,578.8 1411.4,589.6 1428.6,591.0" fill="#a3bc49"/><polygon points="1444.3,594.3 1447.2,592.1 1456.6,595.0 1462.0,591.2 1462.7,576.6 1458.6,573.8 1445.6,581.5 1439.2,576.2 1430.8,577.4 1428.6,591.0 1432.2,596.2" fill="#feb05a"/><polygon points="1475.7,592.9 1478.5,596.3 1489.5,593.6 1492.4,590.8 1491.3,579.0 1477.3,578.4 1474.5,574.9 1462.7,576.6 1462.0,591.2" fill="#feb05a"/><polygon points="1492.0,578.2 1491.3,579.0 1492.4,590.8 1489.5,593.6 1494.5,605.6 1506.9,606.2 1507.9,607.8 1522.8,606.4 1526.7,609.1 1538.1,609.6 1540.9,606.9 1539.5,596.2 1524.9,590.1 1522.6,593.1 1506.3,593.6 1509.3,577.8" fill="#fdc452"/><polygon points="1522.6,593.1 1524.9,590.1 1524.5,578.2 1509.5,578.1 1506.3,593.6" fill="#feb05a"/><polygon points="1539.5,596.2 1543.8,587.7 1540.3,576.1 1538.8,575.1 1527.0,575.9 1524.5,578.2 1524.9,590.1" fill="#a3bc49"/><polygon points="1540.3,576.1 1543.8,587.7 1543.9,587.7 1543.9,575.1" fill="#a3bc49"/><polygon points="1345.1,604.9 1333.8,605.4 1339.6,623.3 1344.5,623.8 1350.2,609.0 1345.2,606.1" fill="#a3bc49"/><polygon points="1339.6,623.3 1340.8,627.0 1346.6,625.8 1348.5,631.8 1349.2,629.6 1360.1,626.4 1367.3,639.9 1378.5,639.6 1379.1,628.3 1363.3,619.5 1363.3,613.7 1357.9,609.0 1358.5,606.3 1345.1,604.9 1345.2,606.1 1350.2,609.0 1344.5,623.8" fill="#a3bc49"/><polygon points="1361.9,592.4 1357.2,591.6 1361.2,595.2" fill="#a3bc49"/><polygon points="1363.3,613.7 1363.3,619.5 1379.1,628.3 1383.1,622.6 1374.8,609.7 1379.2,603.8 1379.9,596.8 1362.6,591.8 1361.9,592.4 1361.2,595.2 1365.3,600.2 1365.3,607.2 1358.5,606.3 1357.9,609.0" fill="#feb05a"/><polygon points="1412.1,603.0 1409.4,592.3 1394.0,592.0 1396.9,610.0 1393.3,612.2 1390.8,620.7 1394.1,624.1 1408.4,623.2 1410.4,620.2 1407.3,610.7" fill="#a3bc49"/><polygon points="1444.2,613.8 1444.3,594.3 1432.2,596.2 1428.6,591.0 1411.4,589.6 1409.4,592.3 1412.1,603.0 1407.3,610.7 1410.4,620.2 1424.3,621.9 1429.2,609.8" fill="#feb05a"/><polygon points="1444.3,594.3 1444.2,613.8 1446.6,621.7 1444.3,625.9 1444.4,635.2 1439.0,640.8 1442.7,653.5 1454.9,653.2 1460.4,640.1 1461.9,639.4 1460.9,626.3 1456.7,622.0 1464.1,609.6 1459.0,605.2 1456.6,595.0 1447.2,592.1" fill="#fdc452"/><polygon points="1462.0,591.2 1456.6,595.0 1459.0,605.2 1464.1,609.6 1456.7,622.0 1460.9,626.3 1474.7,621.7 1473.9,610.7 1476.8,607.9 1478.5,596.3 1475.7,592.9" fill="#ff9068"/><polygon points="1478.5,596.3 1476.8,607.9 1473.9,610.7 1475.0,621.0 1490.2,624.1 1493.1,620.2 1506.2,619.0 1507.9,607.8 1506.9,606.2 1494.5,605.6 1489.5,593.6" fill="#fdc452"/><polygon points="1543.9,607.0 1543.9,587.7 1543.8,587.7 1539.5,596.2 1540.9,606.9" fill="#a3bc49"/><polygon points="1379.2,603.8 1374.8,609.7 1383.1,622.6 1379.1,628.3 1378.5,639.6 1379.3,640.2 1394.7,639.0 1394.1,624.1 1390.8,620.7 1393.3,612.2" fill="#a3bc49"/><polygon points="1429.2,609.8 1424.3,621.9 1425.4,624.1 1444.3,625.9 1446.6,621.7 1444.2,613.8" fill="#a3bc49"/><polygon points="1522.8,606.4 1507.9,607.8 1506.2,619.0 1509.3,624.1 1506.4,636.5 1507.2,637.7 1521.5,641.4 1524.1,639.6 1523.3,626.3 1520.2,623.8 1526.7,609.1" fill="#fdc452"/><polygon points="1523.3,626.3 1524.1,639.6 1540.1,639.8 1536.8,651.8 1525.4,658.2 1526.2,668.2 1528.1,671.0 1538.3,671.8 1543.9,660.9 1543.9,625.4 1540.0,626.5 1539.0,624.9 1538.1,609.6 1526.7,609.1 1520.2,623.8" fill="#a3bc49"/><polygon points="1539.0,624.9 1540.0,626.5 1543.9,625.4 1543.9,607.0 1540.9,606.9 1538.1,609.6" fill="#feb05a"/><polygon points="1363.3,643.6 1367.3,639.9 1360.1,626.4 1349.2,629.6 1348.5,631.8 1352.7,644.4" fill="#80b546"/><polygon points="1408.0,636.9 1408.4,623.2 1394.1,624.1 1394.9,638.8" fill="#fdc452"/><polygon points="1425.4,624.1 1424.3,621.9 1410.4,620.2 1408.4,623.2 1408.0,636.9 1410.8,654.0 1421.9,653.8 1426.8,639.5 1424.8,637.0" fill="#fdc452"/><polygon points="1439.0,640.8 1444.4,635.2 1444.3,625.9 1425.4,624.1 1424.8,637.0 1426.8,639.5" fill="#a3bc49"/><polygon points="1474.7,621.7 1460.9,626.3 1461.9,639.4 1460.4,640.1 1454.9,653.2 1442.7,653.5 1441.6,655.2 1440.4,666.9 1442.6,669.6 1458.3,671.0 1459.9,659.9 1476.1,654.4 1475.2,641.6 1476.5,640.4" fill="#a3bc49"/><polygon points="1475.0,621.0 1476.5,640.4 1475.2,641.6 1476.1,654.4 1478.0,656.9 1477.0,672.4 1493.0,674.1 1495.2,658.0 1496.2,657.2 1489.1,637.7 1490.2,636.8 1490.2,624.1" fill="#fdc452"/><polygon points="1506.4,636.5 1509.3,624.1 1506.2,619.0 1493.1,620.2 1490.2,624.1 1490.2,636.8" fill="#a3bc49"/><polygon points="1361.7,661.8 1361.6,663.4 1368.4,673.6 1378.5,673.4 1378.5,656.8 1380.6,654.5 1391.7,657.9 1397.6,653.4 1394.7,639.0 1379.3,640.2 1378.5,639.6 1367.3,639.9 1363.3,643.6 1352.7,644.4 1358.3,658.4" fill="#a3bc49"/><polygon points="1408.2,637.0 1394.7,639.0 1397.6,653.4 1408.4,655.9 1410.8,654.0" fill="#feb05a"/><polygon points="1442.7,653.5 1439.0,640.8 1426.8,639.5 1421.9,653.8 1422.6,654.7 1441.6,655.2" fill="#80b546"/><polygon points="1506.4,636.5 1490.2,636.8 1489.1,637.7 1496.2,657.2 1505.0,655.6 1521.6,654.6 1521.5,641.4 1507.2,637.7" fill="#feb05a"/><polygon points="1525.4,658.2 1536.8,651.8 1540.1,639.8 1524.1,639.6 1521.5,641.4 1521.6,654.6" fill="#feb05a"/><polygon points="1361.7,661.8 1359.8,660.7 1361.6,663.4" fill="#a3bc49"/><polygon points="1381.4,675.4 1393.8,671.8 1398.2,673.7 1407.3,671.5 1412.3,674.3 1423.8,671.0 1425.6,668.5 1422.6,654.7 1421.9,653.8 1410.8,654.0 1408.4,655.9 1397.6,653.4 1391.7,657.9 1380.6,654.5 1378.5,656.8 1378.5,673.4" fill="#fdc452"/><polygon points="1422.6,654.7 1425.6,668.5 1423.8,671.0 1430.8,685.0 1440.0,682.9 1442.6,669.6 1440.4,666.9 1441.6,655.2" fill="#fdc452"/><polygon points="1458.3,671.0 1459.0,671.9 1473.9,675.3 1477.0,672.4 1478.0,656.9 1476.1,654.4 1459.9,659.9" fill="#fdc452"/><polygon points="1504.9,655.7 1495.2,658.0 1493.1,674.0 1507.0,674.8 1510.2,669.3" fill="#fdc452"/><polygon points="1505.0,655.6 1510.2,669.3 1526.2,668.2 1525.4,658.2 1521.6,654.6" fill="#a3bc49"/><polygon points="1378.5,673.4 1368.4,673.6 1375.8,688.0 1378.3,691.0 1381.4,687.1 1396.8,690.7 1397.5,690.1 1398.2,673.7 1393.8,671.8 1381.4,675.4" fill="#b8c34e"/><polygon points="1396.8,690.7 1394.8,702.6 1388.1,702.4 1396.1,709.3 1397.5,706.2 1408.0,707.5 1413.3,702.8 1412.9,691.2 1414.0,689.8 1428.0,689.1 1430.8,685.0 1423.8,671.0 1412.3,674.3 1407.3,671.5 1398.2,673.7" fill="#fdc452"/><polygon points="1444.0,686.3 1455.1,686.2 1459.5,692.6 1474.7,684.8 1476.2,686.4 1491.6,686.3 1492.7,685.3 1493.0,674.1 1477.0,672.4 1473.9,675.3 1459.0,671.9 1458.3,671.0 1442.6,669.6 1440.0,682.9" fill="#a3bc49"/><polygon points="1492.7,685.3 1491.6,686.3 1488.4,702.4 1494.2,704.9 1503.6,704.3 1504.7,707.0 1524.0,689.2 1522.7,686.2 1512.0,687.0 1507.0,674.8 1493.1,674.0" fill="#feb05a"/><polygon points="1512.0,687.0 1522.7,686.2 1523.6,687.2 1525.9,687.4 1534.6,678.2 1538.3,671.8 1528.1,671.0 1526.2,668.2 1510.2,669.3 1507.0,674.8" fill="#a3bc49"/><polygon points="1394.8,702.6 1396.8,690.7 1381.4,687.1 1378.5,691.0 1386.2,700.8 1388.1,702.4" fill="#fdc452"/><polygon points="1424.9,706.5 1432.1,701.5 1441.6,703.7 1444.0,686.3 1440.0,682.9 1430.8,685.0 1428.0,689.1 1414.0,689.8 1412.9,691.2 1413.3,702.8" fill="#feb05a"/><polygon points="1455.1,686.2 1444.0,686.3 1441.6,703.7 1443.7,705.5 1459.4,697.8 1465.1,703.4 1479.2,702.8 1476.2,686.4 1474.7,684.8 1459.5,692.6" fill="#a3bc49"/><polygon points="1479.2,702.8 1480.2,703.5 1488.4,702.4 1491.6,686.3 1476.2,686.4" fill="#a3bc49"/><polygon points="1523.6,687.2 1524.0,689.2 1525.9,687.4" fill="#a3bc49"/><polygon points="1396.1,709.3 1402.6,714.8 1410.6,720.4 1408.0,707.5 1397.5,706.2" fill="#fdc452"/><polygon points="1413.3,702.8 1408.0,707.5 1410.6,720.4 1415.6,723.1 1425.3,718.8 1428.5,720.5 1440.8,718.9 1444.8,713.0 1443.7,705.5 1441.6,703.7 1432.1,701.5 1424.9,706.5" fill="#a3bc49"/><polygon points="1459.4,697.8 1443.7,705.5 1444.8,713.0 1473.6,723.6 1478.3,720.9 1480.2,703.5 1479.2,702.8 1465.1,703.4" fill="#a3bc49"/><polygon points="1495.0,716.0 1504.7,707.0 1503.6,704.3 1494.2,704.9 1488.4,702.4 1480.2,703.5 1478.3,720.9 1473.6,723.6 1473.5,726.3 1477.5,725.3" fill="#a3bc49"/><polygon points="1428.5,720.5 1425.3,718.8 1415.6,723.1 1429.6,728.2" fill="#feb05a"/><polygon points="1429.6,728.2 1432.9,729.4 1460.0,729.5 1473.5,726.3 1473.6,723.6 1444.8,713.0 1440.8,718.9 1428.5,720.5" fill="#a3bc49"/><polygon points="1493.8,480.5 1468.2,517.0 1500.8,538.0 1518.3,528.6 1517.1,504.2" fill="#a3bc49"/><polygon points="1518.3,528.6 1500.8,538.0 1502.0,543.8 1543.9,535.6 1541.6,526.3 1517.1,504.2" fill="#b8c34e"/><polygon points="1502.0,546.1 1543.9,545.0 1543.9,535.6 1502.0,543.8" fill="#b8c34e"/><polygon points="1502.0,576.4 1515.0,578.0 1526.4,572.0 1526.4,546.1 1502.0,546.1" fill="#a3bc49"/><polygon points="1527.0,587.0 1543.9,587.0 1543.9,557.8 1527.0,557.8" fill="#a3bc49"/><polygon points="1528.8,556.6 1543.9,556.6 1543.9,545.5 1528.8,545.5" fill="#feb05a"/><polygon points="1408.4,515.8 1403.7,522.8 1407.2,534.5 1415.4,542.6 1423.5,540.3 1423.5,510.0 1416.6,507.7" fill="#80b546"/><polygon points="1338.5,534.5 1329.1,555.4 1330.3,570.6 1345.5,568.3 1346.6,561.3 1362.9,552.0 1364.1,542.6 1354.8,536.8 1349.0,531.0 1340.8,525.1" fill="#fdc452"/><polygon points="1355.9,590.4 1369.9,584.6 1372.3,575.3 1365.3,565.9 1346.6,568.3 1330.3,571.8" fill="#feb05a"/><polygon points="1376.9,590.0 1380.4,596.7 1387.4,600.2 1395.6,596.7 1397.9,592.0 1396.7,584.6 1388.6,577.6 1379.3,579.9" fill="#ff9068"/><polygon points="1402.6,714.8 1416.6,721.8 1423.5,720.6 1421.2,703.2 1423.5,688.0 1394.4,688.0 1386.2,700.8" fill="#fdc452"/><polygon points="1375.8,688.0 1394.4,688.0 1396.7,681.7 1381.6,671.3 1371.1,675.9" fill="#b8c34e"/><polygon points="1490.3,657.3 1491.5,662.0 1508.9,653.8 1520.6,662.0 1543.9,662.0 1541.6,646.8 1529.9,649.1 1520.6,643.3 1496.1,636.3" fill="#feb05a"/><polygon points="1518.3,673.6 1522.9,685.2 1534.6,678.2 1542.6,664.3 1519.4,663.1" fill="#a3bc49"/><polygon points="1500.8,675.9 1517.1,670.1 1518.3,661.9 1507.8,653.8 1490.3,663.1 1478.6,672.4" fill="#fdc452"/><polygon points="1460.0,666.6 1467.0,664.3 1470.5,653.8 1477.5,650.3 1484.5,643.3 1483.3,635.1 1468.2,629.3 1460.0,631.6" fill="#a3bc49"/><polygon points="1460.0,729.5 1477.5,725.3 1490.3,716.0 1477.5,704.3 1470.5,691.5 1460.0,692.7" fill="#a3bc49"/><polygon points="1490.3,716.0 1495.0,716.0 1516.0,695.0 1498.5,698.5 1477.5,704.3" fill="#b8c34e"/><polygon points="1351.3,641.0 1359.4,657.3 1376.9,641.0 1374.6,630.5 1381.6,622.3 1383.9,615.3 1379.3,613.0 1365.3,621.1 1353.6,622.3 1346.6,625.8" fill="#80b546"/><polygon points="1376.9,641.0 1392.1,638.6 1394.4,643.3 1411.9,620.0 1404.9,613.0 1409.6,604.8 1406.1,600.2 1388.6,609.5 1383.9,618.8 1374.6,630.5" fill="#a3bc49"/><polygon points="1416.6,599.0 1408.4,609.5 1409.6,615.3 1417.7,620.0 1428.2,615.3 1437.5,601.3 1438.7,592.0 1416.6,592.0" fill="#feb05a"/><polygon points="1371.1,675.9 1394.4,654.9 1383.9,652.6 1376.9,643.3 1360.6,657.3" fill="#a3bc49"/><polygon points="1413.1,467.6 1421.2,474.6 1428.2,475.8 1428.2,458.7 1408.4,460.6" fill="#a3bc49"/><polygon points="1429.4,475.8 1437.5,480.4 1443.4,476.9 1452.7,468.8 1429.4,459.4" fill="#fdc452"/><polygon points="1342.0,522.8 1349.0,529.8 1355.9,539.1 1365.3,536.8 1383.9,534.5 1385.1,528.6 1369.9,506.5 1341.4,507.7" fill="#a3bc49"/><polygon points="1366.4,546.1 1369.9,553.1 1390.9,554.3 1383.9,535.6 1366.4,538.0" fill="#a3bc49"/><polygon points="1392.1,556.6 1400.2,577.6 1413.1,565.9 1407.2,561.3 1410.7,554.3 1399.1,546.1" fill="#a3bc49"/><polygon points="1341.4,507.7 1373.4,505.3 1369.9,496.0 1341.4,496.0" fill="#fdc452"/><polygon points="1381.6,514.6 1395.6,515.8 1414.2,508.8 1404.9,501.8 1374.6,511.2" fill="#feb05a"/><polygon points="1461.0,498.0 1465.8,504.2 1467.0,493.2 1471.7,486.2 1469.3,480.4 1460.0,481.6" fill="#f2557d"/><polygon points="1315.2,423.3 1318.6,421.0 1323.3,425.1 1330.3,422.1 1333.8,423.3 1337.9,424.5 1340.2,426.8 1350.1,423.3 1353.0,426.2 1351.3,429.1 1347.8,431.5 1346.6,438.5 1347.8,440.8 1346.6,445.5 1342.5,446.0 1340.8,450.1 1342.0,453.6 1335.0,455.9 1330.3,458.3 1329.1,453.6 1333.8,450.1 1336.1,446.6 1328.0,440.8 1324.5,441.4 1318.6,445.5 1317.5,442.0 1314.0,439.6 1317.5,436.1 1321.6,435.0 1322.1,432.6" fill="#a3bc49"/><polygon points="1330.3,458.3 1335.0,455.9 1339.6,457.1 1340.2,462.9 1343.1,466.4 1344.9,474.6 1346.6,480.4 1350.1,482.8 1354.8,485.7 1350.1,488.6 1345.5,486.2 1340.8,483.3 1335.0,481.6 1332.1,479.3 1333.2,474.6 1330.3,469.9 1328.0,465.3 1330.9,461.8" fill="#fdc452"/><polygon points="1399.1,433.8 1407.2,431.5 1407.2,423.9 1411.9,422.7 1413.6,425.1 1423.5,420.4 1425.3,422.1 1424.1,425.1 1418.9,426.2 1418.3,433.8 1420.6,435.0 1417.7,439.6 1415.4,450.1 1413.6,458.3 1406.1,460.0 1404.3,449.0" fill="#feb05a"/><polygon points="1340.8,524.0 1328.0,524.0 1324.5,528.0 1320.4,525.1 1319.8,513.5 1315.2,507.7 1317.5,496.0 1324.5,493.2 1333.8,492.7 1340.8,496.0" fill="#fdc452"/><polygon points="1312.8,641.0 1316.3,636.3 1321.0,632.8 1323.3,625.8 1329.1,621.1 1333.8,622.3 1335.0,630.5 1338.5,631.6 1332.6,636.3 1325.6,638.6 1324.5,644.4 1318.6,645.6" fill="#b8c34e"/><polygon points="1346.6,650.3 1351.3,645.6 1355.9,658.4 1350.1,657.3" fill="#a3bc49"/><polygon points="1329.7,664.3 1336.1,658.4 1349.0,659.6 1350.1,666.6 1349.0,680.6 1340.8,685.2 1333.8,678.2 1332.6,668.9" fill="#a3bc49"/><polygon points="1432.9,729.4 1435.2,735.8 1425.9,747.4 1421.2,745.1 1415.4,739.3 1411.9,731.1 1407.2,727.6 1411.9,721.8" fill="#feb05a"/><polygon points="1543.9,596.7 1556.7,595.5 1561.4,599.0 1559.1,607.2 1562.6,611.8 1571.9,608.3 1583.5,606.0 1589.4,608.3 1590.5,613.0 1582.4,615.3 1580.0,622.3 1564.9,624.6 1560.2,627.0 1553.2,627.0 1543.9,620.0" fill="#feb05a"/><polygon points="1577.7,622.3 1583.5,615.3 1591.7,611.8 1598.7,614.1 1599.9,618.8 1594.0,621.1 1596.4,625.8 1588.2,629.3 1577.7,627.0" fill="#a3bc49"/><polygon points="1577.7,638.6 1585.9,634.0 1598.7,636.3 1599.3,646.8 1581.2,645.6" fill="#a3bc49"/><polygon points="1525.3,611.8 1556.7,629.3 1552.1,645.6 1541.6,641.0 1540.4,646.8 1529.9,649.1 1528.8,638.6 1521.8,636.3" fill="#a3bc49"/></g><circle cx="1353.6" cy="496.4" r="6.6" fill="#4ca1f0"/><circle cx="1395.0" cy="497.8" r="9.9" fill="#4ca1f0"/><circle cx="1448.6" cy="504.2" r="12.8" fill="#4ca1f0"/><circle cx="1435.5" cy="566.5" r="22.5" fill="#4ca1f0"/><circle cx="1382.5" cy="569.0" r="9.9" fill="#4ca1f0"/><circle cx="1473.7" cy="554.0" r="16.0" fill="#4ca1f0"/><circle cx="1496.0" cy="603.0" r="22.0" fill="#4ca1f0"/><circle cx="1352.4" cy="608.0" r="6.4" fill="#4ca1f0"/><circle cx="1396.6" cy="656.5" r="10.4" fill="#4ca1f0"/><circle cx="1430.1" cy="678.1" r="12.1" fill="#4ca1f0"/><circle cx="1495.0" cy="688.7" r="11.0" fill="#4ca1f0"/><circle cx="1437.6" cy="715.4" r="5.5" fill="#4ca1f0"/></svg>
<div class="abs" style="left:1065.5px;top:477px;width:8px;height:190px;background:rgba(255,255,255,.6);border-left:1px solid #bdbdbd;border-right:1px solid #bdbdbd"></div>
<div class="abs" style="left:1053.5px;top:443.5px;width:33px;height:33.5px;border-radius:3px;background:#fff;box-shadow:0 1px 3px rgba(0,0,0,.28),0 0 1px rgba(0,0,0,.2);"></div>
<div class="abs" style="left:1053.5px;top:666px;width:33.5px;height:35px;border-radius:3px;background:#fff;box-shadow:0 1px 3px rgba(0,0,0,.28),0 0 1px rgba(0,0,0,.2);"></div>
<svg style="left:1053.5px;top:443.5px" width="34" height="34"><rect x="7.8" y="14.6" width="17.6" height="4.4" fill="#5c5c5c"/><rect x="14.4" y="8" width="4.4" height="17.6" fill="#5c5c5c"/></svg>
<svg style="left:1053.5px;top:666px" width="34" height="35"><rect x="8" y="14.5" width="17.6" height="4.6" fill="#5c5c5c"/></svg>
<div class="abs" style="left:1051.5px;top:574.5px;width:35.5px;height:17.5px;border-radius:3px;background:#fff;box-shadow:0 1px 3px rgba(0,0,0,.28),0 0 1px rgba(0,0,0,.2);"></div>
<svg style="left:1051.5px;top:574.5px" width="36" height="18"><rect x="11.5" y="6" width="1" height="1" fill="#666"/><rect x="11.5" y="9.4" width="1" height="1" fill="#666"/><rect x="15.1" y="6" width="1" height="1" fill="#666"/><rect x="15.1" y="9.4" width="1" height="1" fill="#666"/><rect x="18.7" y="6" width="1" height="1" fill="#666"/><rect x="18.7" y="9.4" width="1" height="1" fill="#666"/><rect x="22.3" y="6" width="1" height="1" fill="#666"/><rect x="22.3" y="9.4" width="1" height="1" fill="#666"/></svg>
<div class="abs" style="left:1636px;top:318px;width:225px;height:238.5px;border-radius:4px;background:#fff"></div>
<div class="t " id="t_lg1" style="left:1646.8px;transform-origin:0 50%;top:335.8px;font-size:15.5px;font-weight:700;color:#1f1f1f">Магазины</div>
<div class="t " id="t_lg2" style="left:1646.8px;transform-origin:0 50%;top:368.3px;font-size:15.5px;transform:scaleX(1.028);color:#8c8c8c">Продажа,&nbsp;₽</div>
<svg style="left:0;top:0" width="1899" height="824"><polygon points="1646.6,400 1850.5,386.4 1850.5,400" fill="#fff" stroke="#2b2b2b" stroke-width="1" stroke-linejoin="miter"/></svg>
<div class="t " id="t_lg3" style="left:1646.8px;transform-origin:0 50%;top:406.4px;font-size:16px;transform:scaleX(1.016);color:#1f1f1f">1,33M</div>
<div class="t " id="t_lg4" style="right:48.3px;transform-origin:100% 50%;top:406.4px;font-size:16px;color:#1f1f1f">4,25M</div>
<div class="abs" style="left:1636px;top:430px;width:225px;height:1px;background:#e6e6e6"></div>
<div class="t " id="t_lg5" style="left:1646.8px;transform-origin:0 50%;top:448.8px;font-size:15.5px;transform:scaleX(0.974);font-weight:700;color:#1f1f1f">Районы доставки</div>
<div class="t " id="t_lg6" style="left:1646.8px;transform-origin:0 50%;top:481.9px;font-size:15.5px;transform:scaleX(1.032);color:#8c8c8c">Время доставки, дн.</div>
<div class="abs" style="left:1646.2px;top:509px;width:204.5px;height:9.7px;border-radius:3px;background:linear-gradient(90deg,#4f9f22 0%,#a6b534 28%,#fec638 50%,#ff9248 75%,#ff3d62 100%)"></div>
<div class="t " id="t_lg7" style="left:1646.6px;transform-origin:0 50%;top:529.9px;font-size:16px;transform:scaleX(1.008);color:#1f1f1f">4,98</div>
<div class="t " id="t_lg8" style="left:1733.1px;transform-origin:0 50%;top:529.9px;font-size:16px;transform:scaleX(1.012);color:#1f1f1f">6,37</div>
<div class="t " id="t_lg9" style="right:48.2px;transform-origin:100% 50%;top:529.9px;font-size:16px;color:#1f1f1f">7,75</div>
</body></html>
